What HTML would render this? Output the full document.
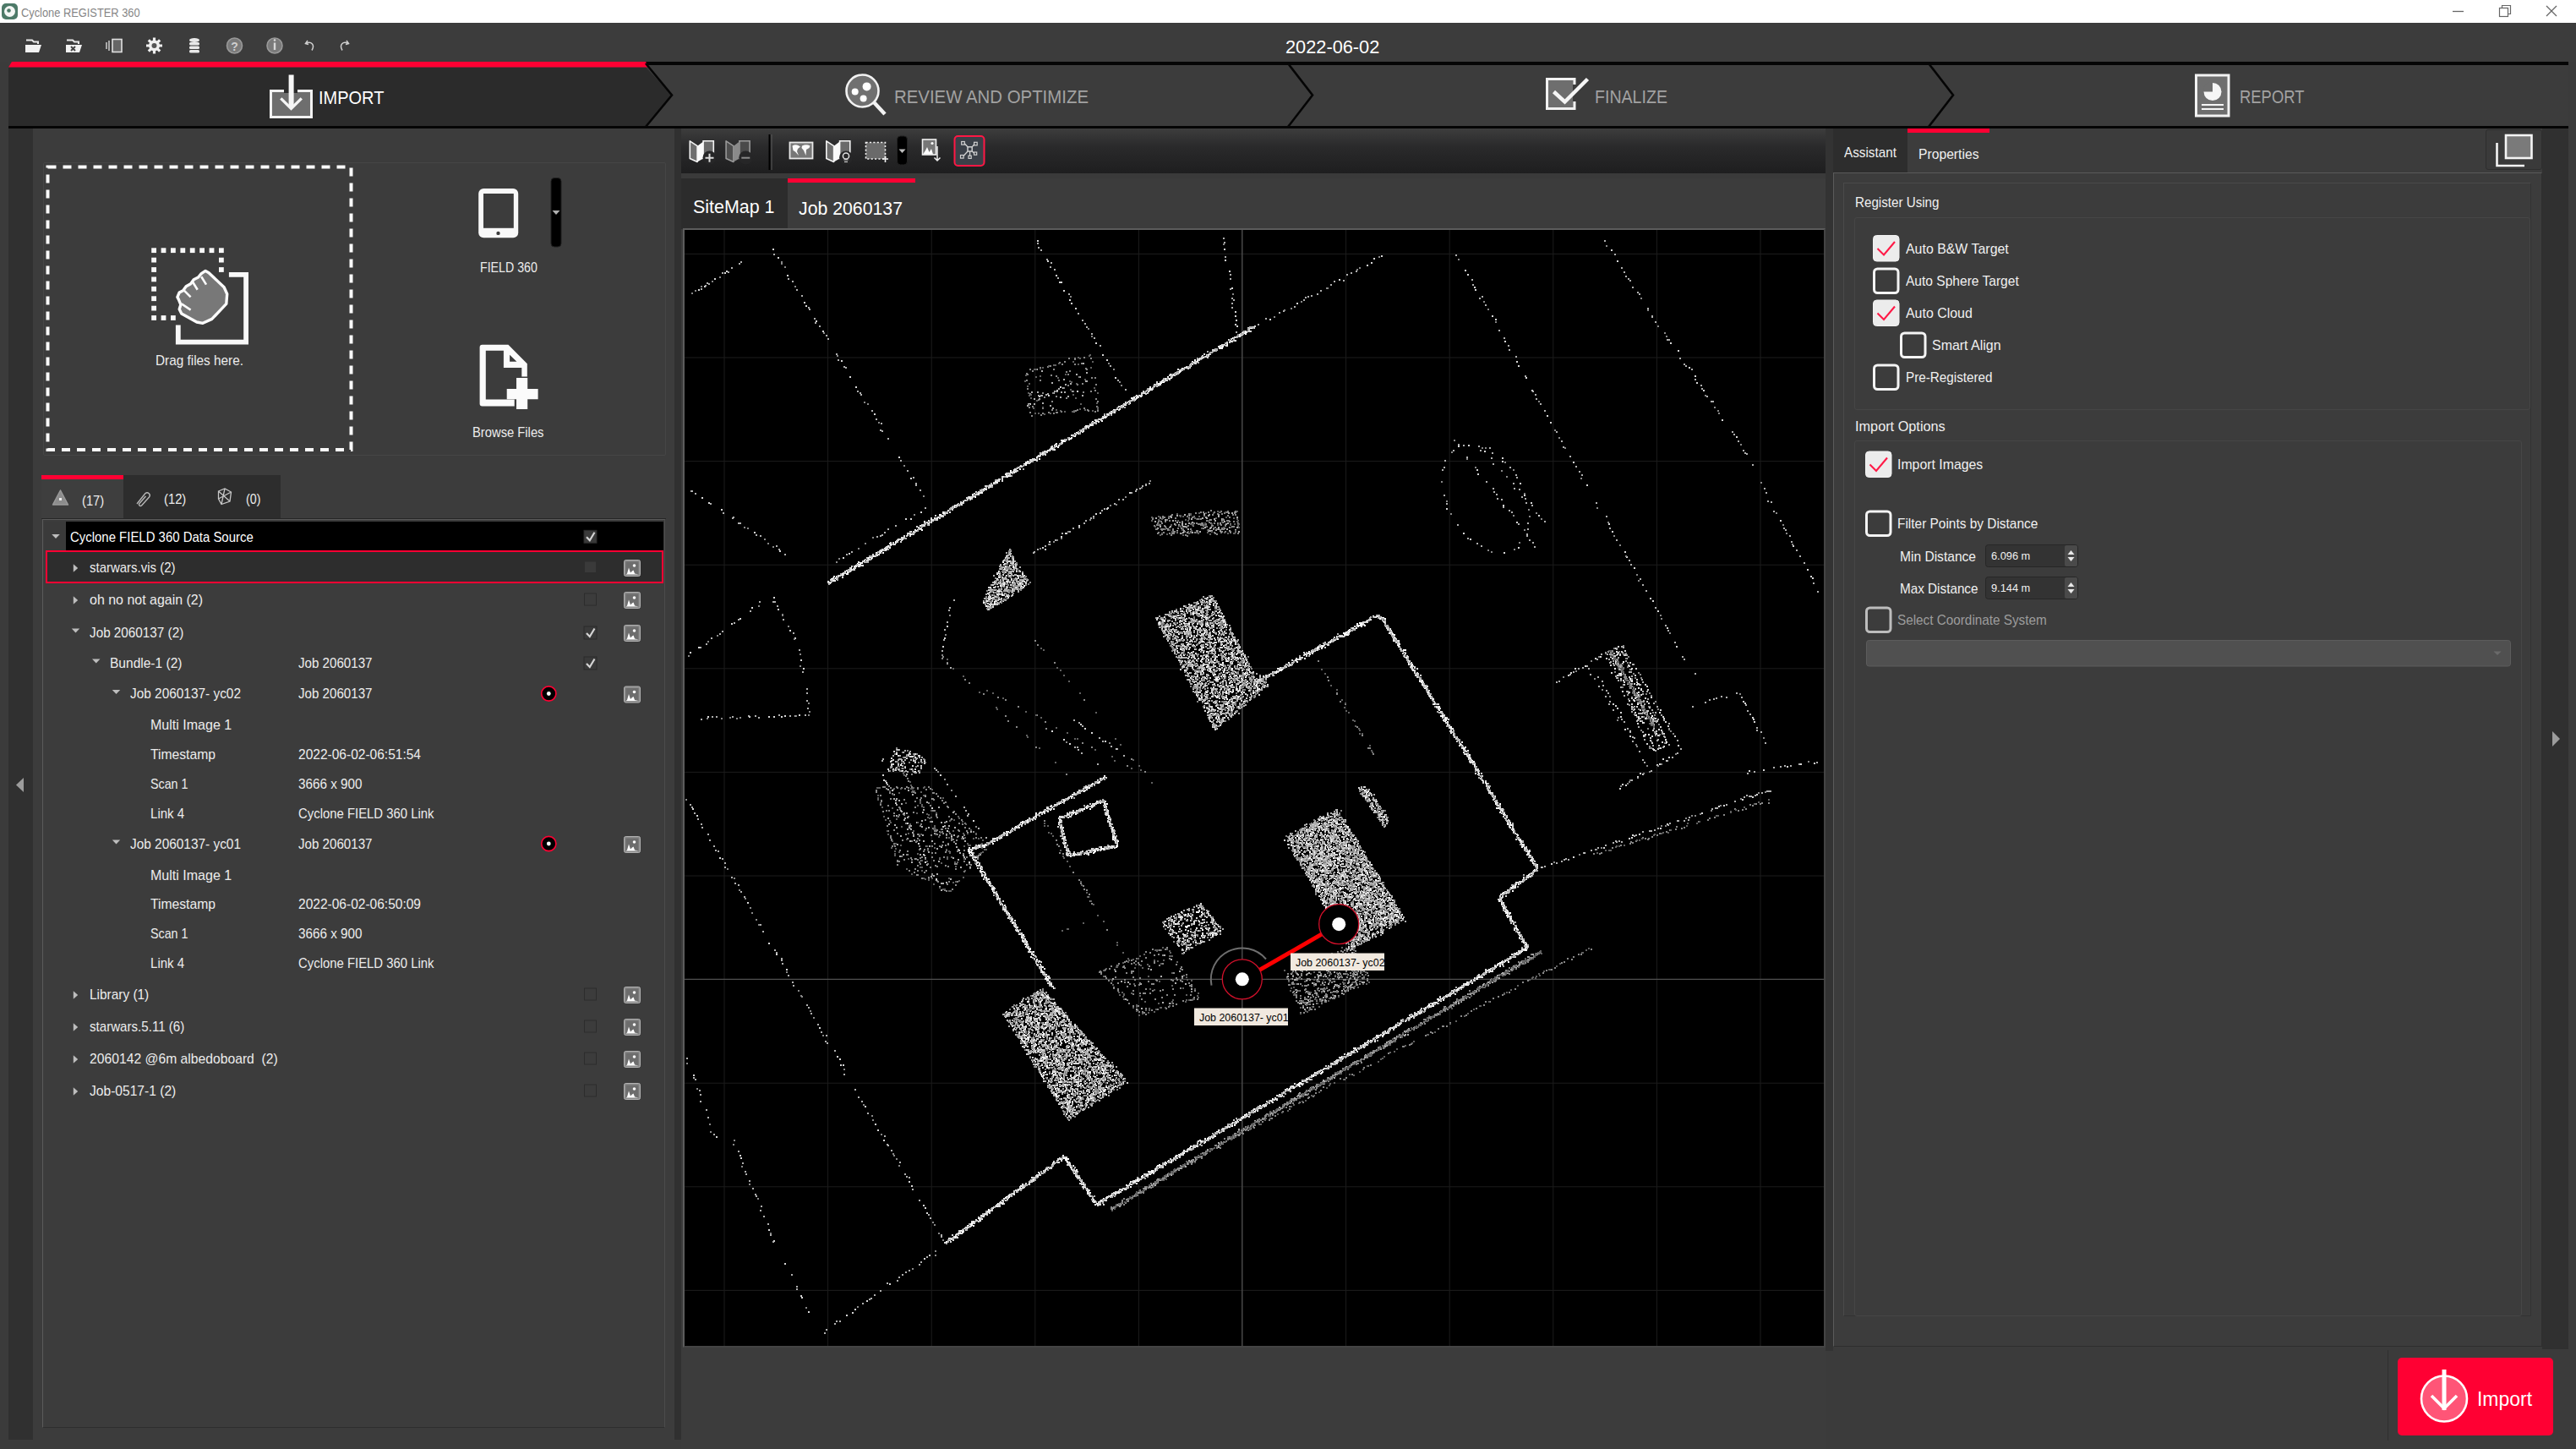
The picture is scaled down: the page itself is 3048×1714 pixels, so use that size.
<!DOCTYPE html>
<html><head><meta charset="utf-8">
<style>
*{box-sizing:border-box;margin:0;padding:0}
html,body{width:3048px;height:1714px;overflow:hidden;background:#3b3b3b;font-family:"Liberation Sans",sans-serif;color:#f0f0f0}
.a{position:absolute}
.t{position:absolute;white-space:nowrap;line-height:1;transform-origin:0 0}
svg{position:absolute;overflow:visible}
</style></head><body>
<div class="a" style="left:0px;top:0px;width:3048px;height:27px;background:#fff"></div><svg style="left:0;top:0" width="30" height="27">
<rect x="2" y="4" width="19" height="19" rx="5" fill="#4d7a68"/>
<circle cx="11.5" cy="13.5" r="6.5" fill="#f4f7f5"/>
<circle cx="10.5" cy="12.5" r="2.3" fill="#4d7a68"/>
</svg><div class="t" style="transform:scaleX(0.8561);left:25px;top:7px;font-size:15px;color:#868686;">Cyclone REGISTER 360</div><svg style="left:0;top:0" width="3048" height="27">
<path d="M2902 13.5 H2915" stroke="#666" stroke-width="1.3"/>
<rect x="2957.5" y="9.5" width="10" height="10" fill="none" stroke="#666" stroke-width="1.2"/>
<path d="M2960.5 9.5 V6.5 H2970.5 V16.5 H2967.5" fill="none" stroke="#666" stroke-width="1.2"/>
<path d="M3013 7 L3025 19 M3025 7 L3013 19" stroke="#666" stroke-width="1.3"/>
</svg><div class="a" style="left:0px;top:27px;width:3048px;height:46px;background:#3c3c3c"></div><div id="date" class="t" style="transform:scaleX(0.9889);left:1521px;top:45px;font-size:22px;color:#fff">2022-06-02</div><svg style="left:0;top:0" width="500" height="80" fill="none">
<!-- open folder -->
<path d="M31 47.5 H38 L40 49.5 H45 V52" stroke="#e8e8e8" stroke-width="2"/>
<path d="M30 53 H49 L46 62 H30 Z" fill="#f2f2f2"/>
<!-- close folder -->
<path d="M79 47.5 H86 L88 49.5 H93 V52" stroke="#e8e8e8" stroke-width="2"/>
<path d="M78 53 H97 L94 62 H78 Z" fill="#f2f2f2"/>
<path d="M84 55 L89 60 M89 55 L84 60" stroke="#444" stroke-width="2"/>
<!-- export -->
<rect x="133" y="46.5" width="11" height="15" stroke="#e0e0e0" stroke-width="1.6" fill="#666"/>
<path d="M126 50 V58 M129 48 V60" stroke="#d8d8d8" stroke-width="1.4"/>
<!-- gear -->
<g transform="translate(182.5 54)">
<circle r="6.5" fill="#f0f0f0"/>
<path d="M0 -9.5 V9.5 M-9.5 0 H9.5 M-6.7 -6.7 L6.7 6.7 M6.7 -6.7 L-6.7 6.7" stroke="#f0f0f0" stroke-width="3.2"/>
<circle r="3" fill="#555"/>
</g>
<!-- database -->
<g fill="#e8e8e8">
<ellipse cx="230" cy="47.5" rx="6" ry="2.5"/>
<rect x="224" y="50" width="12" height="3.5" rx="1.5"/>
<rect x="224" y="54.5" width="12" height="3.5" rx="1.5"/>
<rect x="224" y="59" width="12" height="3.5" rx="1.5"/>
</g>
<!-- help -->
<circle cx="277.5" cy="54" r="9" stroke="#9a9a9a" stroke-width="1.6" fill="#7a7a7a"/>
<text x="277.5" y="59.5" font-size="14" font-family="Liberation Sans" font-weight="bold" fill="#cfcfcf" text-anchor="middle">?</text>
<!-- info -->
<circle cx="325" cy="54" r="9" stroke="#9a9a9a" stroke-width="1.6" fill="#7a7a7a"/>
<path d="M325 50.5 V59" stroke="#d8d8d8" stroke-width="2.4"/>
<circle cx="325" cy="47.5" r="1.3" fill="#d8d8d8"/>
<!-- undo -->
<path d="M364 48 L361.5 51.5 L365 52.5" stroke="#d0d0d0" stroke-width="1.5"/>
<path d="M362 51.5 C368 48 373 53 369 59.5" stroke="#d0d0d0" stroke-width="1.5"/>
<!-- redo -->
<path d="M410 48 L412.5 51.5 L409 52.5" stroke="#d0d0d0" stroke-width="1.5"/>
<path d="M412 51.5 C406 48 401 53 405 59.5" stroke="#d0d0d0" stroke-width="1.5"/>
</svg><div class="a" style="left:10px;top:73px;width:3029px;height:79px;background:#3c3c3c"></div><div class="a" style="left:764px;top:73px;width:2275px;height:3.5px;background:#050505"></div><div class="a" style="left:10px;top:149px;width:3029px;height:3px;background:#050505"></div><svg style="left:0;top:0" width="3048" height="160">
 <polygon points="10,79.5 764,79.5 795,112.5 764,149 10,149" fill="#2b2b2b"/>
 <polygon points="14,73 764,73 768,79.5 10,79.5" fill="#ff0033"/>
 <polyline points="764,75 795,112.5 764,150" fill="none" stroke="#050505" stroke-width="2.6"/>
 <polyline points="1524,75 1553,112.5 1524,150" fill="none" stroke="#050505" stroke-width="2.6"/>
 <polyline points="2282,75 2311,112.5 2282,150" fill="none" stroke="#050505" stroke-width="2.6"/>
 <!-- import icon -->
 <rect x="320.5" y="107.5" width="48" height="31" fill="#6e6e6e" stroke="#f2f2f2" stroke-width="3"/>
 <rect x="336" y="104" width="16" height="6" fill="#2b2b2b"/>
 <path d="M344.6 88.5 V127" stroke="#f6f6f6" stroke-width="6"/>
 <path d="M332.3 116.3 L344.5 128.5 L356.8 116.3" stroke="#f6f6f6" stroke-width="3.3" fill="none"/>
 <!-- review icon -->
 <path d="M1034 121 L1047 135" stroke="#f2f2f2" stroke-width="4.5"/>
 <circle cx="1020.5" cy="107.5" r="19" fill="#707070" stroke="#f2f2f2" stroke-width="2.6"/>
 <circle cx="1025.6" cy="102.4" r="5" fill="#fff"/>
 <circle cx="1011.7" cy="108.6" r="4" fill="#fff"/>
 <circle cx="1021.6" cy="116.6" r="4" fill="#fff"/>
 <!-- finalize icon -->
 <rect x="1830.5" y="93.5" width="32.5" height="35" fill="#6e6e6e" stroke="#f2f2f2" stroke-width="3"/>
 <rect x="1861" y="100" width="6" height="20" fill="#3c3c3c"/>
 <path d="M1838.5 108.5 L1851.5 120.5 L1878.5 93.5" stroke="#f6f6f6" stroke-width="4.5" fill="none"/>
 <!-- report icon -->
 <rect x="2598.5" y="89" width="38.5" height="48" fill="#6e6e6e" stroke="#f2f2f2" stroke-width="3"/>
 <circle cx="2618" cy="108.5" r="10.5" fill="#f6f6f6"/>
 <path d="M2618 108.5 V97 A11.5 11.5 0 0 0 2606.5 108.5 Z" fill="#6e6e6e"/>
 <path d="M2605 124 H2631 M2605 129 H2631" stroke="#f6f6f6" stroke-width="2"/>
</svg><div id="st1" class="t" style="transform:scaleX(0.8930);left:377px;top:105px;font-size:22.4px;color:#fff">IMPORT</div><div id="st2" class="t" style="transform:scaleX(0.9107);left:1058px;top:104px;font-size:22.4px;color:#a2a2a2">REVIEW AND OPTIMIZE</div><div id="st3" class="t" style="transform:scaleX(0.8749);left:1887px;top:104px;font-size:22.4px;color:#a2a2a2">FINALIZE</div><div id="st4" class="t" style="transform:scaleX(0.8234);left:2650px;top:104px;font-size:22.4px;color:#a2a2a2">REPORT</div><div class="a" style="left:10px;top:152px;width:29px;height:1551px;background:#303030"></div><svg style="left:0;top:0" width="60" height="1714"><polygon points="19,928.5 28,920 28,937" fill="#9c9c9c"/></svg><div class="a" style="left:39px;top:152px;width:760px;height:1551px;background:#3c3c3c"></div><div class="a" style="left:798px;top:152px;width:8px;height:1551px;background:#303030"></div><div class="a" style="left:51px;top:192px;width:737px;height:347px;border:1px solid #464646;border-radius:2px"></div><svg style="left:0;top:0" width="800" height="560" fill="none">
<rect x="56.5" y="197.5" width="359" height="334.5" stroke="#fafafa" stroke-width="4" stroke-dasharray="10 8"/>
<rect x="179.2" y="293.3" width="5.8" height="5.8" fill="#f8f8f8"/><rect x="190.6" y="293.3" width="5.8" height="5.8" fill="#f8f8f8"/><rect x="202.0" y="293.3" width="5.8" height="5.8" fill="#f8f8f8"/><rect x="213.4" y="293.3" width="5.8" height="5.8" fill="#f8f8f8"/><rect x="224.8" y="293.3" width="5.8" height="5.8" fill="#f8f8f8"/><rect x="236.2" y="293.3" width="5.8" height="5.8" fill="#f8f8f8"/><rect x="247.6" y="293.3" width="5.8" height="5.8" fill="#f8f8f8"/><rect x="259.0" y="293.3" width="5.8" height="5.8" fill="#f8f8f8"/><rect x="179.2" y="304.7" width="5.8" height="5.8" fill="#f8f8f8"/><rect x="179.2" y="316.1" width="5.8" height="5.8" fill="#f8f8f8"/><rect x="179.2" y="327.5" width="5.8" height="5.8" fill="#f8f8f8"/><rect x="179.2" y="338.9" width="5.8" height="5.8" fill="#f8f8f8"/><rect x="179.2" y="350.3" width="5.8" height="5.8" fill="#f8f8f8"/><rect x="179.2" y="361.7" width="5.8" height="5.8" fill="#f8f8f8"/><rect x="179.2" y="373.1" width="5.8" height="5.8" fill="#f8f8f8"/><rect x="259.0" y="304.7" width="5.8" height="5.8" fill="#f8f8f8"/><rect x="259.0" y="316.1" width="5.8" height="5.8" fill="#f8f8f8"/><rect x="190.6" y="373.1" width="5.8" height="5.8" fill="#f8f8f8"/><rect x="202.0" y="373.1" width="5.8" height="5.8" fill="#f8f8f8"/>
<path d="M270.9 324.9 H291.1 V404.7 H210.8 V384.6" stroke="#f8f8f8" stroke-width="5.8"/>
<path d="M209.9 351.4 L212.2 346 L216.6 343.7 L220.2 338.8 L225.6 335.7 L229.2 330.7 L234.6 328 L238.2 323.6 L243.1 320.4 L247.1 322.7 L265.1 339.7 L268.7 347.8 L267.8 359.4 L250.7 377.4 L240 382.3 L232.8 381 L214.8 371.1 L212.2 365.7 L213.9 360.3 L211.3 354.1Z" fill="#787878" stroke="#fbfbfb" stroke-width="3.4" stroke-linejoin="round"/>
<path d="M216.6 342.4 L225.6 351.4 M227.4 332.5 L233.7 342.8 M238.2 327.2 L244 336.6 M214.8 359.4 L225.6 366.6" stroke="#fbfbfb" stroke-width="2.6"/>
<!-- tablet -->
<rect x="566.2" y="223" width="47" height="58.2" rx="6" fill="#f8f8f8"/>
<rect x="572" y="229" width="35.8" height="40.8" fill="#3c3c3c"/>
<circle cx="589.5" cy="275.9" r="2.2" fill="#3c3c3c"/>
<!-- dropdown -->
<rect x="652" y="210.5" width="12" height="81.5" rx="4" fill="#000" stroke="#202020" stroke-width="1"/>
<polygon points="653.5,249 662.5,249 658,254" fill="#b0b0b0"/>
<!-- browse file icon -->
<path fill-rule="evenodd" fill="#fbfbfb" d="M570.6 407.8 H601.4 L623.8 430.2 V445.4 H617.3 V435 H595.9 V414.7 H574.8 V472.6 H608.7 V480.6 H570.6 Q567.6 480.6 567.6 477.6 V410.8 Q567.6 407.8 570.6 407.8 Z M603.1 419.8 V427.8 H611.4 Z"/>
<path fill="#fbfbfb" d="M611 447.1 H624.2 V459.9 H636.6 V472.3 H624.2 V484 H611 V472.3 H599.7 V459.9 H611 Z"/>
</svg><div id="drag" class="t" style="transform:scaleX(0.9021);left:184px;top:418px;font-size:17px;color:#ececec">Drag files here.</div><div id="f360" class="t" style="transform:scaleX(0.8865);left:568px;top:309px;font-size:16px;color:#ececec">FIELD 360</div><div id="brw" class="t" style="transform:scaleX(0.8683);left:559px;top:503px;font-size:17px;color:#ececec">Browse Files</div><div class="a" style="left:49px;top:562px;width:97px;height:51px;background:#3e3e3e"></div><div class="a" style="left:49px;top:562px;width:97px;height:4.5px;background:#ff0033"></div><div class="a" style="left:146px;top:562px;width:186px;height:51px;background:#2d2d2d"></div><svg style="left:0;top:0" width="400" height="660" fill="none">
<path d="M71.5 580 L80.5 597 H62.5 Z" fill="#8c8c8c" stroke="#9a9a9a" stroke-width="1.5" stroke-linejoin="round"/>
<rect x="70" y="589" width="3" height="3" fill="#eee"/>
<path d="M162 596 L172 583.5 A3.2 3.2 0 0 1 176.5 588 L167.5 598 A1.7 1.7 0 0 1 165 595.5 L172.5 587" stroke="#b8b8b8" stroke-width="1.4"/>
<path d="M258.5 581 L266 578 L273.5 582 L272 593 L262 596.5 L258.5 590 Z M258.5 581 L272 593 M266 578 L262 596.5 M273.5 582 L258.5 590" stroke="#c8c8c8" stroke-width="1.3"/>
</svg><div class="t" style="transform:scaleX(0.8666);left:97px;top:584px;font-size:17px;color:#ececec">(17)</div><div class="t" style="transform:scaleX(0.8699);left:194px;top:582px;font-size:17px;color:#ececec">(12)</div><div class="t" style="transform:scaleX(0.8373);left:291px;top:582px;font-size:17px;color:#ececec">(0)</div><div class="a" style="left:49px;top:612.5px;width:739px;height:1px;background:#262626"></div><div class="a" style="left:50px;top:614px;width:737px;height:1075px;border:1px solid #5a5a5a;border-right-color:#4c4c4c;border-bottom-color:#2e2e2e;background:#3c3c3c"></div><div class="a" style="left:52px;top:617px;width:26px;height:34px;background:#3a3a3a"></div><div class="a" style="left:78px;top:617px;width:707px;height:34px;background:#000"></div><div class="a" style="left:54px;top:651px;width:731px;height:39px;background:#2d2d2d;border:2px solid #ff0033"></div><div class="t tr" style="transform:scaleX(0.8808);left:106px;top:662.7px;font-size:17px;color:#ececec">starwars.vis (2)</div><div class="t tr" style="transform:scaleX(0.9389);left:106px;top:700.7px;font-size:17px;color:#ececec">oh no not again (2)</div><div class="t tr" style="transform:scaleX(0.8984);left:106px;top:739.7px;font-size:17px;color:#ececec">Job 2060137 (2)</div><div class="t tr" style="transform:scaleX(0.9138);left:130px;top:775.7px;font-size:17px;color:#ececec">Bundle-1 (2)</div><div class="t tr" style="transform:scaleX(0.8899);left:352.5px;top:775.7px;font-size:17px;color:#ececec">Job 2060137</div><div class="t tr" style="transform:scaleX(0.9059);left:154px;top:812.2px;font-size:17px;color:#ececec">Job 2060137- yc02</div><div class="t tr" style="transform:scaleX(0.8899);left:352.5px;top:812.2px;font-size:17px;color:#ececec">Job 2060137</div><div class="t tr" style="transform:scaleX(0.9432);left:178px;top:848.7px;font-size:17px;color:#ececec">Multi Image 1</div><div class="t tr" style="transform:scaleX(0.9227);left:178px;top:883.7px;font-size:17px;color:#ececec">Timestamp</div><div class="t tr" style="transform:scaleX(0.9131);left:352.5px;top:883.7px;font-size:17px;color:#ececec">2022-06-02-06:51:54</div><div class="t tr" style="transform:scaleX(0.8406);left:178px;top:918.7px;font-size:17px;color:#ececec">Scan 1</div><div class="t tr" style="transform:scaleX(0.8973);left:352.5px;top:918.7px;font-size:17px;color:#ececec">3666 x 900</div><div class="t tr" style="transform:scaleX(0.8871);left:178px;top:953.7px;font-size:17px;color:#ececec">Link 4</div><div class="t tr" style="transform:scaleX(0.8755);left:352.5px;top:953.7px;font-size:17px;color:#ececec">Cyclone FIELD 360 Link</div><div class="t tr" style="transform:scaleX(0.9059);left:154px;top:989.7px;font-size:17px;color:#ececec">Job 2060137- yc01</div><div class="t tr" style="transform:scaleX(0.8899);left:352.5px;top:989.7px;font-size:17px;color:#ececec">Job 2060137</div><div class="t tr" style="transform:scaleX(0.9432);left:178px;top:1026.7px;font-size:17px;color:#ececec">Multi Image 1</div><div class="t tr" style="transform:scaleX(0.9227);left:178px;top:1060.7px;font-size:17px;color:#ececec">Timestamp</div><div class="t tr" style="transform:scaleX(0.9131);left:352.5px;top:1060.7px;font-size:17px;color:#ececec">2022-06-02-06:50:09</div><div class="t tr" style="transform:scaleX(0.8406);left:178px;top:1096.2px;font-size:17px;color:#ececec">Scan 1</div><div class="t tr" style="transform:scaleX(0.8973);left:352.5px;top:1096.2px;font-size:17px;color:#ececec">3666 x 900</div><div class="t tr" style="transform:scaleX(0.8871);left:178px;top:1131.2px;font-size:17px;color:#ececec">Link 4</div><div class="t tr" style="transform:scaleX(0.8755);left:352.5px;top:1131.2px;font-size:17px;color:#ececec">Cyclone FIELD 360 Link</div><div class="t tr" style="transform:scaleX(0.9068);left:106px;top:1167.7px;font-size:17px;color:#ececec">Library (1)</div><div class="t tr" style="transform:scaleX(0.8889);left:106px;top:1205.7px;font-size:17px;color:#ececec">starwars.5.11 (6)</div><div class="t tr" style="transform:scaleX(0.9233);left:106px;top:1243.7px;font-size:17px;color:#ececec">2060142 @6m albedoboard&nbsp; (2)</div><div class="t tr" style="transform:scaleX(0.9169);left:106px;top:1281.7px;font-size:17px;color:#ececec">Job-0517-1 (2)</div><div class="t" id="hdr" style="transform:scaleX(0.8787);left:83px;top:627px;font-size:17px;color:#fff">Cyclone FIELD 360 Data Source</div><svg style="left:0;top:0" width="800" height="1400" fill="none"><polygon points="61.25,632.0 70.75,632.0 66,637.0" fill="#bdbdbd"/><rect x="691" y="627.3" width="15" height="15" fill="#3a3a3a" stroke="#2a2a2a" stroke-width="1"/><path d="M694 635.3 L697.8 639.3 L703.5 629.8" stroke="#d4d4d4" stroke-width="2.2" fill="none"/><polygon points="86.8,667.25 92.2,672 86.8,676.75" fill="#bdbdbd"/><rect x="692" y="664.5" width="13" height="12.5" fill="#3a3a3a"/><rect x="738.5" y="662.5" width="19" height="19" rx="2" fill="#8a8a8a" stroke="#b0b0b0" stroke-width="1"/><rect x="740.5" y="664.5" width="15" height="15" fill="#6d6d6d"/><path d="M740.5 679.5 L742 678.5 L744 671.5 L746 677.5 L748 675.5 L749.5 674.5 L751 678.5 L755.5 679.5 Z" fill="#fff"/><circle cx="750.5" cy="669.0" r="1.8" fill="#fff"/><polygon points="86.8,705.25 92.2,710 86.8,714.75" fill="#bdbdbd"/><rect x="691.5" y="702.0" width="14" height="14" fill="#3c3c3c" stroke="#2c2c2c" stroke-width="1"/><rect x="738.5" y="700.5" width="19" height="19" rx="2" fill="#8a8a8a" stroke="#b0b0b0" stroke-width="1"/><rect x="740.5" y="702.5" width="15" height="15" fill="#6d6d6d"/><path d="M740.5 717.5 L742 716.5 L744 709.5 L746 715.5 L748 713.5 L749.5 712.5 L751 716.5 L755.5 717.5 Z" fill="#fff"/><circle cx="750.5" cy="707.0" r="1.8" fill="#fff"/><polygon points="84.75,743.5 94.25,743.5 89.5,748.5" fill="#bdbdbd"/><rect x="691" y="741.0" width="15" height="15" fill="#3a3a3a" stroke="#2a2a2a" stroke-width="1"/><path d="M694 749.0 L697.8 753.0 L703.5 743.5" stroke="#d4d4d4" stroke-width="2.2" fill="none"/><rect x="738.5" y="739.5" width="19" height="19" rx="2" fill="#8a8a8a" stroke="#b0b0b0" stroke-width="1"/><rect x="740.5" y="741.5" width="15" height="15" fill="#6d6d6d"/><path d="M740.5 756.5 L742 755.5 L744 748.5 L746 754.5 L748 752.5 L749.5 751.5 L751 755.5 L755.5 756.5 Z" fill="#fff"/><circle cx="750.5" cy="746.0" r="1.8" fill="#fff"/><polygon points="109.0,779.5 118.5,779.5 113.75,784.5" fill="#bdbdbd"/><rect x="691" y="777.0" width="15" height="15" fill="#3a3a3a" stroke="#2a2a2a" stroke-width="1"/><path d="M694 785.0 L697.8 789.0 L703.5 779.5" stroke="#d4d4d4" stroke-width="2.2" fill="none"/><polygon points="132.75,816.0 142.25,816.0 137.5,821.0" fill="#bdbdbd"/><rect x="738.5" y="812.0" width="19" height="19" rx="2" fill="#8a8a8a" stroke="#b0b0b0" stroke-width="1"/><rect x="740.5" y="814.0" width="15" height="15" fill="#6d6d6d"/><path d="M740.5 829.0 L742 828.0 L744 821.0 L746 827.0 L748 825.0 L749.5 824.0 L751 828.0 L755.5 829.0 Z" fill="#fff"/><circle cx="750.5" cy="818.5" r="1.8" fill="#fff"/><circle cx="649.3" cy="820.5" r="8.6" fill="#000" stroke="#ff0033" stroke-width="1.6"/><circle cx="649.3" cy="820.5" r="2.4" fill="#fff"/><polygon points="132.75,993.5 142.25,993.5 137.5,998.5" fill="#bdbdbd"/><rect x="738.5" y="989.5" width="19" height="19" rx="2" fill="#8a8a8a" stroke="#b0b0b0" stroke-width="1"/><rect x="740.5" y="991.5" width="15" height="15" fill="#6d6d6d"/><path d="M740.5 1006.5 L742 1005.5 L744 998.5 L746 1004.5 L748 1002.5 L749.5 1001.5 L751 1005.5 L755.5 1006.5 Z" fill="#fff"/><circle cx="750.5" cy="996.0" r="1.8" fill="#fff"/><circle cx="649.3" cy="998" r="8.6" fill="#000" stroke="#ff0033" stroke-width="1.6"/><circle cx="649.3" cy="998" r="2.4" fill="#fff"/><polygon points="86.8,1172.25 92.2,1177 86.8,1181.75" fill="#bdbdbd"/><rect x="691.5" y="1169.0" width="14" height="14" fill="#3c3c3c" stroke="#2c2c2c" stroke-width="1"/><rect x="738.5" y="1167.5" width="19" height="19" rx="2" fill="#8a8a8a" stroke="#b0b0b0" stroke-width="1"/><rect x="740.5" y="1169.5" width="15" height="15" fill="#6d6d6d"/><path d="M740.5 1184.5 L742 1183.5 L744 1176.5 L746 1182.5 L748 1180.5 L749.5 1179.5 L751 1183.5 L755.5 1184.5 Z" fill="#fff"/><circle cx="750.5" cy="1174.0" r="1.8" fill="#fff"/><polygon points="86.8,1210.25 92.2,1215 86.8,1219.75" fill="#bdbdbd"/><rect x="691.5" y="1207.0" width="14" height="14" fill="#3c3c3c" stroke="#2c2c2c" stroke-width="1"/><rect x="738.5" y="1205.5" width="19" height="19" rx="2" fill="#8a8a8a" stroke="#b0b0b0" stroke-width="1"/><rect x="740.5" y="1207.5" width="15" height="15" fill="#6d6d6d"/><path d="M740.5 1222.5 L742 1221.5 L744 1214.5 L746 1220.5 L748 1218.5 L749.5 1217.5 L751 1221.5 L755.5 1222.5 Z" fill="#fff"/><circle cx="750.5" cy="1212.0" r="1.8" fill="#fff"/><polygon points="86.8,1248.25 92.2,1253 86.8,1257.75" fill="#bdbdbd"/><rect x="691.5" y="1245.0" width="14" height="14" fill="#3c3c3c" stroke="#2c2c2c" stroke-width="1"/><rect x="738.5" y="1243.5" width="19" height="19" rx="2" fill="#8a8a8a" stroke="#b0b0b0" stroke-width="1"/><rect x="740.5" y="1245.5" width="15" height="15" fill="#6d6d6d"/><path d="M740.5 1260.5 L742 1259.5 L744 1252.5 L746 1258.5 L748 1256.5 L749.5 1255.5 L751 1259.5 L755.5 1260.5 Z" fill="#fff"/><circle cx="750.5" cy="1250.0" r="1.8" fill="#fff"/><polygon points="86.8,1286.25 92.2,1291 86.8,1295.75" fill="#bdbdbd"/><rect x="691.5" y="1283.0" width="14" height="14" fill="#3c3c3c" stroke="#2c2c2c" stroke-width="1"/><rect x="738.5" y="1281.5" width="19" height="19" rx="2" fill="#8a8a8a" stroke="#b0b0b0" stroke-width="1"/><rect x="740.5" y="1283.5" width="15" height="15" fill="#6d6d6d"/><path d="M740.5 1298.5 L742 1297.5 L744 1290.5 L746 1296.5 L748 1294.5 L749.5 1293.5 L751 1297.5 L755.5 1298.5 Z" fill="#fff"/><circle cx="750.5" cy="1288.0" r="1.8" fill="#fff"/></svg><div class="a" style="left:806px;top:152px;width:1354px;height:53px;background:linear-gradient(#3d3d3d 0%,#2a2a2b 40%,#1e1e1f 100%)"></div><div class="a" style="left:806px;top:205px;width:1354px;height:6px;background:#3a3a3a"></div><div class="a" style="left:806px;top:211px;width:126px;height:60px;background:#2c2c2c"></div><div class="a" style="left:932px;top:211px;width:151px;height:60px;background:#3c3c3c"></div><div class="a" style="left:932px;top:211px;width:151px;height:4.6px;background:#ff0033"></div><div class="a" style="left:1083px;top:211px;width:1077px;height:60px;background:#3c3c3c"></div><div id="tab1" class="t" style="transform:scaleX(0.9968);left:820px;top:235px;font-size:21.5px;color:#fff">SiteMap 1</div><div id="tab2" class="t" style="transform:scaleX(0.9892);left:945px;top:237px;font-size:21.5px;color:#fff">Job 2060137</div><div id="map" class="a" style="left:808px;top:270px;width:1352px;height:1324px;background:#000;border:2px solid #5c5c5c;border-right-color:#444;border-bottom-color:#444;overflow:hidden"></div><div class="a" style="left:806px;top:1594px;width:1354px;height:120px;background:#3c3c3c"></div><div class="a" style="left:2160px;top:152px;width:9px;height:1446px;background:#333"></div><div class="a" style="left:2169px;top:152px;width:839px;height:1441px;background:#3c3c3c"></div><div class="a" style="left:3008px;top:152px;width:31px;height:1444px;background:#303030"></div><svg style="left:0;top:0" width="3048" height="1714"><polygon points="3020,865 3029,874 3020,883" fill="#9c9c9c"/></svg><div class="a" style="left:2169px;top:152px;width:88px;height:53px;background:#2d2d2d"></div><div class="a" style="left:2257px;top:152px;width:97px;height:4.6px;background:#ff0033"></div><div id="asst" class="t" style="transform:scaleX(0.8988);left:2182px;top:172px;font-size:17px;color:#f0f0f0">Assistant</div><div id="prop" class="t" style="transform:scaleX(0.9228);left:2270px;top:174px;font-size:17px;color:#f0f0f0">Properties</div><div class="a" style="left:2941px;top:153px;width:67px;height:48px;background:#3a3a3a;border:1px solid #2e2e2e;border-radius:3px"></div><svg style="left:0;top:0" width="3048" height="300" fill="none">
<rect x="2965" y="160" width="30.5" height="27" fill="#7a7a7a" stroke="#f4f4f4" stroke-width="2.6"/>
<path d="M2954.5 169 V196 H2987" stroke="#f4f4f4" stroke-width="2.6"/>
</svg><div class="a" style="left:2169px;top:204px;width:839px;height:1389px;border:1px solid #5a5a5a;border-right-color:#2e2e2e;border-bottom-color:#2e2e2e"></div><div class="a" style="left:2181px;top:216px;width:814px;height:1341px;border:1px solid #4a4a4a;border-right-color:#333;border-bottom-color:#333"></div><div class="a" style="left:2194px;top:257px;width:800px;height:228px;border:1px solid #464646;border-radius:3px"></div><div class="a" style="left:2194px;top:521px;width:790px;height:1036px;border:1px solid #464646;border-radius:3px"></div><div class="t" style="transform:scaleX(0.8924);left:2195px;top:231px;font-size:17px;color:#f0f0f0;">Register Using</div><div class="t" style="transform:scaleX(0.9574);left:2195px;top:496px;font-size:17px;color:#f0f0f0;">Import Options</div><svg style="left:0;top:0" width="3048" height="900" fill="none"><rect x="2216.5" y="278.5" width="30.5" height="30.5" rx="4" fill="#ececec" stroke="#f2f2f2" stroke-width="1"/><path d="M2221.5 294.0 L2229 301.5 L2242 286.0" stroke="#ff1a47" stroke-width="2.1" fill="none"/><rect x="2217.5" y="318.0" width="28.5" height="28.5" rx="4" fill="none" stroke="#f4f4f4" stroke-width="3"/><rect x="2216.5" y="355.0" width="30.5" height="30.5" rx="4" fill="#ececec" stroke="#f2f2f2" stroke-width="1"/><path d="M2221.5 370.5 L2229 378 L2242 362.5" stroke="#ff1a47" stroke-width="2.1" fill="none"/><rect x="2249.5" y="394.0" width="28.5" height="28.5" rx="4" fill="none" stroke="#f4f4f4" stroke-width="3"/><rect x="2217.5" y="432.0" width="28.5" height="28.5" rx="4" fill="none" stroke="#f4f4f4" stroke-width="3"/><rect x="2207.5" y="534.0" width="30.5" height="30.5" rx="4" fill="#ececec" stroke="#f2f2f2" stroke-width="1"/><path d="M2212.5 549.5 L2220 557 L2233 541.5" stroke="#ff1a47" stroke-width="2.1" fill="none"/><rect x="2208.5" y="605.0" width="28.5" height="28.5" rx="4" fill="none" stroke="#f4f4f4" stroke-width="3"/><rect x="2208.5" y="719.0" width="28.5" height="28.5" rx="4" fill="none" stroke="#bdbdbd" stroke-width="3"/>
<rect x="2349.5" y="644.5" width="109" height="26" rx="3" fill="#333" stroke="#262626"/>
<rect x="2443" y="645" width="15" height="25" rx="2" fill="#4a4a4a"/>
<polygon points="2446.5,656 2454.5,656 2450.5,651" fill="#e8e8e8"/>
<polygon points="2446.5,659 2454.5,659 2450.5,664" fill="#e8e8e8"/>
<rect x="2349.5" y="682.5" width="109" height="26" rx="3" fill="#333" stroke="#262626"/>
<rect x="2443" y="683" width="15" height="25" rx="2" fill="#4a4a4a"/>
<polygon points="2446.5,694 2454.5,694 2450.5,689" fill="#e8e8e8"/>
<polygon points="2446.5,697 2454.5,697 2450.5,702" fill="#e8e8e8"/>
<rect x="2208.5" y="757.5" width="762" height="30.5" rx="3" fill="#505050" stroke="#5c5c5c"/>
<polygon points="2950.5,770.5 2959.5,770.5 2955,775" fill="#6a6a6a"/>
</svg><div class="t rp" style="transform:scaleX(0.9359);left:2254.5px;top:285.7px;font-size:17px;color:#f0f0f0">Auto B&amp;W Target</div><div class="t rp" style="transform:scaleX(0.9149);left:2254.5px;top:324.2px;font-size:17px;color:#f0f0f0">Auto Sphere Target</div><div class="t rp" style="transform:scaleX(0.9361);left:2254.5px;top:362.2px;font-size:17px;color:#f0f0f0">Auto Cloud</div><div class="t rp" style="transform:scaleX(0.9375);left:2286px;top:400.2px;font-size:17px;color:#f0f0f0">Smart Align</div><div class="t rp" style="transform:scaleX(0.8965);left:2254.5px;top:438.2px;font-size:17px;color:#f0f0f0">Pre-Registered</div><div class="t rp" style="transform:scaleX(0.9318);left:2245px;top:541.2px;font-size:17px;color:#f0f0f0">Import Images</div><div class="t rp" style="transform:scaleX(0.9070);left:2245px;top:611.2px;font-size:17px;color:#f0f0f0">Filter Points by Distance</div><div class="t rp" style="transform:scaleX(0.9159);left:2247.5px;top:649.7px;font-size:17px;color:#f0f0f0">Min Distance</div><div class="t rp" style="transform:scaleX(0.8982);left:2247.5px;top:688.2px;font-size:17px;color:#f0f0f0">Max Distance</div><div class="t rp" style="transform:scaleX(0.8993);left:2245px;top:725.2px;font-size:17px;color:#9c9c9c">Select Coordinate System</div><div class="t" style="transform:scaleX(0.9481);left:2356px;top:651px;font-size:13.5px;color:#f0f0f0;">6.096 m</div><div class="t" style="transform:scaleX(0.9481);left:2356px;top:689px;font-size:13.5px;color:#f0f0f0;">9.144 m</div><div class="a" style="left:2825px;top:1597px;width:1px;height:107px;background:#303030"></div><div class="a" style="left:2837px;top:1606px;width:184px;height:92px;background:#ff0033;border-radius:5px"></div><svg style="left:0;top:0" width="3048" height="1714" fill="none">
<circle cx="2892" cy="1654.5" r="27" fill="#ff5577" stroke="#fff" stroke-width="2.6"/>
<path d="M2892 1620 V1668" stroke="#fff" stroke-width="5"/>
<path d="M2877 1651 L2892 1666 L2907 1651" stroke="#fff" stroke-width="3.6"/>
</svg><div id="impb" class="t" style="transform:scaleX(0.9557);left:2931px;top:1643px;font-size:24px;color:#fff">Import</div><svg style="left:0;top:0" width="1200" height="220" fill="none">
<g transform="translate(0 0)">
<path d="M832.1 166.8 H844.3 V187.4 H832.1 Z" fill="#6a6a6a" stroke="#f4f4f4" stroke-width="1.6"/>
<path d="M816.3 166.8 L825.1 172.7 V191.5 L816.3 187.4 Z" fill="#6e6e6e" stroke="#f4f4f4" stroke-width="1.6" stroke-linejoin="round"/>
<path d="M825.1 172.7 L832.1 167.5 V187.4 L825.1 191.5 Z" fill="#fafafa"/>
<circle cx="839.5" cy="186.5" r="8" fill="#262627"/>
</g>
<path d="M834.5 186.7 H844.5 M839.5 181.7 V191.7" stroke="#dcdcdc" stroke-width="2"/>
<g transform="translate(42.8 0)">
<path d="M832.1 166.8 H844.3 V187.4 H832.1 Z" fill="#4a4a4a" stroke="#9a9a9a" stroke-width="1.6"/>
<path d="M816.3 166.8 L825.1 172.7 V191.5 L816.3 187.4 Z" fill="#4e4e4e" stroke="#9a9a9a" stroke-width="1.6" stroke-linejoin="round"/>
<path d="M825.1 172.7 L832.1 167.5 V187.4 L825.1 191.5 Z" fill="#8a8a8a"/>
<circle cx="839.5" cy="186.5" r="8" fill="#262627"/>
</g>
<path d="M877.3 186.7 H887.3" stroke="#8a8a8a" stroke-width="2"/>
<!-- separator -->
<path d="M910.5 159 V201" stroke="#000" stroke-width="2"/>
<path d="M913 159 V201" stroke="#5a5a5a" stroke-width="1"/>
<!-- world -->
<rect x="934.5" y="168.5" width="27" height="19" fill="#777" stroke="#e8e8e8" stroke-width="1.8"/>
<path d="M937.5 172.5 Q941 170.5 944.5 172 L947 173.5 L944 176 L943 179 L945 184 L941 179.5 L938.5 178 Z" fill="#fafafa"/>
<path d="M949 172.5 Q954 170 958.5 172.5 L957.5 175 L954 177 L953.5 184 L951 178 L948.5 175 Z" fill="#fafafa"/>
<!-- map pin -->
<g transform="translate(161.5 0)">
<path d="M832.1 166.8 H844.3 V187.4 H832.1 Z" fill="#6a6a6a" stroke="#f4f4f4" stroke-width="1.6"/>
<path d="M816.3 166.8 L825.1 172.7 V191.5 L816.3 187.4 Z" fill="#6e6e6e" stroke="#f4f4f4" stroke-width="1.6" stroke-linejoin="round"/>
<path d="M825.1 172.7 L832.1 167.5 V187.4 L825.1 191.5 Z" fill="#fafafa"/>
<circle cx="839.5" cy="186.5" r="8" fill="#262627"/>
</g>
<circle cx="1001" cy="184.5" r="3.6" fill="none" stroke="#e0e0e0" stroke-width="1.5"/>
<path d="M998.5 189 H1003.5 M999 191.5 H1003" stroke="#e0e0e0" stroke-width="1.2"/>
<!-- select rect -->
<rect x="1024.5" y="168.5" width="23" height="19.5" fill="#6a6a6a" stroke="#f0f0f0" stroke-width="1.6" stroke-dasharray="2.2 2.2"/>
<path d="M1044 188 H1051 M1047.5 184.5 V192" stroke="#f0f0f0" stroke-width="1.6"/>
<!-- dropdown -->
<rect x="1061.5" y="161" width="12" height="34" rx="4" fill="#000" stroke="#222"/>
<polygon points="1063.5,176.5 1071.5,176.5 1067.5,181" fill="#c0c0c0"/>
<!-- image down -->
<rect x="1091.5" y="165" width="16" height="18" fill="#777" stroke="#f0f0f0" stroke-width="1.6"/>
<path d="M1092 182.5 L1095 178 L1097 174 L1099.5 180 L1102 176 L1104 182.5 Z" fill="#fff"/>
<circle cx="1103" cy="169.5" r="1.6" fill="#fff"/>
<path d="M1109 173 V190 M1105.5 186.5 L1109 190 L1112.5 186.5" stroke="#f0f0f0" stroke-width="1.5"/>
<!-- highlighted network button -->
<rect x="1129.5" y="161" width="35" height="35" rx="4" fill="#3a4048" stroke="#ff1744" stroke-width="2"/>
<rect x="1145" y="173.8" width="5.2" height="5.2" stroke="#d8d8d8" stroke-width="1.4"/>
<path d="M1145 173.8 L1141 169.5 M1150.2 173.8 L1153 170.5 M1145 179 L1140 184.5 M1150.2 179 L1153 181.5 M1147.6 179 V184" stroke="#d0d0d0" stroke-width="1.3"/>
<rect x="1137.7" y="167.5" width="3.6" height="3.6" stroke="#d0d0d0" stroke-width="1.2"/>
<rect x="1152.6" y="168.3" width="3.6" height="3.6" stroke="#d0d0d0" stroke-width="1.2"/>
<rect x="1136.5" y="183.5" width="3.6" height="3.6" stroke="#d0d0d0" stroke-width="1.2"/>
<rect x="1152.5" y="180" width="3.2" height="3.2" stroke="#d0d0d0" stroke-width="1.2"/>
<rect x="1146" y="184.2" width="3.2" height="3.2" stroke="#d0d0d0" stroke-width="1.2"/>
</svg><svg style="left:0;top:0" width="3048" height="1714"><defs><clipPath id="mc"><rect x="810" y="272" width="1348" height="1320"/></clipPath></defs><g clip-path="url(#mc)"><path d="M857.0 272V1592M979.6 272V1592M1102.2 272V1592M1224.8 272V1592M1347.4 272V1592M1470.0 272V1592M1592.6 272V1592M1715.2 272V1592M1837.8 272V1592M1960.4 272V1592M2083.0 272V1592M810 300.4H2158M810 423.0H2158M810 545.6H2158M810 668.2H2158M810 790.8H2158M810 913.4H2158M810 1036.0H2158M810 1158.6H2158M810 1281.2H2158M810 1403.8H2158M810 1526.4H2158" stroke="#1c1c1c" stroke-width="1"/><path d="M1469.8 272V1592M810 1158.3H2158" stroke="#5e5e5e" stroke-width="1"/><path stroke="#ffffff" stroke-width="2" stroke-linecap="square" d="M1479 388h0m2-1h0m0 1h0m-4 4h0m-2 1h0m-1-1h0m0 3h0m0-1h0m-1 0h0m-3 0h0m-11 6h0m3-1h0m4-2h0m0-1h0m1 1h0m0 1h0m2-2h0m1 0h0m-8 7h0m-2 0h0m-2 1h0m-1 0h0m-1-1h0m-1 1h0m0 1h0m-3 1h0m-10 4h0m1 2h0m1 0h0m0-1h0m2-1h0m0 2h0m1-2h0m1-2h0m1 0h0m3 1h0m0-1h0m-12 6h0m-3 1h0m-4 2h0m-2 2h0m-12 6h0m1-1h0m2-1h0m0 1h0m2-1h0m6-2h0m0-1h0m-13 7h0m-1 1h0m-2-2h0m-2 3h0m-1-1h0m0 3h0m-2 0h0m-15 6h0m5-1h0m2 0h0m0 1h0m2-2h0m2 0h0m1 1h0m1-1h0m2-2h0m0-1h0m-11 6h0m-1 1h0m-1 1h0m-1 1h0m-3 2h0m0-1h0m-4 1h0m-3 0h0m-6 5h0m3-2h0m2 2h0m2-1h0m2-3h0m2 0h0m-9 6h0m-1 0h0m-3 2h0m0-1h0m-1-1h0m-1 2h0m0-1h0m-1 2h0m0-1h0m-1 3h0m0-1h0m-1 1h0m-1-1h0m-11 6h0m1 1h0m0-3h0m1 2h0m1 1h0m1-2h0m2-2h0m-7 6h0m-2-1h0m-3 3h0m-15 6h0m1 0h0m2-1h0m1 3h0m2-2h0m0-3h0m0 2h0m1 0h0m1-1h0m1-1h0m2 1h0m1-1h0m-12 6h0m-2 3h0m-1-2h0m-2 1h0m-2 0h0m0 3h0m-1 0h0m-1-1h0m-12 7h0m2 0h0m2-2h0m0 1h0m1-2h0m1-1h0m1 3h0m2-4h0m2 0h0m0 1h0m-10 6h0m0 1h0m-4-1h0m0 2h0m-3 1h0m-2 0h0m-14 7h0m2 0h0m4-1h0m3-1h0m1-1h0m2 0h0m1-1h0m-5 5h0m-4 1h0m-1-1h0m-2 1h0m-1 1h0m-3 2h0m0-3h0m0 4h0m-1 0h0m-2-1h0m0 1h0m-8 5h0m0-1h0m1 0h0m2-3h0m1 1h0m0-1h0m-4 6h0m-6 3h0m-1-1h0m-1 0h0m-1 2h0m-1-1h0m-2 2h0m-2 0h0m-12 6h0m2 0h0m2 0h0m1-1h0m1 0h0m3 0h0m0-1h0m2 0h0m1-1h0m2-2h0m2 0h0m-12 6h0m-2 0h0m-1 0h0m-1 2h0m0 1h0m-3 2h0m-3-2h0m-1 1h0m-1 1h0m-8 6h0m1 0h0m2-2h0m1-2h0m1 2h0m3-3h0m0 4h0m2-4h0m2 1h0m-18 8h0m-2 0h0m-1-1h0m0 3h0m-12 6h0m3-1h0m2 0h0m2 0h0m1-3h0m0 1h0m0 2h0m3-1h0m-13 3h0m-1 0h0m-1 1h0m-1 3h0m0-3h0m0 2h0m-2 0h0m0 1h0m-16 7h0m4-1h0m2 0h0m1-2h0m1 3h0m1-4h0m2-1h0m0 3h0m-5 3h0m-2 1h0m-2 0h0m-1 0h0m-1 0h0m0 4h0m-2 0h0m-1-2h0m0-1h0m-2 3h0m-1-2h0m-9 7h0m1 0h0m0 1h0m1-2h0m3-1h0m2-2h0m4 0h0m-12 7h0m-2-1h0m-1 1h0m-1 1h0m-6 3h0m-8 4h0m1 0h0m1 1h0m1-2h0m2 1h0m-5 4h0m-2 0h0m-2 0h0m0 2h0m-1 0h0m-3 0h0m-2 2h0m-1-2h0m-11 8h0m2-1h0m1 0h0m2-3h0m1 0h0m2-1h0m0 2h0m1-2h0m5 0h0m-16 7h0m0 2h0m-1-1h0m-3 1h0m0 1h0m-1-1h0m-1 2h0m-1-1h0m-1 0h0m-8 6h0m4-3h0m1-1h0m1 1h0m1-1h0m-5 6h0m-3 0h0m-3 2h0m-2-2h0m0 1h0m-3 2h0m-1 0h0m-18 8h0m5-1h0m3-1h0m0 2h0m1-1h0m1-1h0m1 0h0m1-2h0m3 1h0m1-2h0m2 1h0m-10 5h0m-3 1h0m0 2h0m-4-2h0m-2 3h0m-2 1h0m0-1h0m-2 0h0m-11 7h0m5-2h0m0 2h0m2-1h0m1-1h0m1-1h0m1-1h0m3 2h0m-10 3h0m-3 2h0m-1 1h0m-1-2h0m-6 4h0m-10 6h0m2-1h0m5-1h0m1-1h0m1-1h0m-9 5h0m-2 2h0m-3 0h0m-1 1h0m-1 1h0m0-3h0m-2 3h0m-8 6h0m1-1h0m1 0h0m2-2h0m1 2h0m1-1h0m4-2h0m141 4h0m-149 2h0m-3 0h0m-2 2h0m-2-2h0m0 3h0m-1-3h0m0 2h0m-1 1h0m-1 1h0m-1 0h0m-1-2h0m-1 2h0m-2 1h0m-14 6h0m7-2h0m3 0h0m2-3h0m1 2h0m2-1h0m156 4h0m7-5h0m1 4h0m2 0h0m2-2h0m0 9h0m-3-2h0m-1 0h0m-174 0h0m-1-3h0m-2 0h0m0 2h0m-2 2h0m0-2h0m-1-1h0m-2 3h0m0-1h0m-2 1h0m-8 7h0m4-5h0m0 2h0m4-2h0m171 4h0m2-3h0m5 0h0m7 4h0m3-1h0m4-3h0m4 3h0m3 3h0m-6 2h0m-9 0h0m-4 0h0m-5 2h0m-3 0h0m-3-4h0m-177 0h0m-1 0h0m-4-1h0m-1 3h0m0 2h0m-1-3h0m0-1h0m-2 2h0m-2 1h0m-2 0h0m-3 0h0m-7 6h0m2 1h0m1 0h0m1-4h0m2-1h0m0 2h0m0 1h0m1-2h0m1 2h0m1-3h0m1 1h0m188 3h0m2-3h0m10-1h0m3 4h0m4-2h0m1 3h0m11-1h0m2-1h0m1-2h0m0 3h0m0 5h0m-2-2h0m-1 3h0m-1 1h0m-1-5h0m-5 5h0m-4-5h0m-3 5h0m-6-5h0m-1 2h0m-2 0h0m0 1h0m-2 0h0m-12 2h0m-190-5h0m199 9h0m2 0h0m8 0h0m1-1h0m0 1h0m10-3h0m3 0h0m227 10h0m-239 1h0m-1-2h0m-6-1h0m-4-2h0m-2 1h0m0 4h0m-1-1h0m-10-4h0m-5 11h0m2-5h0m2 3h0m2-1h0m1-1h0m6 4h0m0-1h0m7 0h0m1-1h0m2 0h0m230 2h0m8-2h0m2-3h0m1 4h0m5 0h0m-2 2h0m-2 4h0m-1 0h0m-2 0h0m-4-3h0m-4 4h0m-8-3h0m-233-2h0m-1 1h0m-3 0h0m-6 2h0m227 8h0m3-5h0m2 3h0m6-3h0m8 5h0m2-4h0m1 0h0m7-1h0m12 4h0m4-1h0m4 1h0m194 7h0m-1 0h0m-2-1h0m-1 0h0m-3-1h0m0-1h0m-2 2h0m-1 0h0m-2-1h0m-180 0h0m-17 2h0m-1-2h0m-2 1h0m-2-3h0m0 2h0m-2-1h0m-3-2h0m-6 0h0m-10 1h0m-6 4h0m-1 0h0m-10-2h0m-13 7h0m1 1h0m5-3h0m4 1h0m14 1h0m0-1h0m5 2h0m1-4h0m8-1h0m2 5h0m7-2h0m3-1h0m6-2h0m0 1h0m4 4h0m2 0h0m2-2h0m5-2h0m1 0h0m6 2h0m1-1h0m160 3h0m2 0h0m1 0h0m5-2h0m0 1h0m2-2h0m2-2h0m0 1h0m1 0h0m11-1h0m5 3h0m0 1h0m1-4h0m-24 8h0m-4-1h0m0 2h0m-1-2h0m-1 1h0m-2 1h0m0-1h0m-1-2h0m0 2h0m-1 3h0m-1-2h0m-3 2h0m-150-1h0m-1-2h0m0-1h0m-1 3h0m-2 1h0m-4-4h0m-7 1h0m-2 0h0m-5-2h0m0 2h0m-6-1h0m-1 2h0m-2 2h0m-3-5h0m-1 3h0m-7 1h0m-2-4h0m-5 0h0m-17 2h0m-4 1h0m-2 1h0m-4-2h0m-3-1h0m7 10h0m5-3h0m6 1h0m7 2h0m6-5h0m2 2h0m3-1h0m10 0h0m7 4h0m2-4h0m9 0h0m3 4h0m4 0h0m7 0h0m140 0h0m2 0h0m1-1h0m1 0h0m2 1h0m0-3h0m1 1h0m0-2h0m47 4h0m0-5h0m1 5h0m0-5h0m1 4h0m4 6h0m0-3h0m-2-1h0m-1 1h0m-52 0h0m-2 0h0m-2 1h0m0-1h0m-3 1h0m-2 1h0m-4 0h0m-122 1h0m-1 0h0m-4-4h0m-34 2h0m-5 0h0m-3 2h0m-3-2h0m-2 2h0m-3-2h0m-6 3h0m-4-5h0m-11 5h0m-2-2h0m-1-2h0m11 6h0m3 0h0m3-1h0m7 4h0m5-2h0m9 2h0m2-3h0m1 0h0m0 2h0m2 0h0m15 1h0m3-4h0m5 3h0m2-1h0m2 0h0m5 3h0m1-1h0m3-3h0m1-1h0m1 2h0m110 2h0m1 0h0m1 0h0m0-1h0m1 0h0m1-2h0m0 2h0m1-1h0m1 0h0m0-2h0m1 1h0m4-1h0m66 2h0m1-2h0m1 2h0m4 0h0m0 2h0m1 2h0m0 3h0m-1-2h0m-1 0h0m-88 1h0m-1 1h0m-1-1h0m0 3h0m-2-2h0m-1 0h0m-1 1h0m0-1h0m0 2h0m-1-1h0m-92 0h0m-5-4h0m-5 5h0m0-4h0m-7 3h0m-2-2h0m-4 2h0m-12-1h0m-5-3h0m-5 3h0m-9-1h0m-8-1h0m-1 4h0m-17-1h0m0-4h0m1 6h0m2 2h0m4 2h0m1 0h0m2-4h0m1 0h0m17 5h0m13-2h0m6-2h0m9-1h0m4 3h0m10 1h0m91 1h0m1-2h0m5 0h0m0-1h0m2 0h0m3-2h0m98 0h0m3 2h0m1-1h0m2 4h0m0-4h0m250 2h0m2 1h0m-1 2h0m-6 5h0m-2-2h0m-242 1h0m-114-4h0m-6 0h0m0 5h0m-71-2h0m-5 2h0m-3 0h0m-1-1h0m-6-2h0m-4 2h0m0 1h0m-7-3h0m-5-1h0m-4 4h0m-9-3h0m-2 1h0m-2-2h0m-7 4h0m-17-4h0m-5 7h0m10 1h0m10-2h0m5 1h0m6 0h0m3-1h0m1 3h0m4-1h0m2-2h0m0 3h0m3-1h0m7 1h0m4-2h0m2 0h0m4-2h0m0 5h0m1-2h0m7 0h0m9 2h0m51-1h0m4 0h0m4-3h0m1-1h0m1 3h0m2-3h0m130 3h0m0 2h0m0-3h0m245 2h0m2-4h0m7 3h0m-10 8h0m-234 0h0m-3-1h0m-2-2h0m-1 1h0m0-3h0m-1 1h0m-1-1h0m-2 0h0m-140 0h0m-1 1h0m-6 2h0m-1 1h0m-5 1h0m-2 0h0m-38-5h0m-16 5h0m-1 0h0m-4-4h0m-9-1h0m-1 5h0m-11-1h0m-4-1h0m-4-2h0m0 3h0m-3-3h0m-3 2h0m-12-1h0m-1 1h0m-1 1h0m-4-3h0m2 6h0m21 1h0m9-2h0m4 5h0m0-5h0m8 0h0m4 3h0m1-2h0m3 3h0m21 1h0m1-1h0m1-3h0m0 3h0m1-4h0m1 0h0m2 3h0m25 2h0m5-2h0m1 1h0m1-2h0m3-1h0m2 0h0m1-1h0m155 1h0m1 0h0m245 4h0m11 6h0m-15-4h0m-233 0h0m-3 2h0m-2-3h0m-174 1h0m0-1h0m-1 2h0m0-1h0m-3 1h0m-3 0h0m-1 3h0m-10-2h0m-10 0h0m-1-3h0m-2 1h0m-2 3h0m-2-2h0m-1 2h0m-3-3h0m0 4h0m-7-3h0m-7 0h0m0 2h0m-1-2h0m-1-2h0m-1 4h0m-6 0h0m-1 1h0m-13-1h0m-9-2h0m-8 2h0m6 4h0m24-1h0m1 0h0m1-1h0m5 3h0m9 1h0m10 1h0m5-5h0m9 0h0m2 1h0m3 4h0m1-1h0m2-1h0m0 2h0m2-5h0m1 2h0m1-2h0m0 3h0m1-2h0m1-1h0m187 2h0m2 1h0m1-2h0m248 1h0m0-1h0m7 4h0m1 5h0m-4 1h0m-6-5h0m-240 2h0m-3 2h0m-1-2h0m-1-1h0m-1-1h0m-193 5h0m-2-2h0m-1-2h0m-2 0h0m-5 4h0m-5-4h0m-2-1h0m-5 1h0m0 3h0m-5 1h0m0-5h0m0 2h0m-5-2h0m-4 5h0m-3-4h0m-3 1h0m-22-2h0m-2 3h0m-7-1h0m-3-2h0m2 8h0m2 1h0m10 0h0m0-1h0m10 2h0m13-2h0m0 2h0m5-2h0m3 0h0m4-2h0m2 2h0m4 1h0m3 0h0m11 1h0m5-3h0m200-1h0m1 3h0m0-1h0m1 3h0m0-2h0m1 1h0m248-1h0m3-3h0m-5 6h0m-1 3h0m-1 1h0m-239 1h0m-1-1h0m-2 0h0m-1-3h0m0 1h0m-211 0h0m-13 2h0m-2-2h0m-1 0h0m-7 3h0m-6 0h0m-1-2h0m-4-1h0m-7 1h0m-11-3h0m-7 3h0m-2 2h0m-1-1h0m-3-4h0m11 10h0m1 0h0m11-2h0m13 3h0m5-3h0m7-1h0m8 1h0m224 3h0m1-3h0m0 3h0m1-1h0m1 1h0m1 0h0m234-4h0m4 2h0m0 2h0m0-1h0m3-3h0m11 8h0m-8 1h0m-1-2h0m-240 0h0m-1 2h0m0-1h0m-3-1h0m-233 0h0m-7-1h0m-4 0h0m-2 3h0m-11 0h0m-1-1h0m-7 2h0m-3 0h0m-2-1h0m-4-1h0m-1-1h0m12 5h0m1-1h0m4 5h0m12-2h0m4-3h0m1 5h0m3-1h0m242-4h0m2 2h0m0 1h0m2 1h0m248 3h0m-1 2h0m-5-3h0m-2 4h0m-8-1h0m-3-3h0m-224 4h0m-1-1h0m-1 1h0m-3-3h0m-2 0h0m-256 2h0m-6 1h0m-1-2h0m-2-2h0m-1 3h0m-7-2h0m0 2h0m2 5h0m9 0h0m2 0h0m263-2h0m2 0h0m0 1h0m1-1h0m2 2h0m0 3h0m231-2h0m14-2h0m5 10h0m-244-1h0m-2-2h0m0 2h0m-1-2h0m-1-1h0m0-1h0m1 7h0m1 2h0m0-3h0m3 3h0m0 1h0m227 1h0m4 0h0m9-1h0m11 7h0m-8-5h0m-1 0h0m-236 5h0m-1-1h0m-4-2h0m6 7h0m0-1h0m1 2h0m2-2h0m241 1h0m1-1h0m-15 9h0m-223-3h0m-1 2h0m-1-1h0m-2-3h0m0 2h0m-3-2h0m-666 10h0m671-2h0m2 2h0m2 0h0m1-4h0m2 5h0m1 4h0m-2-2h0m0 2h0m-1-3h0m-647 5h0m-17-5h0m-7 11h0m674-3h0m2-2h0m1 3h0m1-2h0m1 4h0m0-2h0m3 8h0m-1-1h0m-1-3h0m-1 0h0m-674 1h0m-3 1h0m-11 1h0m-2-3h0m13 5h0m15 1h0m663 2h0m3 1h0m0-3h0m1 2h0m4 8h0m-447-1h0m0-4h0m-1 2h0m-1 1h0m-3 0h0m-3 2h0m-7 5h0m1-1h0m3-1h0m3 0h0m1 0h0m1-1h0m454 1h0m3-2h0m0 2h0m2 1h0m2 5h0m0 3h0m-3-5h0m-143 5h0m-1 0h0m-3-1h0m-323-2h0m-1 0h0m-2 0h0m0-1h0m0 3h0m-2-2h0m-1 0h0m-3 3h0m-1 0h0m-1 0h0m-1 0h0m-8 5h0m3 0h0m1 0h0m2-1h0m1-1h0m3-2h0m4 0h0m335 1h0m1-1h0m3 3h0m141-3h0m0 2h0m1 0h0m2 2h0m3 2h0m-1 2h0m0 1h0m-1-2h0m-1-1h0m-140 5h0m-1-2h0m-4 2h0m-1-1h0m-3-3h0m-1 1h0m-314 3h0m-33-5h0m-1 2h0m-1-2h0m-2 1h0m-1 1h0m-1 1h0m-3 2h0m-2-1h0m-8 6h0m1-2h0m2 1h0m0-2h0m2 1h0m4-2h0m33 5h0m2 0h0m1-2h0m1 0h0m1-1h0m1-2h0m1 2h0m3 0h0m3-2h0m1 1h0m1 2h0m0-1h0m3 1h0m319 2h0m1-1h0m0-1h0m1 2h0m139-2h0m0-1h0m2 0h0m1 3h0m2-2h0m3 6h0m0 2h0m-3-4h0m-2 1h0m-2 0h0m-144 3h0m-2-5h0m-2 2h0m-312 3h0m-2-5h0m-2 0h0m0 4h0m-14-4h0m-3 3h0m-1-3h0m-3 0h0m0 2h0m-3 1h0m-1 0h0m-1 1h0m-2 0h0m-3 1h0m-29-2h0m-3-3h0m-1 4h0m-1-1h0m-1 0h0m-2-1h0m-2 2h0m-11 5h0m0-1h0m0 3h0m2-1h0m2-2h0m1-1h0m4-1h0m0 1h0m1-1h0m4 0h0m23 4h0m3-3h0m2 0h0m2 0h0m0 1h0m3 1h0m36 1h0m1-2h0m2 3h0m267-1h0m1-2h0m0 3h0m46-4h0m6-1h0m143 1h0m4 2h0m1-1h0m0 2h0m2 1h0m1 2h0m-2 1h0m-139 3h0m-4-5h0m-53 4h0m-7 0h0m0 1h0m-6 0h0m-3-2h0m-3-1h0m-5 2h0m-247-1h0m-1-2h0m-1-1h0m0 2h0m-1 0h0m-52-2h0m-4 4h0m-1 0h0m0-4h0m0 2h0m-1 0h0m-28-2h0m-1 2h0m-1 0h0m0-1h0m-2 2h0m-1 0h0m-2 2h0m0-3h0m-2 2h0m0 1h0m-1 0h0m-10 6h0m1-1h0m1-1h0m2 1h0m1-4h0m0 2h0m3-2h0m3 1h0m37 2h0m1-2h0m57-1h0m2 2h0m1 3h0m237-1h0m1-1h0m0 2h0m0-1h0m1 1h0m4-1h0m2-1h0m10 0h0m7 0h0m5-1h0m1-1h0m0 2h0m5 0h0m1-2h0m2 2h0m46-1h0m1-1h0m4 1h0m143 1h0m2 0h0m1-2h0m0 1h0m1 2h0m2 0h0m2 7h0m-1-2h0m-1-3h0m0 1h0m0 3h0m0-1h0m-3-2h0m-192 0h0m0-1h0m-8 0h0m-1 0h0m-1 5h0m-4-4h0m-1-1h0m0 4h0m-2-4h0m-2 0h0m-6 1h0m0-1h0m-1 3h0m-6-2h0m-2-1h0m-5 4h0m-3-1h0m-3-2h0m-232 3h0m-1-3h0m-1 3h0m0-1h0m-58 2h0m0-4h0m-1 3h0m-1 1h0m0-5h0m-1 1h0m-49 0h0m-4 0h0m0-1h0m-1 4h0m-1-1h0m-2-1h0m-15 9h0m8-1h0m0-4h0m2 0h0m2 1h0m1-1h0m63 3h0m57-3h0m2 1h0m0 3h0m1-2h0m209 2h0m7 1h0m1 0h0m3 0h0m0-4h0m9 3h0m3-2h0m0 1h0m3-2h0m1 1h0m3 1h0m6 0h0m2 2h0m1 0h0m3 0h0m7 0h0m1-3h0m2 2h0m1-1h0m8-1h0m1 1h0m4-1h0m2 2h0m3 0h0m1 0h0m1 1h0m190-5h0m0 1h0m4 2h0m1 1h0m5 7h0m-2-2h0m0 2h0m-1-1h0m0-1h0m-195 0h0m-9-1h0m-8 3h0m-3-5h0m-2 1h0m0 4h0m-4-5h0m0 5h0m-2-2h0m0 2h0m-3-2h0m-3 0h0m-4 0h0m-1-3h0m-5 4h0m-6-1h0m-7 2h0m-3-2h0m-5-1h0m-1-1h0m-3 4h0m-10-5h0m-201 5h0m-3-4h0m0 2h0m-2 0h0m0-3h0m-1 3h0m0-3h0m0 1h0m-56 3h0m-1-4h0m0 2h0m-1-1h0m0 1h0m-74-1h0m-3-1h0m-1 1h0m-1 1h0m0 2h0m-2-2h0m-1 0h0m0 3h0m-2-2h0m-17 7h0m2 0h0m3 1h0m0-1h0m2 0h0m1-1h0m3-1h0m6 0h0m84-2h0m0 2h0m1 2h0m0-2h0m1-1h0m51 4h0m5 0h0m3-5h0m1 5h0m1-3h0m0 3h0m206-1h0m0-4h0m2 1h0m5-1h0m1 4h0m0 1h0m4-3h0m0-1h0m1 2h0m5-2h0m2 1h0m2 3h0m1-3h0m1 1h0m6 2h0m7-3h0m4 2h0m3-2h0m10 3h0m7-4h0m3 1h0m1 2h0m3 1h0m2 0h0m4-4h0m1 1h0m198 1h0m2 0h0m7 8h0m-2 0h0m-2-1h0m0-3h0m0 4h0m-1-4h0m-4-1h0m-192 4h0m-1-4h0m-2 3h0m-4 2h0m-1-1h0m0-1h0m-2-3h0m-3 1h0m-2 0h0m-4 4h0m-2-1h0m-2 1h0m-2-5h0m-5 1h0m-1 2h0m-2-1h0m-4 1h0m-4-1h0m-4 2h0m-10 0h0m-3-2h0m-4-2h0m-3 5h0m-1-4h0m0-1h0m-7 4h0m-1-3h0m-3 2h0m-1 2h0m-210-5h0m-2 1h0m-2-1h0m-3 1h0m0-1h0m-1 0h0m-3 0h0m-2 0h0m-1 3h0m0-1h0m-1 1h0m-1-1h0m-2 0h0m0-2h0m0 3h0m-1 0h0m-3-1h0m0 2h0m-2-2h0m-1 3h0m-1-1h0m-9 1h0m-22-1h0m0 1h0m-1-3h0m0 2h0m-3-4h0m-95 0h0m-4 0h0m-2 0h0m-6 1h0m-1 0h0m-1 1h0m0-1h0m-1 3h0m-3-3h0m0 3h0m0 1h0m-1-2h0m0 2h0m1 2h0m2-1h0m0 4h0m1-3h0m1 2h0m112 1h0m3-3h0m1 4h0m3-3h0m0 1h0m1 1h0m1-1h0m2 0h0m2 0h0m1-1h0m1 0h0m0 1h0m2-2h0m3 1h0m1-1h0m1-1h0m3 3h0m6-2h0m1-1h0m237 1h0m5 0h0m13 0h0m1 1h0m5-2h0m2 5h0m4-5h0m2 3h0m0-1h0m0-1h0m1 3h0m0-1h0m1-2h0m1 1h0m2 2h0m3-1h0m3 1h0m4-3h0m6-1h0m1 5h0m5-5h0m1 0h0m2 1h0m13 0h0m4 1h0m1 2h0m1 0h0m194-1h0m1-1h0m1 1h0m0-3h0m0 1h0m1 4h0m3 2h0m-1 2h0m0 1h0m-202-1h0m-6 2h0m-1-5h0m0 3h0m-2-1h0m-1 1h0m-1 1h0m-1-1h0m-3 0h0m-1-3h0m-2 1h0m-3 0h0m0 3h0m-3-4h0m-3 1h0m0 2h0m0-1h0m-3 2h0m-1-3h0m-1 0h0m-5 0h0m-1-1h0m-4 5h0m-1-2h0m-3-3h0m-1 2h0m-11 1h0m-2-3h0m-1 1h0m-8 1h0m-6 0h0m-380 3h0m0-5h0m0 4h0m-1 0h0m0-3h0m-2 2h0m5 3h0m1 4h0m386-1h0m3-2h0m8 2h0m2-2h0m1 0h0m3 1h0m1 0h0m0-1h0m4 0h0m5 3h0m2-2h0m1 1h0m1 1h0m0-1h0m7 1h0m1 0h0m4 1h0m2-3h0m0 3h0m4-2h0m5-1h0m9-1h0m4-1h0m6 2h0m1 2h0m2 0h0m3-1h0m191-2h0m2 1h0m2 2h0m1-1h0m0 4h0m-1 0h0m0 1h0m-1 2h0m-1-1h0m-1 1h0m-1 1h0m-197 0h0m-2-4h0m0 3h0m-4 1h0m-2 0h0m-6-5h0m-5 1h0m-4 4h0m-12-5h0m-10 1h0m-2 2h0m-1 1h0m-1-3h0m0 1h0m0 2h0m-2-1h0m-1 0h0m0 2h0m0-1h0m-1 0h0m-5 0h0m-7 0h0m-4-2h0m-4 1h0m-381 2h0m-1-3h0m-1 3h0m0-3h0m-1-1h0m0 3h0m0 1h0m2 5h0m3 1h0m0-5h0m1 3h0m381 0h0m1 0h0m3 1h0m7-4h0m6 0h0m2 3h0m5-3h0m3 4h0m4 0h0m1-4h0m4 0h0m2 1h0m2 3h0m0 1h0m2-1h0m3-2h0m2 2h0m5-3h0m2 2h0m1-2h0m4-1h0m4 3h0m1 0h0m1-2h0m0 2h0m6-3h0m0 2h0m3-2h0m1 5h0m4-2h0m1-1h0m182 1h0m0 2h0m2 0h0m1-4h0m0 3h0m-4 2h0m-2 2h0m-3-2h0m-1 5h0m-170-1h0m-4-1h0m-5-1h0m-6-1h0m-4 4h0m-9-3h0m0-1h0m-2 1h0m-3 3h0m-5-1h0m-3 1h0m-8-2h0m-1 1h0m-1-2h0m-10 2h0m0 1h0m-1 0h0m-7-1h0m-2-3h0m0 1h0m-1-1h0m-1 2h0m-3 1h0m-2-3h0m-1 3h0m-2-2h0m-380 3h0m-1-3h0m-2 3h0m-1-5h0m0 2h0m4 7h0m1-2h0m383-1h0m3 4h0m0 1h0m0-5h0m2 1h0m0 3h0m1-1h0m2-1h0m2-1h0m1 2h0m1-1h0m2 3h0m1-4h0m2 1h0m3 3h0m2-5h0m5 0h0m6 1h0m2 0h0m0 2h0m8-3h0m1 3h0m6 2h0m2-2h0m7 2h0m8-5h0m4 0h0m3 2h0m2 3h0m1 0h0m158 0h0m3-3h0m0 2h0m1-4h0m0 2h0m3 0h0m2-1h0m-6 5h0m-2 0h0m-1 4h0m-1-3h0m-1-1h0m0 1h0m-1 1h0m-148-1h0m-4 1h0m-9 2h0m-4-1h0m-1-2h0m0 2h0m-3-3h0m-1 1h0m-3 3h0m-1 1h0m-1-5h0m-2 5h0m-5 0h0m-1-4h0m-15-1h0m-1 1h0m-2 1h0m0-2h0m-1 1h0m-4 3h0m0-1h0m-1-3h0m-1 3h0m-4-1h0m-2 2h0m-1-3h0m-3 2h0m-1-1h0m-1-1h0m-1 2h0m-390-2h0m0-1h0m0 5h0m-1-3h0m0 2h0m-1-3h0m0 1h0m2 4h0m2 0h0m1 1h0m1 1h0m1 3h0m388-3h0m0-1h0m3 0h0m8 0h0m1 0h0m3 1h0m3 2h0m4-4h0m1 1h0m2 1h0m4 3h0m2 0h0m3-5h0m1 1h0m6 3h0m5-4h0m0 3h0m4-3h0m2 5h0m2-1h0m1-2h0m0 3h0m5 0h0m5-1h0m2-3h0m1-1h0m1 1h0m6 2h0m134 2h0m0-4h0m1-1h0m0 2h0m4-2h0m-6 10h0m-1-4h0m0 1h0m-2 3h0m0-2h0m-126 1h0m-4-3h0m0 1h0m-2-1h0m-2 2h0m-3-2h0m0 3h0m-2-1h0m-1 1h0m-4 2h0m-6-3h0m-3 3h0m-6-2h0m-2-3h0m-1 1h0m0 2h0m-1-3h0m-3 3h0m-16 2h0m-2-5h0m-2 0h0m-14 3h0m-6 2h0m-3-2h0m-383-2h0m-2-1h0m4 8h0m2 0h0m3 1h0m233 2h0m144-5h0m6 4h0m3-3h0m0 3h0m1-3h0m0 4h0m2-4h0m2 1h0m8 1h0m3-2h0m1-1h0m1 3h0m0 1h0m4 1h0m2-3h0m6-1h0m1 3h0m2-2h0m1-1h0m5-1h0m5 2h0m2 3h0m4-1h0m2-2h0m7 0h0m1-2h0m13 3h0m2-1h0m127-2h0m0 2h0m1 2h0m1-4h0m5 10h0m-1-1h0m0 2h0m-2-1h0m-2-4h0m-124 5h0m-1-2h0m-1 2h0m-8-2h0m-2-2h0m-2 4h0m-3 0h0m-7-1h0m-4 1h0m-2-5h0m-3 2h0m-4-1h0m-1 4h0m-7-5h0m0 4h0m-2-1h0m-4-3h0m-1 4h0m-11-3h0m-2 1h0m-1 2h0m-5 1h0m-13-2h0m-1-3h0m-1 0h0m-140 5h0m-6-3h0m-1 3h0m-4 0h0m-2 0h0m-4-1h0m-14 1h0m-207-1h0m-1-1h0m0 1h0m-1-4h0m-1 2h0m-1-2h0m6 6h0m1 1h0m0 4h0m202 0h0m6-2h0m1-1h0m2 2h0m1-1h0m3 1h0m13-2h0m6-2h0m148 2h0m2 0h0m2 0h0m0 2h0m5-1h0m0 1h0m3-2h0m4-2h0m2 0h0m2 0h0m10 0h0m0 3h0m1 1h0m1-1h0m7-1h0m0 2h0m11 0h0m5-3h0m3-1h0m0 1h0m1-1h0m2 0h0m3 5h0m5-1h0m1-3h0m4 3h0m1-2h0m2 2h0m2 1h0m4-3h0m123-2h0m1 3h0m0-3h0m1 3h0m0-2h0m2 0h0m1-1h0m5 11h0m-2-1h0m-1-1h0m-1-3h0m0 4h0m-1-4h0m0 2h0m-127-1h0m-2 2h0m-5 1h0m-1 1h0m0-2h0m0-1h0m-1 3h0m-1-3h0m-1 1h0m-1-2h0m-1-1h0m-1 1h0m-2 3h0m-3-3h0m-1 4h0m-2-5h0m-1 2h0m-1-1h0m-7 3h0m-1-4h0m-3 2h0m0-2h0m-4 4h0m0 1h0m-2-2h0m-2-3h0m-3 5h0m-2-2h0m-4 1h0m-1 0h0m-2-4h0m-2 2h0m0 3h0m-1-2h0m-3-1h0m-1 3h0m-4 0h0m-3 0h0m-3-4h0m-1-1h0m-4 3h0m-3-2h0m-145 0h0m-16 3h0m-4-1h0m-2 1h0m-15-4h0m-1 2h0m-8 3h0m-3-3h0m-7 2h0m-178-1h0m-2 2h0m-1-3h0m0 3h0m-1-2h0m-2-3h0m-2 0h0m5 6h0m2 2h0m1-1h0m0-1h0m0 4h0m3 1h0m181-2h0m6-2h0m12 3h0m1 1h0m1-1h0m1-1h0m1 0h0m174-3h0m2 4h0m4 0h0m4 1h0m1-1h0m1-3h0m0 3h0m2-2h0m1 1h0m1 2h0m2-5h0m9 1h0m1-1h0m1 2h0m3-1h0m3 2h0m4-3h0m2 0h0m1 2h0m1-1h0m9 0h0m1 2h0m0-3h0m2 2h0m1 0h0m14-1h0m142 2h0m1 2h0m4 6h0m-2-3h0m-1-1h0m-3 1h0m-168-1h0m-8 2h0m0 1h0m-5-1h0m-2-1h0m-2-2h0m-9 5h0m-1-4h0m-1 4h0m-2-5h0m-150 3h0m-7 0h0m-10-3h0m-4 2h0m-5 1h0m-2-3h0m-10 3h0m-201 0h0m0 1h0m-1-2h0m-1 1h0m3 4h0m2 0h0m0-1h0m1 4h0m0 1h0m2 0h0m0-3h0m174-1h0m7-1h0m2 4h0m8-2h0m12 1h0m8 0h0m1-3h0m7 2h0m4-2h0m1 2h0m4-2h0m153 2h0m4-2h0m2 2h0m1-1h0m1 3h0m1-2h0m10 2h0m14-3h0m173 0h0m0 1h0m0 3h0m1-2h0m2 1h0m2 5h0m0 2h0m-1-1h0m-186-4h0m-1 0h0m-1 0h0m-7 0h0m0 2h0m-2 2h0m-4 1h0m-4-3h0m0-1h0m-1 1h0m-2-2h0m-172 3h0m-1 0h0m-6 0h0m0 2h0m-6-5h0m-3 4h0m-3 1h0m-1-3h0m-2-2h0m-1 4h0m-184 0h0m-2-3h0m-2 3h0m-1-4h0m0 3h0m3 4h0m1 3h0m1-3h0m0 1h0m1 1h0m0 2h0m1-1h0m184-3h0m198 2h0m0-1h0m4 1h0m5-3h0m196 3h0m1 2h0m0-4h0m1 0h0m1 4h0m-1 3h0m-1 0h0m0-1h0m-1 0h0m-1 0h0m-2 2h0m0-2h0m0 1h0m-1 2h0m-2-1h0m-1 1h0m-2 1h0m-391-4h0m-181 3h0m-2 1h0m-2-1h0m0-4h0m0 1h0m-1-1h0m0 2h0m-1-2h0m3 10h0m1-3h0m2 0h0m0 1h0m564 2h0m2-3h0m5-1h0m2 1h0m-11 5h0m0 4h0m-4-1h0m0-1h0m-4 2h0m0 1h0m-2 0h0m-545-2h0m-1 1h0m-2-3h0m-1 3h0m-2-3h0m4 6h0m2 3h0m1 1h0m3-1h0m534 1h0m1-1h0m1-1h0m0 1h0m2-3h0m1-1h0m2 3h0m3-2h0m0-1h0m-10 6h0m-2 0h0m0 3h0m-2 0h0m-1-1h0m-1-1h0m-1 1h0m-2 2h0m-523-4h0m-1 4h0m-2 0h0m0-1h0m-1-2h0m2 5h0m4 1h0m0 3h0m3-1h0m1 2h0m503 0h0m3-1h0m2 0h0m3-2h0m1 2h0m1-4h0m1 1h0m-8 5h0m-1 0h0m-5 4h0m0 1h0m-1-3h0m-1 1h0m-2 2h0m-2-1h0m-495 1h0m-1-3h0m0-1h0m-1-1h0m-2 0h0m7 8h0m0-1h0m3 4h0m479 0h0m1 0h0m1-1h0m1 0h0m2-2h0m2-1h0m1-1h0m0 1h0m1 0h0m1-1h0m1 1h0m0-1h0m-12 6h0m-1 1h0m-1 1h0m-2-1h0m-1 2h0m-4 2h0m-483 0h0m-9 5h0m1 0h0m7-4h0m2 1h0m5 2h0m0 1h0m1-1h0m1 1h0m467 0h0m0 1h0m3-3h0m1 1h0m2-2h0m0 1h0m1-1h0m2-1h0m-9 7h0m-3 0h0m0-1h0m0 2h0m-1-1h0m-2-1h0m-1 0h0m-1 4h0m-2 0h0m-3 1h0m-464-2h0m-7-2h0m-1 2h0m-6 0h0m-1 0h0m-3 8h0m2-3h0m4 2h0m1-1h0m4-1h0m14 2h0m7 0h0m6-1h0m1 0h0m1 2h0m429 0h0m5-1h0m3-2h0m0 2h0m1-4h0m0 3h0m0-1h0m3 0h0m1-2h0m1 2h0m0-2h0m2 0h0m-12 6h0m-3 2h0m-2 0h0m-1 3h0m-2-2h0m-1 2h0m-3-1h0m-420-1h0m-3-1h0m-2-2h0m-2 1h0m-1 2h0m-1 2h0m-3-5h0m-4 5h0m-1-5h0m0 1h0m-3 4h0m-3-4h0m-1-1h0m-16 4h0m-1-4h0m-3 3h0m-3 1h0m-4-2h0m0 2h0m0 1h0m-9-1h0m-1 1h0m-1 2h0m9 0h0m5-1h0m3 5h0m9-1h0m2 1h0m4 0h0m5-5h0m3 0h0m1 0h0m4 2h0m5 0h0m3 1h0m3-2h0m0 4h0m3-2h0m8-2h0m407 4h0m2 0h0m0-4h0m1 2h0m1 0h0m2-1h0m2-1h0m-11 7h0m-5 2h0m0-2h0m0-1h0m-1 4h0m-1 0h0m-389-2h0m-1 2h0m-17-5h0m-7 5h0m-1-5h0m-3 0h0m-1 4h0m-8 0h0m-1 0h0m0 1h0m-1-3h0m-6 2h0m-1 0h0m0 1h0m-1-5h0m-1 2h0m-4 1h0m-3-1h0m-8-1h0m0-1h0m-5 4h0m11 2h0m1 1h0m2 2h0m1 2h0m1-3h0m5 3h0m11-1h0m2-1h0m3 1h0m2 0h0m1-1h0m7-3h0m5 5h0m1-5h0m10 1h0m2 0h0m4-1h0m0 5h0m5-1h0m0-2h0m2 0h0m370 3h0m1-1h0m2 0h0m4-2h0m1-1h0m0 2h0m0-3h0m2 1h0m1 0h0m-13 7h0m-2 2h0m-1-2h0m-2 1h0m-361 0h0m0-3h0m-2 1h0m-8 2h0m0 2h0m-2-5h0m-4 2h0m-3 2h0m-1 0h0m-1-2h0m-3 3h0m-17 0h0m-6-2h0m-3-3h0m-13 3h0m-4 0h0m0 8h0m3-5h0m2 1h0m0 4h0m2-5h0m0 3h0m0 2h0m1-1h0m7-4h0m5 2h0m2 1h0m4-3h0m6 0h0m1 5h0m8-3h0m4 1h0m2-3h0m2 1h0m3 3h0m4-1h0m13-3h0m1 5h0m3-4h0m2 4h0m341 0h0m4-4h0m1 2h0m1 0h0m1-2h0m4 0h0m0 1h0m1-2h0m-10 8h0m-5-1h0m0 2h0m-3-1h0m0-1h0m-1 2h0m-3 1h0m-328-2h0m0-1h0m-2 4h0m-2-4h0m-1 3h0m-1 0h0m-1-3h0m0 2h0m-3-2h0m0-1h0m-2 0h0m-5 5h0m-5-4h0m-4 2h0m-1-2h0m-4 3h0m-11-1h0m-7-1h0m-1 2h0m-7-2h0m-5 3h0m-3-3h0m-1 2h0m-1-3h0m-3-1h0m-4 4h0m-1-2h0m-2-1h0m-1 1h0m-1 2h0m8 4h0m6 2h0m2-2h0m1-1h0m1-1h0m2 4h0m10 0h0m2-2h0m4 1h0m1 2h0m3-1h0m16-1h0m4 0h0m2-2h0m6 4h0m0-5h0m1 5h0m1 0h0m6 0h0m6-1h0m2-3h0m310 3h0m2 0h0m3 0h0m4-1h0m1-2h0m1 1h0m1-2h0m0 1h0m0 2h0m3-3h0m-12 6h0m-3 3h0m-1-1h0m-2 2h0m-1 1h0m-2-1h0m-1 0h0m-296 0h0m0-1h0m-3 0h0m-5 0h0m-4-2h0m-2 4h0m-5-3h0m-7 0h0m-2-2h0m-12 0h0m-25 5h0m-1-4h0m-1-1h0m-4 1h0m-1 2h0m-1 0h0m-6 0h0m-2-1h0m14 7h0m2 0h0m1-1h0m0 1h0m2-2h0m0 3h0m2-2h0m9 1h0m2 1h0m0 1h0m3-4h0m3 4h0m5-1h0m2-4h0m10 0h0m7 0h0m2 5h0m2-2h0m15-3h0m286 3h0m2 0h0m1-1h0m1 0h0m5-1h0m0-1h0m2 0h0m2 0h0m-14 6h0m-1 0h0m-1 1h0m-1 0h0m0 2h0m-3 1h0m-1 0h0m-277-4h0m-6 4h0m-5 1h0m-3-2h0m-3 2h0m-3-1h0m-15-4h0m-6 4h0m-1-1h0m-5 1h0m0-3h0m-2 1h0m-1-1h0m-5 0h0m-6 2h0m-2 0h0m-5-2h0m-1-1h0m-2 11h0m4-5h0m6 1h0m0 2h0m9 2h0m10-3h0m4 2h0m8-1h0m6 1h0m0-1h0m17 0h0m7 0h0m0 2h0m4-1h0m4-3h0m0 2h0m3-3h0m255 5h0m1-1h0m1 0h0m4-2h0m-7 6h0m-1-2h0m0 3h0m-1 1h0m-3-2h0m-1 1h0m-1 0h0m-2 0h0m-1 2h0m-238-4h0m-9 2h0m-1-2h0m-1 2h0m0-1h0m-1-2h0m0 4h0m-4-1h0m-3 0h0m-5-3h0m-3 2h0m-10-2h0m-2 1h0m-1 3h0m-20-4h0m-8 4h0m-1-2h0m-1 3h0m-1-3h0m-1 2h0m-8-2h0m-2 1h0m-3 2h0m-2-3h0m3 5h0m2-1h0m11 1h0m9 3h0m1-1h0m3 2h0m8-4h0m0-1h0m4 3h0m1 2h0m2-5h0m1 5h0m0-5h0m1 5h0m11-4h0m3 1h0m6 0h0m3 2h0m1 0h0m6-2h0m2 2h0m2-3h0m7 4h0m2-5h0m2 3h0m9 1h0m217 1h0m1-1h0m3-2h0m3-1h0m-9 5h0m-1 0h0m-3 1h0m0 4h0m-1-1h0m-1-1h0m-1 1h0m0-1h0m-1 1h0m-2 1h0m-211-2h0m-8-3h0m-6 3h0m-9-1h0m-11 1h0m-11 1h0m-3-3h0m-2 1h0m-11 0h0m-3 0h0m0 3h0m-2 0h0m-3-3h0m-2 0h0m-9-1h0m-3-1h0m-1 3h0m3 4h0m2 4h0m3-4h0m1 3h0m3 1h0m2-4h0m7-1h0m14 5h0m3-5h0m3 0h0m16 0h0m11 5h0m1-3h0m0-2h0m2 3h0m2-2h0m7 0h0m206 4h0m0-1h0m4-3h0m0 2h0m1-1h0m0 1h0m6-3h0m1 1h0m-11 6h0m-7 2h0m-4 2h0m-2 0h0m-201-4h0m-4 4h0m-1-1h0m-1-4h0m-1 0h0m-3 1h0m-4 2h0m-21 1h0m-3 0h0m-1-1h0m-2-2h0m-4 3h0m-2-3h0m-5-1h0m-4 3h0m-7-3h0m0 5h0m-1-1h0m-2 1h0m3 2h0m1 0h0m12-1h0m13 1h0m3 2h0m7 1h0m2 0h0m3-1h0m3-1h0m1 0h0m211 2h0m1 1h0m2-2h0m0 1h0m2 1h0m1-5h0m1 1h0m0-1h0m4 0h0m-11 8h0m-1-1h0m-1-1h0m-1 0h0m-1 1h0m-1 1h0m-3 2h0m-2 1h0m-202-5h0m-7 2h0m-8 3h0m-13-3h0m-3 3h0m-9-1h0m-1 0h0m3 4h0m7-2h0m2 0h0m3 0h0m6 1h0m8 3h0m1 0h0m2-3h0m198 4h0m1-1h0m2 1h0m3-3h0m2-2h0m1 3h0m6-3h0m-10 6h0m-3 1h0m-2-1h0m-1 2h0m-2 0h0m-2 0h0m0 1h0m-3 1h0m-2 1h0m-198-2h0m-2 0h0m-5-2h0m-2 0h0m-3-1h0m0 2h0m-1 2h0m206 7h0m1-2h0m1-1h0m1-1h0m0 1h0m2-2h0m1 1h0m1-1h0m1 0h0m-13 8h0m-1 1h0m-1 2h0m-2-3h0m-1 1h0m-16 8h0m4-1h0m2 1h0m3-4h0m4 0h0m3-1h0m-15 8h0m-2-1h0m-1 0h0m-2 2h0m-18 8h0m6-2h0m2 2h0m1-2h0m0 1h0m1-2h0m2 1h0m0-2h0m6-1h0m-12 7h0m-4-1h0m0 1h0m-1 0h0m-3-1h0m-1 2h0m0 2h0m-4 1h0m-12 6h0m4-1h0m3-1h0m0-1h0m1-2h0m1 0h0m1 0h0m6 0h0m-12 6h0m-2 0h0m-1 0h0m-1 2h0m-2 0h0m-4 2h0m-1 1h0m-2 0h0m-134 0h0m-6 5h0m1-1h0m2 0h0m1 2h0m1-3h0m1-2h0m1 2h0m2 2h0m0-1h0m1 1h0m0 1h0m1-2h0m1 0h0m119 2h0m3 0h0m1 0h0m1 0h0m1-2h0m1-1h0m1-2h0m5 0h0m-10 6h0m0 1h0m-6 1h0m-1-1h0m-1 2h0m-6 1h0m-2 1h0m-100 0h0m-4-1h0m-1-3h0m-1 2h0m-1-2h0m0-1h0m-10 1h0m-2 0h0m-1 0h0m-2 1h0m-2 0h0m-1 3h0m-9 6h0m1-1h0m0 1h0m1-3h0m1-1h0m0 2h0m1-2h0m2 1h0m1-1h0m24 0h0m4 3h0m3 0h0m89 1h0m1 0h0m3-2h0m0 2h0m6-4h0m1-1h0m1 0h0m-11 7h0m-1-1h0m-2 3h0m-2-3h0m0 3h0m-1 1h0m-1-1h0m-1 2h0m-1 0h0m-1-2h0m-2 2h0m-79-5h0m-38 0h0m-2 2h0m-3 1h0m0-1h0m-9 5h0m2 0h0m0 2h0m1-2h0m4-1h0m46 0h0m2 1h0m1 0h0m0 1h0m1 2h0m64 1h0m1 0h0m2 0h0m0-1h0m1-1h0m1 2h0m2-2h0m1 0h0m1-3h0m1 0h0m-7 8h0m-4-2h0m-2 3h0m-1-3h0m-1 3h0m-1 1h0m-1 1h0m-2-1h0m-50 1h0m0-1h0m-1-2h0m-2-2h0m-60 0h0m-2 3h0m-4-1h0m0 2h0m-4-1h0m-2 2h0m-4 6h0m1-2h0m2-1h0m1 0h0m3-1h0m1-1h0m70 1h0m2-1h0m2 2h0m2 3h0m40-1h0m3-1h0m1 0h0m2-3h0m4 0h0m-12 6h0m-2 0h0m0 1h0m-2 0h0m-1-1h0m-1 1h0m-1 1h0m-4 2h0m-1 1h0m-2 0h0m-22-4h0m0 4h0m-1-1h0m-2-2h0m0-1h0m0-1h0m-87 3h0m-1-1h0m-1 0h0m-2 1h0m-2 1h0m-1 1h0m-7 5h0m2-2h0m2-1h0m0 3h0m1-4h0m1 0h0m1 1h0m1-1h0m99 0h0m1 3h0m0 1h0m1 1h0m1 0h0m6 0h0m1-1h0m3-2h0m2 2h0m1 0h0m0-3h0m1-1h0m0 1h0m1-1h0m-6 6h0m-5 3h0m-1 0h0m-1-1h0m-1-2h0m-1 3h0m-1-3h0m-109 2h0m-1-1h0m-1 0h0m0-1h0m-3 2h0m0 2h0m-1-1h0m0 2h0m-2 0h0m-9 6h0m1-2h0m1 2h0m1-1h0m2-2h0m1-1h0m-9 7h0m-2 3h0m-1-1h0m-1 1h0m-1-1h0m-9 7h0m4-1h0m2-3h0m2 0h0m0 3h0m2-2h0m-9 4h0m-1 0h0m0 4h0m-2-3h0m0 2h0m0-1h0m-1 0h0m0 2h0m-3 0h0m-1 0h0m-8 6h0m2 0h0m1 1h0m2-4h0m1-1h0m1 2h0m0-1h0m-5 5h0m-1 1h0m-2 0h0m-2 0h0m-2 1h0m-1 2h0m0-1h0m-11 8h0m3-4h0m0 2h0m2-2h0m5-1h0m3 0h0"/><path stroke="#d8d8d8" stroke-width="2" stroke-linecap="square" d="M1228 285h0m679 11h0m-458-1h0m-534 0h0m6 10h0m714-2h0m279 6h0m-288-3h0m-3 5h0m-173-3h0m-210 1h0m378 5h0m116 6h0m-279 1h0m-595 0h0m-2 2h0m74 3h0m318 0h0m487-1h0m-152 6h0m-329 3h0m-2 0h0m-408-4h0m-12 9h0m624 2h0m287-1h0m1 3h0m-487 1h0m-432-1h0m708 16h0m-267 0h0m-2-4h0m-314 3h0m2 4h0m319 3h0m189 4h0m0 5h0m304 0h0m4 4h0m-267 0h0m-40 1h0m-497 1h0m496 4h0m2 2h0m13 2h0m1 1h0m2-2h0m3 0h0m1 1h0m1-2h0m-5 6h0m-2-2h0m0 2h0m-1 0h0m-5 1h0m-1 0h0m-3 2h0m-494-3h0m483 9h0m3-1h0m1-1h0m2 0h0m1-1h0m4-1h0m2-1h0m507 10h0m-196-2h0m-321-1h0m-5 2h0m-1-3h0m-2 3h0m-1 1h0m-154 0h0m141 7h0m6-4h0m1 1h0m1-2h0m1 0h0m2 0h0m2 1h0m535 6h0m-546-1h0m-2 1h0m-2 0h0m0-1h0m-1 1h0m0-1h0m-1 3h0m-2 2h0m-7 0h0m-120 1h0m112 5h0m4 0h0m2-4h0m3 1h0m1 0h0m1-2h0m1 3h0m366 5h0m-376-2h0m-4 4h0m0-2h0m-1 0h0m0 2h0m-4 0h0m-100-4h0m-314 1h0m402 10h0m3-1h0m1-1h0m2-1h0m2 0h0m0 2h0m2-4h0m0 3h0m389-2h0m202 2h0m-600 3h0m-3 0h0m-2 2h0m0 2h0m-2 0h0m0 1h0m-386 3h0m314 1h0m58 1h0m4 0h0m0-1h0m2 2h0m0-5h0m2 0h0m0 1h0m1 1h0m2-2h0m417 3h0m200-2h0m2 8h0m-630-2h0m-2 0h0m-3 1h0m-4 0h0m0 2h0m-1 1h0m-2 0h0m-353 3h0m242 0h0m3 1h0m101 1h0m4 0h0m1 0h0m0-1h0m5-2h0m2-1h0m645 6h0m-203 0h0m-453 0h0m-2 3h0m-2 1h0m-2-2h0m-1-1h0m0 2h0m-1 0h0m-1 0h0m0 2h0m-76-4h0m-24-1h0m-21 7h0m11-1h0m99 5h0m2-1h0m2 0h0m3-2h0m0-1h0m3-1h0m-13 8h0m-4 1h0m-1 1h0m0-1h0m-1 1h0m-112 0h0m101 7h0m3-3h0m1 3h0m1-4h0m2-1h0m1 1h0m-10 5h0m-3 2h0m-2 1h0m0-1h0m-1 3h0m-5 0h0m-272-1h0m262 7h0m3-1h0m3 1h0m0-1h0m1-1h0m1-2h0m1 0h0m1 0h0m524-1h0m207 5h0m-203 3h0m-538 1h0m-3-1h0m-1 3h0m-2-1h0m-11 7h0m1-1h0m1-1h0m2-2h0m1 2h0m2-2h0m1-1h0m0 2h0m1-2h0m-8 7h0m-2-1h0m-1 2h0m-17 9h0m4-3h0m790-1h0m-317 10h0m-481-3h0m-7 2h0m-8 7h0m0-1h0m1-1h0m0 1h0m2-3h0m0-1h0m1 4h0m480-4h0m31 6h0m-518 1h0m-1 0h0m0-1h0m-1 4h0m-1-4h0m0 2h0m-1-1h0m0 2h0m-1-2h0m0 3h0m-3 0h0m0-1h0m0 2h0m-2 0h0m-165 2h0m155 3h0m1 0h0m1 0h0m1-1h0m0 1h0m2-1h0m3 2h0m1-5h0m2 0h0m548 2h0m84 5h0m-84-1h0m-558 0h0m-1 1h0m-1 1h0m-2 0h0m-5 3h0m-3 0h0m-7 4h0m0 2h0m2 0h0m1 0h0m0-3h0m3-2h0m1 0h0m1 0h0m539 4h0m1 5h0m-549-3h0m-1 1h0m0-1h0m-4 2h0m0 2h0m-3 0h0m0-1h0m-1-1h0m-113 6h0m102 3h0m0-1h0m1 1h0m1-2h0m4 0h0m0 2h0m0-5h0m0 2h0m0 2h0m2-4h0m1 0h0m1 0h0m688 10h0m-79-2h0m-621 0h0m-2-1h0m-2 3h0m-1-1h0m-1 1h0m0 1h0m-1-1h0m-4 1h0m-1 0h0m-6 5h0m2 1h0m3-2h0m5-3h0m0 1h0m1-1h0m1 0h0m632 10h0m-467-3h0m-178-1h0m-1 0h0m-1 3h0m-2 0h0m0-3h0m-1 4h0m-1-2h0m-1 3h0m-1 0h0m-320 2h0m309 4h0m2-1h0m2 0h0m0-3h0m1 2h0m0-1h0m1-2h0m2 3h0m1-3h0m1 2h0m1-2h0m661 7h0m-33 3h0m-639-3h0m0-1h0m-2 2h0m-1-2h0m-2 4h0m-1 0h0m-2 1h0m-293-4h0m15 8h0m272-1h0m0-1h0m1 2h0m183-1h0m1-1h0m401 1h0m109 8h0m-519-3h0m-5 1h0m-176-1h0m0-1h0m-2 1h0m-1 2h0m0-3h0m-2 5h0m-1-1h0m-1 1h0m-7-1h0m-17-4h0m-18 8h0m6 0h0m24 2h0m0-3h0m2 3h0m0-1h0m3-2h0m1 2h0m0-2h0m1 2h0m3-2h0m995 3h0m-203 4h0m-109-2h0m-518 4h0m-177-4h0m-2 2h0m0 1h0m-1-3h0m-3 2h0m0 2h0m-2-1h0m-1 0h0m-6 2h0m-8 6h0m4 0h0m6-5h0m2 2h0m1-1h0m818 4h0m-176 2h0m-470 0h0m-1 0h0m-5 4h0m-174-5h0m-1 0h0m0 2h0m-1 0h0m-3 2h0m-3-2h0m0-1h0m0 2h0m-1 1h0m-3 0h0m0 1h0m-177-5h0m168 10h0m0 1h0m1-2h0m0 2h0m1-2h0m0-1h0m2 0h0m1 3h0m1-5h0m0 2h0m0 1h0m1-3h0m3 1h0m171 4h0m498-3h0m382 8h0m-880-2h0m-183 0h0m-2-2h0m-3 0h0m-1 4h0m-1 1h0m-3 0h0m-126 5h0m118 0h0m1-1h0m2-1h0m1 1h0m2 0h0m1-3h0m1 0h0m1 1h0m0-1h0m184 0h0m3 2h0m560-2h0m126 5h0m2 6h0m-145-5h0m-584 4h0m0-3h0m-1 1h0m-3 1h0m-1 1h0m-150-4h0m-2 2h0m-3 2h0m0-1h0m-3-1h0m-1 2h0m-27-3h0m-7 5h0m23 4h0m2 1h0m3-5h0m1 3h0m0-1h0m5-2h0m155 4h0m1-1h0m2-3h0m2 0h0m1 4h0m6-1h0m0 2h0m0-5h0m3 7h0m0 2h0m-3 0h0m0-3h0m-1 2h0m-1-2h0m-1 0h0m-4 0h0m0 5h0m-2-1h0m-1-3h0m-1 1h0m-3 3h0m-1-2h0m-165 0h0m-2 1h0m-2-1h0m-3 2h0m-1 0h0m-3-1h0m-8 6h0m2-1h0m2 2h0m2-5h0m0 2h0m0 2h0m1-1h0m2-1h0m1-1h0m1 1h0m1-2h0m171 1h0m4 4h0m0-3h0m1 3h0m2 0h0m0-3h0m2 1h0m4-2h0m2 3h0m2-3h0m3 3h0m731-4h0m205 2h0m4 8h0m-931-1h0m-1 1h0m-3 0h0m-1-1h0m-2 2h0m-9-2h0m-1-3h0m-1 3h0m-7-1h0m-4-1h0m-1 2h0m0 2h0m-1-5h0m-1 0h0m-180 0h0m-1 0h0m-1 2h0m-4 1h0m-2 0h0m-1 1h0m-11 7h0m2 0h0m1-3h0m2 0h0m5-2h0m186 5h0m1-1h0m5 1h0m1 0h0m0-1h0m1 1h0m0-1h0m3-2h0m1 3h0m2-5h0m1 4h0m2-2h0m2 3h0m2-4h0m2 2h0m4-2h0m2-1h0m0 4h0m2-2h0m1 1h0m1 2h0m5-4h0m0 4h0m2-3h0m929-2h0m-931 6h0m0 2h0m0-1h0m-3 4h0m-1 0h0m-2 0h0m0-3h0m-1 0h0m-1-1h0m-1 0h0m-1 4h0m-1-1h0m-1 0h0m-2-4h0m-1 3h0m-3-1h0m0 3h0m-1 0h0m-3 0h0m-1 0h0m-3-1h0m-1-4h0m-1 1h0m-1 1h0m-4 2h0m-1-3h0m0-1h0m-3 1h0m0 4h0m-1 0h0m-1-3h0m-5 3h0m0 3h0m1 3h0m1-1h0m2 0h0m0-2h0m1 2h0m1 1h0m1-3h0m1 3h0m1-3h0m1 2h0m2-2h0m3-1h0m0 3h0m1 1h0m4-4h0m1 2h0m2 0h0m1-1h0m4 0h0m1 1h0m4-2h0m6-1h0m220 11h0m-231-3h0m-5 0h0m-5 0h0m-2-2h0m-4 1h0m-1 1h0m-6 3h0m-3-1h0m-1-2h0m-1 2h0m0 1h0m-254 0h0m251 4h0m0 1h0m3-3h0m0 2h0m2-3h0m1 5h0m1-5h0m0 3h0m2-3h0m2 2h0m1 1h0m0-1h0m2 0h0m1-1h0m3-1h0m4 1h0m233 3h0m0 1h0m1 0h0m0-3h0m2 1h0m6-1h0m0 2h0m1-1h0m1-2h0m1-1h0m1 3h0m3 2h0m515-5h0m3 3h0m-516 3h0m0 4h0m-1-2h0m-3 0h0m-4-1h0m-1 0h0m0 3h0m-2-1h0m0 2h0m-1-2h0m-1 2h0m-1 0h0m-6 0h0m-2-5h0m0 4h0m-5-1h0m-2 2h0m-2 0h0m-2-4h0m-2 4h0m-2-1h0m-2-1h0m-219-3h0m-2 1h0m-2 0h0m0-1h0m-3 4h0m0-3h0m-2 0h0m-1 1h0m0 2h0m-1-3h0m-1 3h0m-1-4h0m0 3h0m-279 2h0m31 2h0m248 0h0m1 0h0m217 2h0m3 0h0m2-1h0m5 1h0m7 0h0m4-1h0m0 1h0m1-1h0m3 2h0m0-3h0m3 4h0m1 0h0m2-5h0m0 2h0m2 0h0m1 2h0m1 1h0m2-5h0m0 4h0m4-2h0m7 2h0m4-1h0m2 2h0m521-2h0m-328 7h0m-1 0h0m-1-1h0m-1-1h0m-4 2h0m-179-1h0m-1 1h0m-1-4h0m-3 3h0m-1-1h0m-3 0h0m-4-1h0m-1 1h0m-3 2h0m-1 1h0m-2-3h0m-2 2h0m-2-1h0m-2 2h0m-3-5h0m-1 0h0m-6 1h0m-2-1h0m-8 3h0m-4 2h0m0-5h0m-3 2h0m-1 0h0m-2 0h0m-1 1h0m-2 2h0m0-2h0m-1 1h0m-5-2h0m-1-1h0m-4 3h0m-8 1h0m-494 1h0m493 1h0m2 4h0m4-4h0m1 0h0m0 2h0m2 0h0m1-3h0m11 5h0m1-5h0m6 2h0m1 1h0m2-2h0m2 1h0m1 1h0m1-3h0m9 3h0m2 0h0m6 0h0m1 2h0m5-5h0m1 0h0m0 4h0m1 1h0m2-3h0m1 3h0m3-5h0m2 3h0m5 2h0m1 0h0m1 0h0m0-2h0m2-1h0m1 3h0m0-1h0m1 0h0m0-3h0m2 4h0m163-1h0m0 1h0m2-1h0m1 0h0m2-2h0m0 2h0m2-3h0m17 2h0m0-3h0m2 4h0m0 1h0m334 6h0m-330 0h0m-1-2h0m-1 2h0m-1-2h0m-1-3h0m-25 1h0m-1 0h0m-10 2h0m-153 1h0m-3-4h0m-1 3h0m-1-2h0m0 4h0m-3-3h0m-2-2h0m-5 4h0m-5-2h0m-2 1h0m-1-3h0m0 2h0m-5-1h0m-9 3h0m-4 1h0m-1-1h0m0 1h0m-1-2h0m-1-2h0m-1 4h0m0-5h0m-2 0h0m0 3h0m-5-3h0m-13 2h0m-1 1h0m-2 0h0m-1-1h0m-4 2h0m-1-4h0m-1 5h0m-1-1h0m-253-1h0m-255-3h0m69 8h0m440-1h0m3 3h0m0-2h0m1-2h0m1 1h0m3 4h0m0-5h0m2 3h0m1-2h0m2-1h0m5 4h0m1-1h0m4 2h0m0-5h0m3 3h0m1 1h0m2-1h0m0 2h0m1-4h0m3 3h0m1 0h0m6-4h0m2 1h0m3 3h0m4-4h0m1 2h0m1 1h0m1-1h0m1 2h0m3 1h0m4-2h0m1 1h0m3 1h0m3-2h0m3-2h0m4 2h0m6-2h0m1 0h0m2 4h0m136 0h0m1-2h0m3-1h0m4-2h0m1 1h0m0-1h0m39 1h0m2 0h0m1 1h0m1 0h0m1 2h0m4 7h0m-2-2h0m0 1h0m-53-4h0m-5 2h0m-1 1h0m-1 0h0m-1-1h0m-1 1h0m0-1h0m-2 0h0m-3 3h0m-3-1h0m-118 0h0m-2-4h0m-5 3h0m-3 1h0m-3-3h0m-6 0h0m-1 3h0m-4 1h0m-2-3h0m-3 3h0m0-3h0m-1 1h0m-1 1h0m-6-3h0m0 4h0m0-5h0m0 2h0m-1-2h0m0 2h0m-1 3h0m0-5h0m-12 3h0m-1-3h0m-1 1h0m-2-1h0m0 1h0m-4-1h0m-3 3h0m0 2h0m-6-2h0m-3 2h0m-1-4h0m-4-1h0m-3 4h0m-264 1h0m-177 0h0m441 3h0m1-2h0m4 5h0m6-2h0m8-2h0m3 3h0m2 1h0m2-2h0m4-3h0m2 3h0m2-3h0m4 4h0m11-1h0m0 1h0m2 0h0m1-4h0m1 5h0m1 0h0m1-1h0m1-3h0m4 2h0m0-3h0m0 1h0m1 1h0m1-2h0m1 3h0m1 0h0m6 1h0m1 1h0m2-2h0m2-3h0m3 2h0m2 2h0m106 0h0m5 0h0m2-2h0m1 1h0m4-2h0m69-1h0m3 0h0m0 4h0m2-2h0m330 7h0m-64 0h0m-5 0h0m-4 2h0m-255-2h0m-1 0h0m-1-3h0m-82 1h0m-1 0h0m-1-1h0m-2 4h0m-1-3h0m-4 2h0m-96 0h0m-1 1h0m-1 1h0m-2-1h0m-7-3h0m-2 3h0m-8-4h0m0 4h0m-1-3h0m-7 0h0m-1 3h0m-2 1h0m-2-2h0m-1 0h0m-3-2h0m-5 3h0m-1 0h0m0-3h0m-1 4h0m0-1h0m-1-2h0m-9-1h0m-4 3h0m-1-4h0m-2 2h0m-1 1h0m-2 0h0m-1-1h0m-1-1h0m0 4h0m-1-3h0m-1 3h0m0-5h0m-5 5h0m-1-3h0m0 1h0m-3-2h0m-2 2h0m-271 0h0m-289 1h0m-10 6h0m576-2h0m6-1h0m0 3h0m1 0h0m1-3h0m5 3h0m1-4h0m3 4h0m2-1h0m2-3h0m5 1h0m1-1h0m2 1h0m2 1h0m0 2h0m6 0h0m2-2h0m3-2h0m2 1h0m1 2h0m9 1h0m6-4h0m1 5h0m2-5h0m2 4h0m1-2h0m5 3h0m1-4h0m0 2h0m2-1h0m0 2h0m2-1h0m1-1h0m1 3h0m72-1h0m7 0h0m2-2h0m0 1h0m1 2h0m1-2h0m2-2h0m0-1h0m0 2h0m1-1h0m2 0h0m99 1h0m2 3h0m1-1h0m2 0h0m243 0h0m7-4h0m6 3h0m4-1h0m1 5h0m-2 0h0m-5-1h0m0 1h0m-6 1h0m-10 3h0m-7-2h0m-6 2h0m-222-2h0m0 2h0m-1-3h0m0 3h0m-3-4h0m0 2h0m-116-3h0m0 2h0m-3-1h0m-2 3h0m-1 0h0m-2-1h0m0 2h0m-4 0h0m-61-4h0m-1 0h0m-1 4h0m-1-5h0m-1 0h0m-6 4h0m0-4h0m-1 5h0m-1-2h0m-1-3h0m-1 4h0m-1-4h0m-8 5h0m-1-5h0m-4 1h0m-5 2h0m-2 0h0m0-1h0m-1-2h0m-1 2h0m-1 1h0m-6-3h0m0 1h0m-1 0h0m-5 3h0m-1-2h0m-1 0h0m-7 3h0m-1-4h0m0 2h0m0 1h0m-2-2h0m-1 2h0m-3-1h0m-1 2h0m-8-1h0m-1-3h0m-449 6h0m447 0h0m3 3h0m1-2h0m4 1h0m4-1h0m1 2h0m1 0h0m2-2h0m11-2h0m0 3h0m1-3h0m1 5h0m6-5h0m12 4h0m9-4h0m0 1h0m5 3h0m0-1h0m2 1h0m0 1h0m1-3h0m4-1h0m1-1h0m4 4h0m2-2h0m1 0h0m0 2h0m1-1h0m2-3h0m1 0h0m0 4h0m0-3h0m54 3h0m0-3h0m1 3h0m4-2h0m2-2h0m3 0h0m129 2h0m2 2h0m242 1h0m0-3h0m17 2h0m7 7h0m-5 0h0m-3-3h0m-1-1h0m-14-1h0m-7 1h0m-30 1h0m-12 3h0m-190-2h0m-2-1h0m-1 2h0m-1 0h0m-1-1h0m-140-3h0m-3 0h0m-3 0h0m-1 3h0m0-3h0m-1 2h0m-2 2h0m-1 1h0m0-1h0m-3 1h0m0-1h0m-1 1h0m-36 0h0m0-3h0m-1-1h0m0 4h0m-4-3h0m-4 2h0m-1-3h0m-1 0h0m-2-1h0m-1 5h0m-9-2h0m-6-2h0m0 4h0m-1-3h0m-1-2h0m-1 1h0m0-1h0m0 4h0m-8-2h0m-2-1h0m-3 3h0m-3 0h0m0-2h0m-1-1h0m0-1h0m-1 0h0m-2 0h0m-3 5h0m-1 0h0m-2-2h0m-5-1h0m-4 2h0m0-3h0m0 2h0m0-3h0m-5 0h0m-1 5h0m-4-2h0m-2 0h0m-448 2h0m446 1h0m6 2h0m3 3h0m2-1h0m6 1h0m1 0h0m0-1h0m0-1h0m2 0h0m0-1h0m2 0h0m2 2h0m3-4h0m0 4h0m7-2h0m2 1h0m0-1h0m4 1h0m0-3h0m3 1h0m3 4h0m2-1h0m13-3h0m0 4h0m4-2h0m4-3h0m4 1h0m5-1h0m1 4h0m2-3h0m4 3h0m1-1h0m21 2h0m2-1h0m0-1h0m2 0h0m1 1h0m3-2h0m0 1h0m1-1h0m158-2h0m1 0h0m2 1h0m0 2h0m0 1h0m2 1h0m1-1h0m1 1h0m181-1h0m48 0h0m9 1h0m1-5h0m1 0h0m12 0h0m5 7h0m-7 2h0m-10-2h0m0 4h0m-4-1h0m-58-3h0m-175 4h0m-3-4h0m-1 0h0m0 2h0m-2-2h0m-168 0h0m-1-1h0m-6 3h0m-2 1h0m0-3h0m-3 4h0m-4-2h0m0 1h0m-8 0h0m-8-3h0m-4 3h0m-2-2h0m0 1h0m-1-2h0m-1 0h0m-6 0h0m0 2h0m-1 2h0m-3-1h0m-2-4h0m-6 4h0m0-4h0m-4 2h0m-2 3h0m-1-2h0m-2 0h0m-2-3h0m-2 1h0m-4 3h0m-4 1h0m0-5h0m-3 3h0m-3 2h0m-1-5h0m-6 3h0m0 2h0m0-1h0m-5-2h0m-4 0h0m1 4h0m5 0h0m1 3h0m7-1h0m2 2h0m1 1h0m1-5h0m11 3h0m2 2h0m7-1h0m1-1h0m2-1h0m3-1h0m1 4h0m3-5h0m2 3h0m1-1h0m6 3h0m1-5h0m1 1h0m2 2h0m1 0h0m1-2h0m1 1h0m3 1h0m2 0h0m1 2h0m0-3h0m4-1h0m1-1h0m3 4h0m1-2h0m0-2h0m1 3h0m1-1h0m1 0h0m0 2h0m1-2h0m0-1h0m2 3h0m0-3h0m0-1h0m1 2h0m1-1h0m1-1h0m2 3h0m184-3h0m1 1h0m2 3h0m1 0h0m0-1h0m237-2h0m1 2h0m8-2h0m4 4h0m3-2h0m0-3h0m2 5h0m10 3h0m-2-2h0m-5 5h0m-2-5h0m-3 0h0m-7 4h0m-8-4h0m-234 1h0m0 3h0m-1-1h0m-1-2h0m-2 0h0m-184-1h0m-3 1h0m-1 2h0m-2-1h0m-1 2h0m-5 1h0m-1-3h0m-3 2h0m-2-2h0m-2 2h0m-2-2h0m-3-1h0m-2-1h0m-3 0h0m-2 2h0m0 2h0m-1 1h0m0-3h0m0 2h0m-3 1h0m-4-2h0m-1 0h0m0-1h0m-2-1h0m-2 0h0m0 4h0m-2-2h0m0-1h0m-7 0h0m-1 3h0m0-4h0m-1 0h0m0 1h0m-1 0h0m-2-2h0m-2 5h0m-2-5h0m-1 4h0m0-1h0m-1-3h0m-1 5h0m-13-4h0m-1 3h0m-3 1h0m0-5h0m0 2h0m-2 1h0m-3 1h0m0 1h0m2 4h0m2 1h0m1 0h0m3-1h0m1-2h0m6 1h0m2 0h0m5-1h0m0 2h0m1-3h0m0 4h0m8-1h0m1-3h0m3 3h0m2-3h0m5 4h0m0-3h0m4 2h0m1-3h0m6 1h0m2 0h0m3 4h0m4 0h0m4-4h0m1 0h0m1 4h0m0-5h0m3 2h0m5 0h0m5-2h0m196 3h0m2-2h0m1 4h0m228-3h0m8 1h0m4-3h0m5 4h0m13-4h0m4 9h0m-7 1h0m-5-4h0m-3 0h0m-5 0h0m-3 4h0m-236 0h0m-1-2h0m0 2h0m-1-1h0m-2-2h0m-201-1h0m-9 1h0m-6 3h0m-5-1h0m-5 1h0m-1 1h0m-1-4h0m-1 3h0m-2 0h0m-3 1h0m-6-4h0m0 1h0m-2 1h0m0 2h0m-2-1h0m-1-2h0m-3 2h0m-2-3h0m-2 1h0m-1-1h0m-3 1h0m-1 0h0m-5 2h0m-1-4h0m0 2h0m-1 0h0m-8 4h0m4 2h0m2-1h0m1 3h0m0-4h0m3 4h0m2-3h0m9 0h0m3 1h0m7 3h0m2-2h0m1 0h0m1-1h0m1-2h0m3 5h0m1-2h0m1 0h0m1 0h0m6 2h0m2-4h0m4-1h0m1 1h0m5-1h0m216 0h0m1 1h0m1 1h0m3 3h0m2 0h0m207 0h0m19-4h0m3 4h0m2-5h0m16 2h0m2 2h0m112-2h0m2 2h0m-120 7h0m-3-5h0m-5 2h0m-3 3h0m-3-3h0m-17 2h0m-2-3h0m-208 3h0m-2 1h0m-1-3h0m-1 1h0m-2-1h0m-238 1h0m-1-2h0m-1 4h0m-1 0h0m0-1h0m-1-2h0m-2 3h0m0-4h0m-1 0h0m-2 2h0m-4-3h0m0 1h0m-1 4h0m0-4h0m-2 4h0m0-5h0m-1 4h0m-3-4h0m-1 1h0m-4 4h0m-1-2h0m0-1h0m-2 0h0m-1 0h0m-3 1h0m-2 4h0m3 2h0m1-1h0m3 2h0m1-3h0m3 4h0m1-5h0m0 4h0m3-3h0m3 2h0m1 0h0m0 2h0m1-4h0m8-1h0m1 5h0m3-5h0m5 2h0m242 1h0m1-1h0m1 3h0m211-2h0m17 0h0m6-3h0m9 1h0m3 3h0m11-1h0m1-3h0m110 11h0m-1-2h0m-105 1h0m-1-2h0m-9 2h0m-1 0h0m-2 1h0m-7-1h0m-6-2h0m-4 0h0m-4-2h0m-17 2h0m-204 3h0m-2-2h0m-3-1h0m0 3h0m0-5h0m-2 3h0m-250-2h0m-4 2h0m-2-2h0m-4 4h0m-1 0h0m-4-1h0m-1 1h0m-1-4h0m-1 3h0m-3-4h0m-2 3h0m-4-3h0m-484 0h0m-17 1h0m-4 1h0m-9 0h0m-6 0h0m-23 0h0m-49 0h0m441 9h0m153-4h0m2 1h0m6 0h0m3-2h0m1 2h0m1 1h0m2-3h0m0 1h0m262 0h0m2 2h0m1 0h0m1 1h0m225 0h0m0-4h0m3 1h0m4 2h0m11 2h0m5-4h0m10 1h0m105 0h0m-102 5h0m-9 1h0m-8-1h0m-34 4h0m-206 0h0m-2-2h0m0-3h0m0 2h0m-271-2h0m-4 4h0m0-3h0m-1-1h0m-1 5h0m0-2h0m-1-3h0m0 2h0m-2 0h0m-151 2h0m-39 3h0m47 2h0m424-2h0m2 1h0m1 0h0m1-1h0m209 0h0m27-1h0m3 4h0m1-3h0m4 4h0m2-5h0m2 4h0m1 0h0m13 3h0m-27 0h0m-2 2h0m-8-3h0m0 1h0m-16 0h0m-202 4h0m-2 0h0m-1-2h0m0-1h0m-1 2h0m-3-4h0m-461 5h0m7 5h0m42-3h0m416 0h0m5 4h0m220-1h0m4-4h0m2 3h0m12-1h0m19 4h0m-17 1h0m-4 2h0m-2-3h0m-1 4h0m-6 0h0m-223 1h0m-1 0h0m-2-4h0m0 2h0m-409 1h0m-258 1h0m-5 2h0m11 1h0m6 3h0m1-2h0m1 1h0m6 0h0m650 0h0m1-4h0m1 1h0m240 7h0m-7 2h0m-227 1h0m-2-4h0m-1 3h0m-1-4h0m0 1h0m-1-1h0m-648 0h0m0 2h0m-1-2h0m-3 4h0m-1-2h0m-3-1h0m-1 0h0m-2 0h0m-2-1h0m-2 3h0m-6 2h0m-4-5h0m-6 5h0m-2-2h0m-1 4h0m1 3h0m0-4h0m2 4h0m6 0h0m18-4h0m2 2h0m11-1h0m0 2h0m645-2h0m2-1h0m0 2h0m1-1h0m3 2h0m216 2h0m3-1h0m8-4h0m159 4h0m16-1h0m-32 4h0m-28 4h0m-338-1h0m-2 0h0m-1 0h0m-1-3h0m-655-1h0m-7 4h0m-3-4h0m-1 4h0m-15-3h0m-1 3h0m-3 1h0m-5-5h0m-1 2h0m-3 2h0m-6 7h0m7-5h0m1 0h0m30 2h0m4-2h0m26 5h0m636-5h0m1 0h0m3 3h0m188 0h0m3 1h0m126-4h0m-132 7h0m-184-1h0m-1 2h0m-1 1h0m-443-1h0m-2-1h0m-2 2h0m-1 1h0m-258 1h0m3 3h0m241 3h0m5-1h0m1-2h0m2-1h0m457-1h0m0 2h0m3-2h0m1 4h0m161 0h0m4 1h0m-7 4h0m-155 2h0m-1 0h0m0-5h0m0 2h0m-1 1h0m-1-3h0m-142 5h0m-2-4h0m-1 0h0m-1 3h0m-2-1h0m0 2h0m-2-1h0m-1-2h0m-318-2h0m-2 1h0m-2 2h0m-1-3h0m-1 5h0m-1-3h0m-1 1h0m-1 2h0m-3 0h0m-222 0h0m215 3h0m0 2h0m2-1h0m1 0h0m1-2h0m1 1h0m0-1h0m2 1h0m4-2h0m329 3h0m6 0h0m0 2h0m0-5h0m0 2h0m3 3h0m1-3h0m2 3h0m139-5h0m0 2h0m1-2h0m1 3h0m1 0h0m1-1h0m0 2h0m313 0h0m-5 3h0m-12 3h0m-291 1h0m-3-4h0m-1 3h0m-1-4h0m-138 4h0m-2 0h0m-2 0h0m-4-1h0m-2 2h0m-2-2h0m-1-3h0m-1 0h0m-346 2h0m-3-1h0m0 1h0m-1 1h0m-3 0h0m0 1h0m-1 0h0m-200 4h0m184 3h0m4-1h0m1 1h0m1 0h0m1-1h0m1-1h0m2-2h0m2 0h0m0-1h0m2 1h0m29 4h0m3-2h0m3 0h0m0 2h0m2-1h0m0 1h0m2-2h0m1-1h0m2-1h0m1 0h0m0-1h0m5 1h0m2 2h0m0-3h0m0 4h0m311-4h0m3 4h0m2 0h0m0 1h0m4-5h0m1 5h0m0-5h0m1 4h0m139-4h0m2 1h0m0 3h0m1 1h0m268 0h0m-6 1h0m-257 3h0m-1 2h0m-1-3h0m0-1h0m0 2h0m-150 1h0m-4-4h0m-39 4h0m-272 1h0m0-1h0m-1-2h0m0 1h0m-1-3h0m-1 1h0m-15 0h0m-2-1h0m-3 0h0m0 1h0m-6 2h0m0 2h0m-1-2h0m-2 0h0m-1 2h0m0-1h0m-1 1h0m-2 0h0m-4 0h0m-23-5h0m-2 1h0m-1 2h0m-1-3h0m-1 3h0m-2-2h0m-1 0h0m-1 4h0m-135-3h0m-283 1h0m5 8h0m402-1h0m1 0h0m5-3h0m0 2h0m0-1h0m1-1h0m2 1h0m24 3h0m1 0h0m1 0h0m1-3h0m2 2h0m0-1h0m2-2h0m1 3h0m2-4h0m2 1h0m1 0h0m2-1h0m33 3h0m2 1h0m0-3h0m1 0h0m0 2h0m0-1h0m260 2h0m1 1h0m7-2h0m0 2h0m1-1h0m2 0h0m0-3h0m0 1h0m46-2h0m4 0h0m1 3h0m0 1h0m2-1h0m4 1h0m1 0h0m137-2h0m1-1h0m3 3h0m2 1h0m231-3h0m-228 9h0m-1-1h0m-2 1h0m-1-3h0m-3-2h0m-138 4h0m0-3h0m-1 2h0m-2-2h0m-1 3h0m-1 0h0m-1-4h0m-1 4h0m-2-4h0m0 3h0m-40 1h0m-2 0h0m-8-1h0m-3-2h0m-3 2h0m-1 1h0m-1 0h0m0-4h0m-2 1h0m-2 2h0m0 1h0m0-3h0m-3 1h0m-3 0h0m0-1h0m-1 2h0m-3 0h0m-248 0h0m-1 2h0m-44-5h0m-1 0h0m-2 1h0m-5 0h0m-1 0h0m-1-1h0m-1 5h0m0-4h0m-1-1h0m-1 5h0m-28-4h0m-1 1h0m0 1h0m-2-1h0m-1 2h0m-1-1h0m-1 0h0m-3 1h0m-3 1h0m-62 0h0m-78 3h0m132 2h0m1-1h0m1-2h0m1 4h0m2-5h0m1 1h0m5-1h0m36 2h0m0-1h0m3 3h0m56-4h0m1 1h0m0 2h0m0 2h0m0-5h0m1 3h0m0-1h0m237 2h0m2-1h0m2 1h0m1-3h0m1 4h0m2-1h0m1-1h0m1-1h0m2 3h0m1-3h0m3 0h0m1 1h0m1-1h0m1 2h0m2 1h0m0-4h0m2 3h0m1-3h0m0 3h0m1-1h0m0-1h0m1 0h0m1-2h0m0 4h0m2-4h0m1 1h0m0 4h0m3-2h0m4-2h0m2-1h0m3 5h0m43-3h0m6-2h0m142 1h0m2 3h0m0-4h0m4 4h0m183-1h0m-8 5h0m-174 2h0m-1-3h0m0-1h0m-1 3h0m-3-3h0m-189 3h0m0 2h0m-1-1h0m-3-4h0m-1 3h0m-3 2h0m-1 0h0m-4-3h0m-8-2h0m-4 5h0m-1-3h0m0 2h0m-3 0h0m0-3h0m-1-1h0m-1 3h0m-1 1h0m-1-3h0m-1 0h0m-2 1h0m0 2h0m-4-2h0m-1-2h0m0 2h0m0 2h0m-2-2h0m0-1h0m-2-1h0m-2 5h0m-1-1h0m-2 1h0m-1 0h0m0-2h0m-5-1h0m-1 2h0m-2 0h0m-221 1h0m-2-5h0m0 2h0m-58-1h0m0 2h0m0 2h0m-5-5h0m-48 1h0m-3 0h0m0 1h0m-1 1h0m-3 2h0m0-1h0m-1 1h0m-75 0h0m-5-5h0m-39 2h0m49 9h0m59-1h0m2-1h0m1 0h0m0 1h0m0-3h0m3 0h0m1 0h0m0 1h0m0 2h0m3-3h0m62 1h0m0 1h0m2-1h0m58-2h0m0 4h0m0-1h0m209 2h0m2-1h0m2 1h0m6-5h0m1 4h0m3 0h0m2-1h0m0 2h0m2-4h0m0-1h0m3 0h0m0 4h0m2 1h0m1 0h0m1 0h0m1-3h0m1 2h0m3 1h0m1-1h0m3-4h0m2 4h0m1-3h0m0 1h0m4 3h0m1-2h0m0-3h0m3 4h0m2 1h0m1-4h0m0 1h0m2-2h0m1 5h0m0-3h0m3-2h0m1 4h0m1 1h0m1 0h0m1-1h0m1 0h0m4-4h0m1 3h0m2-2h0m2 0h0m0 2h0m2-3h0m4 5h0m193-3h0m2 1h0m137 1h0m8-1h0m-9 4h0m-3 1h0m-131 1h0m0-2h0m-2-1h0m-1 3h0m-187 2h0m-8-3h0m-4 1h0m-1 2h0m-3-5h0m-1 3h0m-2-3h0m-4 1h0m-1 4h0m-1-3h0m-1 2h0m0 1h0m-3-3h0m0 2h0m0-3h0m-1 4h0m-1-1h0m0-1h0m-2-2h0m-5 0h0m-1 1h0m-1-2h0m-2 3h0m-1-3h0m-1 4h0m0-1h0m-5-3h0m0 4h0m-2-2h0m-2 1h0m0 2h0m-1-2h0m-2-1h0m-2 1h0m0-1h0m0-1h0m-1 3h0m-2-2h0m-2 2h0m-3-3h0m-1 3h0m-3-1h0m-1 1h0m-3-3h0m-3 2h0m-1-2h0m-1 1h0m-1 2h0m-1-2h0m0 2h0m-1-3h0m-5 3h0m-198 0h0m-2-1h0m-1-3h0m0 4h0m-1-2h0m-58 0h0m-1 2h0m0 1h0m-2-3h0m-72-2h0m-2 1h0m0 1h0m-2-1h0m-1 0h0m-5 4h0m0-3h0m-1 3h0m-1 0h0m-86 3h0m68 2h0m2 1h0m10-1h0m1-3h0m0 2h0m0 1h0m3-3h0m1-1h0m2 0h0m84 1h0m2 3h0m0 1h0m55 0h0m3 0h0m2-4h0m2 2h0m0-2h0m202 2h0m1 0h0m7 2h0m3-4h0m4 0h0m4 0h0m5 1h0m0 2h0m0 1h0m1-3h0m1 3h0m0-4h0m0 2h0m1 2h0m0-3h0m0 2h0m1 1h0m2-5h0m1 2h0m2 3h0m0-5h0m0 2h0m3 3h0m4 0h0m1-5h0m0 2h0m1 0h0m1 0h0m0-1h0m1 2h0m2 1h0m1-4h0m4 1h0m0 4h0m4-5h0m2 2h0m0-1h0m4 2h0m0-3h0m0 4h0m1-3h0m0 1h0m2 3h0m0-4h0m1 2h0m1 0h0m0-3h0m1 2h0m0 2h0m1-3h0m1 1h0m1-2h0m2 3h0m1 1h0m5-3h0m2-1h0m2 5h0m1-3h0m0 3h0m2 0h0m190-5h0m1 1h0m1 3h0m1-4h0m1 5h0m95 2h0m-88 3h0m-4 1h0m0-5h0m0 2h0m-2-1h0m0 1h0m-191 3h0m-2-1h0m-3-2h0m-4 1h0m0 2h0m-1 0h0m-1-4h0m0-1h0m-4 5h0m-1 0h0m-1-2h0m-2-2h0m-1-1h0m0 2h0m-1-1h0m-2 1h0m0-1h0m-2 0h0m0 4h0m-3-1h0m0-3h0m-2 1h0m0 1h0m-1 2h0m-1-3h0m-1-1h0m-2-1h0m-2 5h0m-1-3h0m-1-2h0m-1 4h0m-2 1h0m0-5h0m-3 0h0m-3 5h0m0-1h0m-1 1h0m-1-4h0m0 2h0m-2 1h0m-2 1h0m0-3h0m-1 0h0m-2 2h0m0-3h0m0 4h0m-3-3h0m0 1h0m-1-3h0m-2 5h0m-2-1h0m-1-2h0m-9-2h0m-1 0h0m0 2h0m-7 3h0m-211-4h0m-1-1h0m-2 1h0m-5 0h0m-1 1h0m0-2h0m-2 0h0m-6 4h0m-3-2h0m-1 1h0m-2 0h0m-3 1h0m-1-2h0m0 2h0m-2 0h0m-9 1h0m-16 0h0m-2-1h0m-1 0h0m0-3h0m-99-1h0m-1 1h0m-2-1h0m-3 1h0m-1 0h0m-1 0h0m0 1h0m-1-2h0m0 2h0m-3 1h0m-1 0h0m-2 0h0m-1-1h0m0 2h0m0-1h0m-12 1h0m-42 5h0m55 1h0m3 1h0m111-4h0m0 2h0m1 1h0m1-2h0m3 1h0m0-1h0m2 2h0m1 0h0m1-4h0m1 2h0m3 0h0m4-1h0m0-1h0m7 1h0m0 1h0m2-1h0m2-1h0m1 0h0m242 0h0m2 3h0m0 1h0m1-4h0m2 0h0m3 2h0m1 1h0m1 2h0m1-5h0m1 5h0m1-1h0m1 0h0m6-2h0m1-1h0m1 3h0m1-2h0m4 0h0m1 0h0m1-1h0m0-1h0m1 1h0m0 2h0m3 2h0m1-1h0m1 1h0m3 0h0m0-5h0m1 3h0m0-1h0m1 1h0m0 1h0m1 1h0m1-3h0m1 3h0m1-2h0m0-2h0m1 3h0m2-1h0m2 0h0m3 0h0m0-1h0m1-1h0m3 1h0m8 3h0m0-1h0m1-2h0m0-1h0m0 2h0m4-1h0m1 3h0m1-4h0m3-1h0m2 5h0m0-2h0m3-2h0m2 2h0m0 2h0m194-5h0m1 3h0m2 1h0m64-3h0m-13 5h0m-46 5h0m-2-3h0m0 1h0m-1 2h0m0-5h0m0 1h0m-2 3h0m-192 1h0m-3-3h0m0 2h0m0-3h0m-2 2h0m-1 1h0m0-3h0m-1 1h0m0 3h0m-4-3h0m-5-1h0m-2 3h0m0-3h0m-3 2h0m-1-3h0m-2 1h0m0 2h0m-1-1h0m-1 3h0m-6 0h0m-2-3h0m0 2h0m-6-4h0m0 4h0m-5-1h0m0 2h0m-2-5h0m-4 2h0m-2 3h0m-2-2h0m-2-2h0m-1 0h0m-1 1h0m0 2h0m-1-3h0m-2-1h0m-1 5h0m-1-4h0m-1 0h0m-1 4h0m-2-3h0m-3 1h0m-1-2h0m0-1h0m-3 1h0m-1 3h0m-1 0h0m-2 0h0m-1-1h0m-1 2h0m-383 0h0m-1-2h0m-2-3h0m-1 1h0m-10 1h0m-46-1h0m-243 0h0m243 5h0m52 0h0m8 2h0m1 2h0m0-3h0m3 3h0m0-3h0m0 2h0m2 2h0m379-2h0m6 2h0m3 0h0m1-3h0m0-1h0m1 0h0m0 4h0m1-1h0m1-1h0m0 1h0m1-2h0m4 1h0m5 2h0m0-3h0m1-2h0m1 0h0m0 4h0m0-1h0m1-1h0m1 3h0m0-1h0m3-4h0m1 1h0m1 1h0m2 2h0m1 0h0m4-3h0m0 2h0m0-3h0m0 4h0m1-1h0m3-2h0m0 3h0m1-3h0m2 2h0m2 2h0m0-3h0m2 3h0m7 0h0m0-5h0m2 0h0m1 4h0m5-2h0m3 1h0m4 0h0m2 1h0m1-1h0m1-1h0m2 1h0m3-3h0m196 3h0m2 2h0m0-1h0m17-2h0m-12 4h0m-5 4h0m0-3h0m-1 3h0m-3 1h0m-191-3h0m0-1h0m0 4h0m-1-4h0m0 4h0m-1-4h0m0-1h0m-1 5h0m-2-4h0m-2 3h0m0 1h0m-1 0h0m-1-2h0m-3 1h0m0-3h0m-1 1h0m-1 3h0m-1-3h0m-1 1h0m0-3h0m-2 0h0m-2 2h0m-1 2h0m-2 0h0m-4-1h0m-2-3h0m-2 3h0m0 1h0m-2-1h0m0 2h0m-1 0h0m-3-2h0m-4 0h0m-6-2h0m-1 2h0m-3 1h0m-3-2h0m0 1h0m-1-1h0m-1 1h0m-1 2h0m-1 0h0m-3-5h0m0 4h0m-1 0h0m-4-1h0m-1 1h0m-2-1h0m-1-1h0m-1-1h0m-3-1h0m0 2h0m-1-2h0m-1 2h0m-1 1h0m0 2h0m-1 0h0m-4-4h0m-1 0h0m-379-1h0m-5 1h0m-9-1h0m13 6h0m1 2h0m3 2h0m1-2h0m380-2h0m2 5h0m0-3h0m1-1h0m1 2h0m2 1h0m1-3h0m2-1h0m5 2h0m2 3h0m1-1h0m0-1h0m1 0h0m4 1h0m1-3h0m1 3h0m1-4h0m1 1h0m2 3h0m1 0h0m1 1h0m1-1h0m2 0h0m2 1h0m2 0h0m3-1h0m1-1h0m1-1h0m2 1h0m0 2h0m2 0h0m5 0h0m1-5h0m1 0h0m2 0h0m0 3h0m2 1h0m1 0h0m3 0h0m1-1h0m0 2h0m1 0h0m5-2h0m2-3h0m0 4h0m9-3h0m2 0h0m1 2h0m1-2h0m0 1h0m3 3h0m175 0h0m0-1h0m1 1h0m2-3h0m0 3h0m2-4h0m1 2h0m0-1h0m1-2h0m-7 6h0m-1 2h0m0-2h0m-3 2h0m0-1h0m-1 2h0m0 2h0m-2 0h0m-1 0h0m-1 0h0m-167-4h0m-1 3h0m-10-4h0m-4 2h0m-2 2h0m-1-3h0m0 2h0m-4 0h0m-2-2h0m-1 1h0m-6 1h0m0 2h0m-6-5h0m-3 1h0m-1 3h0m-1 0h0m-2-1h0m0-1h0m-1-1h0m0 2h0m-1-2h0m0-1h0m-1 0h0m-1 1h0m-3 4h0m-1-4h0m-1 4h0m-4-4h0m-4 0h0m0 4h0m-6 0h0m0-5h0m-1 2h0m-3 3h0m-3-2h0m-2 2h0m-3 0h0m0-5h0m-2 3h0m-382-1h0m0 1h0m-1 0h0m-1-3h0m-1 0h0m-1 2h0m-56 1h0m0-1h0m61 4h0m1 1h0m1 0h0m1 3h0m2 0h0m0 1h0m1 0h0m379-2h0m1 2h0m5-3h0m0 3h0m1-3h0m1 1h0m1-3h0m1 3h0m1 0h0m1 0h0m3-1h0m2-2h0m1 2h0m1 3h0m2-1h0m1-1h0m1-2h0m2 0h0m4 2h0m1-3h0m0 1h0m1 1h0m2 1h0m2-3h0m1 0h0m1 3h0m4-2h0m1 4h0m2-5h0m1 0h0m1 3h0m0-3h0m2 5h0m0-3h0m1 2h0m1-4h0m2 1h0m2 0h0m4 4h0m0-5h0m4 0h0m1 4h0m1-3h0m0 4h0m1-5h0m1 2h0m1-2h0m1 2h0m2-1h0m1 1h0m1-2h0m1 5h0m0-5h0m2 3h0m3 2h0m2-4h0m2 3h0m154-1h0m2 1h0m2-3h0m0 1h0m2-2h0m3 1h0m-9 6h0m-4 2h0m-1 2h0m-1-2h0m-1 2h0m-2 0h0m-139 0h0m-4-5h0m-1 0h0m0 2h0m-1 3h0m-2-3h0m0-1h0m-1 1h0m-1-2h0m-1 4h0m-3-4h0m0 3h0m-4 2h0m-4-1h0m0-1h0m-2 0h0m-1 2h0m-2-4h0m-5 4h0m-2-5h0m-1 5h0m-2 0h0m-2-3h0m-5-1h0m-3 1h0m-3-2h0m-3 5h0m-4-3h0m-1 1h0m-3-1h0m-2 1h0m0-3h0m-1 5h0m-2-1h0m0 1h0m-1-5h0m0 2h0m-1 1h0m0 2h0m-1-2h0m0-3h0m-2 3h0m0-1h0m-1 2h0m-1-3h0m0-1h0m-1 5h0m-1-4h0m-2-1h0m-1 0h0m-3 1h0m-1-1h0m0 1h0m0 2h0m0 2h0m-1-1h0m0-4h0m-1 4h0m0-4h0m-1 2h0m-380-1h0m-1 2h0m2 4h0m1 2h0m1 1h0m1 0h0m380 0h0m2 1h0m0-3h0m1-1h0m0 2h0m1-3h0m3 4h0m0-3h0m2 0h0m5 3h0m1 0h0m2 1h0m0-5h0m2 0h0m0 2h0m1-1h0m1-1h0m3 0h0m6 3h0m1 2h0m0-1h0m3 1h0m1-1h0m1-2h0m2 0h0m1-2h0m5 0h0m1 4h0m0-1h0m2 1h0m2-4h0m0 1h0m2 3h0m0-1h0m1 0h0m2-3h0m1 4h0m0-3h0m1 0h0m0 2h0m1 0h0m2 2h0m1 0h0m2 0h0m1-3h0m3 1h0m1 1h0m4-2h0m4 1h0m1 1h0m1-4h0m0 4h0m2-2h0m1-1h0m3 1h0m0 1h0m3 2h0m128-1h0m1-2h0m2 3h0m0-3h0m4-1h0m0 3h0m3-4h0m-8 10h0m0-4h0m-1 3h0m-1-2h0m-1 1h0m-1 0h0m-128 1h0m0-2h0m-2 2h0m-1-3h0m0 4h0m-2-2h0m0-1h0m-2 2h0m0 2h0m-4-3h0m-1-1h0m0 4h0m-1-3h0m-1 0h0m-1 0h0m-1 2h0m-2 1h0m-1-1h0m-1-1h0m-2 1h0m-1-4h0m-2 1h0m0-1h0m-2 1h0m0 4h0m-2-2h0m-1 0h0m0-3h0m-2 1h0m-1-1h0m-1 1h0m-1-1h0m-2 4h0m-3-1h0m-1 0h0m-1-2h0m-1 1h0m-3-2h0m-2 3h0m-1-3h0m-4 4h0m-2-1h0m0-3h0m-3 1h0m-1 3h0m-2-3h0m0 1h0m-3-1h0m0-1h0m-3 4h0m-1 1h0m-1 0h0m0-3h0m-1-2h0m-2 2h0m-1-1h0m-1 0h0m-3 4h0m0-1h0m-1-4h0m0 3h0m-1 1h0m0 1h0m-3-3h0m-376 2h0m-4-3h0m0 2h0m-2-2h0m-1 1h0m-295 4h0m298 0h0m1 1h0m1 0h0m2 3h0m3 1h0m231-4h0m0 4h0m144-4h0m4 3h0m0-3h0m1-1h0m3 5h0m1-2h0m0 2h0m2-1h0m1-4h0m1 1h0m1 4h0m1-4h0m2 2h0m4-2h0m1 4h0m3-2h0m2-1h0m2 0h0m0 1h0m1-1h0m5 2h0m0-3h0m0 2h0m1-1h0m1 3h0m2-1h0m2-1h0m1-3h0m1 1h0m3 1h0m0-1h0m7-1h0m1 3h0m0-3h0m2 2h0m5-1h0m1 2h0m2-1h0m4-1h0m1 3h0m0-3h0m1 3h0m1-1h0m6 0h0m3 1h0m0 1h0m1-5h0m0 2h0m1-1h0m1-1h0m130 0h0m1 1h0m0 2h0m0 1h0m1-1h0m1 2h0m2 5h0m-1-1h0m0-1h0m-1-1h0m-125 3h0m-1 1h0m-1-4h0m-1-1h0m0 2h0m-2 0h0m-1 3h0m-1-2h0m-1-1h0m-1-1h0m-1 0h0m0-1h0m-2 2h0m-1 0h0m-1 0h0m0 3h0m-3-4h0m-1 3h0m0 1h0m-1-2h0m0 2h0m-3-5h0m-2 5h0m-1-1h0m-2-3h0m0 3h0m-1 0h0m-1-4h0m-4 1h0m-4 2h0m-1 2h0m-3 0h0m-5-5h0m-5 0h0m-7 5h0m-1-5h0m-2 3h0m-1 0h0m-5 1h0m0 1h0m-1-4h0m-1 0h0m0-1h0m-6 5h0m-3-4h0m0-1h0m-1 3h0m-2-2h0m-1 3h0m-2-1h0m0-1h0m-1-2h0m0 2h0m-1-1h0m-148 0h0m-3 3h0m0-1h0m-1-3h0m-6 2h0m-220 2h0m-2-3h0m-3-1h0m0 2h0m4 4h0m1 0h0m0 2h0m2 2h0m1-1h0m194 1h0m6 1h0m1-3h0m2 2h0m1 1h0m7-4h0m1 2h0m2-2h0m11 3h0m2-1h0m0-1h0m1-1h0m5 4h0m2-4h0m0 1h0m2 1h0m140-1h0m3-2h0m1 1h0m2 4h0m5-2h0m1-3h0m1 4h0m10-4h0m1 3h0m0-1h0m1 0h0m0 3h0m3-4h0m0 4h0m4-2h0m3-1h0m1 3h0m2-4h0m1 3h0m5-3h0m0 2h0m3-2h0m2 1h0m1 3h0m4-1h0m0-1h0m2-3h0m3 2h0m2 1h0m1 2h0m1-4h0m1-1h0m2 5h0m1-5h0m0 2h0m4-1h0m1 1h0m1 3h0m2-1h0m1-2h0m0 2h0m0-3h0m0 4h0m5-3h0m1 2h0m2-3h0m1 2h0m1 2h0m126 0h0m1-5h0m1 4h0m2 1h0m0-1h0m0 4h0m-1 1h0m-132-1h0m0-1h0m-2 2h0m-2 1h0m-4-3h0m-2 1h0m-3-2h0m-3 3h0m-1 0h0m-3 1h0m0-3h0m-1 0h0m-1 1h0m0-1h0m-2 4h0m0-5h0m-2 1h0m-1 0h0m-3 2h0m-1-1h0m-3 0h0m-2 0h0m0 2h0m-1 0h0m-3-2h0m-4-1h0m-1 1h0m-3-1h0m-2 1h0m-1 3h0m-1-5h0m-1 3h0m-2-2h0m0 3h0m-1-1h0m-2 0h0m0 2h0m-2-4h0m0-1h0m-5 1h0m-3 4h0m-2-2h0m-1-3h0m-1 0h0m-1 0h0m-1 4h0m0-3h0m0 2h0m-2-1h0m-143 0h0m0 1h0m-1 2h0m-1 0h0m-1 0h0m-8 0h0m-2-3h0m-5 1h0m-2-3h0m-7 3h0m-4-1h0m-10 2h0m-5-1h0m-2 1h0m-1-2h0m-4 1h0m0-3h0m-185 1h0m-1 3h0m-1-3h0m-1 0h0m-1-1h0m6 9h0m2 0h0m0 2h0m0-3h0m176 0h0m2 1h0m2 2h0m7-1h0m4-3h0m1-1h0m1 1h0m18-1h0m0 1h0m7-1h0m2 0h0m1 0h0m12 1h0m1 4h0m1-2h0m1-3h0m1 1h0m2 1h0m1 2h0m139-2h0m8 0h0m1-2h0m0 1h0m1-1h0m1 1h0m4-1h0m0 1h0m0 4h0m1-5h0m0 2h0m4 2h0m1 1h0m1-4h0m0 4h0m1-1h0m1-2h0m1-2h0m2 3h0m1 2h0m0-3h0m0 2h0m0-1h0m1 2h0m3 0h0m1-2h0m2-1h0m5 2h0m4-2h0m1 0h0m3-1h0m0-1h0m1 0h0m0 4h0m1-4h0m4 1h0m3 2h0m1-2h0m1 1h0m5 0h0m1 0h0m5-1h0m0-1h0m137 0h0m3 1h0m2 2h0m1 1h0m0-1h0m2 8h0m-2-1h0m-1-4h0m-1 0h0m-148 0h0m-8 4h0m-2 1h0m0-3h0m-3 3h0m-1-1h0m-6-3h0m-1 1h0m-1 0h0m-2 2h0m-4 1h0m-3-2h0m0 1h0m-1-3h0m-1 0h0m-3 0h0m-2 4h0m-1-1h0m-1 1h0m-3-2h0m-3-3h0m-3 3h0m-1-1h0m0 2h0m-2 0h0m0-3h0m-2-1h0m-149 4h0m-3-2h0m-1 2h0m-2 1h0m-2 0h0m-2-5h0m-1 2h0m-2-2h0m0 1h0m-6-1h0m-1 0h0m-12 4h0m-6-2h0m-7-1h0m-1 3h0m-7-1h0m-1 0h0m0-1h0m-2-1h0m-180 2h0m-3-1h0m6 4h0m1 0h0m0 2h0m0 1h0m2 1h0m174-2h0m2 2h0m0-3h0m7 2h0m6-2h0m1 2h0m4 0h0m8 1h0m1 1h0m2-3h0m7 3h0m0-3h0m2 1h0m0 2h0m7-5h0m0 2h0m3 2h0m0-4h0m2 0h0m2 2h0m1-1h0m150 3h0m3 0h0m3-2h0m1-2h0m3 4h0m4 0h0m0 1h0m1 0h0m2 0h0m1-3h0m1 3h0m0-5h0m1 2h0m0 3h0m2-2h0m1-1h0m5 3h0m1-3h0m0 2h0m0-4h0m2 5h0m3-4h0m0 2h0m4 1h0m8-4h0m162 0h0m3 5h0m4 6h0m-3-4h0m0 2h0m-1-3h0m0 4h0m-3-4h0m-180 2h0m0-1h0m-2 0h0m-1 0h0m-1 3h0m0-1h0m-4-2h0m-1 1h0m0-1h0m-2-1h0m-2 0h0m-2 2h0m-1-1h0m0 2h0m-2 2h0m0-3h0m-1 0h0m-1-1h0m-7 1h0m-168 2h0m-2 1h0m-16-3h0m0 1h0m-10-3h0m0 1h0m-1 2h0m-180 0h0m-2 0h0m-1-3h0m-301 6h0m303 0h0m2 0h0m0 4h0m1-3h0m1 4h0m176-5h0m1 2h0m1 1h0m7-3h0m4 5h0m2-3h0m1 3h0m0-4h0m11-1h0m176 4h0m3-3h0m2 2h0m1-3h0m4 0h0m199 5h0m1-2h0m0-3h0m2 4h0m-5 4h0m-2 0h0m-2 1h0m0 2h0m0-1h0m-2-1h0m-201-3h0m-195 5h0m-2-4h0m0 1h0m-178 2h0m-3-1h0m0-3h0m-1 4h0m-298 3h0m302 0h0m2 0h0m0 1h0m2 1h0m562 2h0m1-1h0m0 1h0m2-1h0m1 0h0m1-1h0m0-3h0m1 4h0m0-3h0m1 0h0m1 0h0m3-1h0m-11 6h0m-1 0h0m-1 1h0m-1 1h0m-2 0h0m-2 2h0m-1 0h0m-1-1h0m-546 1h0m-3 0h0m-3-1h0m-2-2h0m0-1h0m3 7h0m1 1h0m3-1h0m1 2h0m0 2h0m537-3h0m3 0h0m3-1h0m-9 7h0m0-1h0m-1-1h0m-1 0h0m-2 2h0m0 2h0m-1-2h0m-2 1h0m0-1h0m-1-1h0m0 2h0m0 2h0m-2 0h0m-524-2h0m0-3h0m0 4h0m-301-3h0m304 6h0m0-1h0m1 1h0m3 2h0m2 2h0m508-3h0m1 0h0m0-1h0m2 3h0m0-1h0m1 0h0m2-3h0m-10 8h0m-1-1h0m0 1h0m-2 2h0m-1-1h0m-3 1h0m-494 1h0m-2-1h0m0-1h0m-2 2h0m-1-3h0m3 4h0m2 2h0m1 1h0m1 0h0m482 2h0m3-2h0m0 1h0m1-4h0m1 1h0m4-1h0m1 0h0m-12 7h0m0-1h0m-6 2h0m-2 3h0m0-3h0m-482 3h0m-2-3h0m-5 3h0m-1-2h0m-1 1h0m-5 4h0m2-2h0m2 2h0m1 3h0m0-5h0m4 4h0m1-3h0m2 3h0m1-2h0m1 2h0m1-4h0m1 3h0m0-1h0m3 3h0m463-2h0m0 1h0m3 1h0m2-1h0m1-1h0m2-2h0m1 1h0m2-2h0m0 1h0m1 1h0m1-2h0m5 0h0m-20 8h0m-1 3h0m-4 0h0m0-1h0m-449 0h0m-1 1h0m-2 0h0m-5-5h0m0 3h0m-2 0h0m-2 2h0m-3-4h0m-1 1h0m-1 3h0m-2-4h0m-3 1h0m-3 0h0m0 2h0m-14-1h0m-2 2h0m-7 6h0m7-3h0m2-2h0m2 3h0m2-2h0m2 3h0m3-3h0m0-1h0m1 2h0m1 2h0m3 0h0m3-1h0m1 2h0m3-2h0m0-1h0m1-1h0m1 0h0m0 1h0m4-1h0m0-1h0m7 2h0m2 3h0m1 0h0m2-2h0m4 1h0m3 1h0m430 0h0m1 0h0m1 0h0m0-1h0m2-1h0m1 0h0m3-1h0m0 1h0m2-2h0m-13 9h0m-1-3h0m-1 2h0m-2 1h0m-2 1h0m-2-1h0m-416 0h0m-4-4h0m0 3h0m-1-2h0m0 4h0m-1-2h0m-3-1h0m0 2h0m-1-1h0m-2-3h0m0 2h0m-2-2h0m-1 5h0m-5-5h0m-3 2h0m-3 3h0m-2-5h0m-2 5h0m-1-5h0m-2 2h0m-3 1h0m-1 2h0m-2-3h0m-1 3h0m-7-1h0m-2 1h0m-2-2h0m-1 2h0m-2-5h0m-9 4h0m-3 1h0m-1-2h0m-3 3h0m2 1h0m0 2h0m1-3h0m1 2h0m2-2h0m3 1h0m6 0h0m4-1h0m0 1h0m1 1h0m2-1h0m1 0h0m4 2h0m1-3h0m1 3h0m0 2h0m1-1h0m2-1h0m5 2h0m1 0h0m1 0h0m0-5h0m2 4h0m1 0h0m1-2h0m4 0h0m2 1h0m1-1h0m0 2h0m1-4h0m3 1h0m2 3h0m1-1h0m2 1h0m1-3h0m0-1h0m2 1h0m2 4h0m2-5h0m0 4h0m5-1h0m2-2h0m2 3h0m403 0h0m2 0h0m1-1h0m2-2h0m2 1h0m0 2h0m1-4h0m2 1h0m1-1h0m-10 6h0m-3 1h0m-4 1h0m-2 2h0m-1 0h0m-3 0h0m-388 1h0m-1-5h0m0 2h0m0 3h0m-2-5h0m-2 2h0m-2-2h0m0 1h0m-2 0h0m0 2h0m-2 0h0m-3-3h0m-1 4h0m-1 0h0m-2-2h0m-2 1h0m-6 1h0m-1-1h0m-1-3h0m-1 5h0m-3-1h0m0 1h0m-3-5h0m-1 4h0m-3-3h0m-5 2h0m-1 2h0m-3-3h0m-2-1h0m0 4h0m-2-5h0m0 2h0m-4 1h0m-1 2h0m0-1h0m-1-2h0m-2 0h0m-3 3h0m0-1h0m-2-4h0m-5 5h0m-4-4h0m-222 9h0m227-4h0m1 2h0m2 3h0m4-5h0m3 5h0m1-5h0m4 4h0m2-1h0m9 0h0m2 1h0m1 1h0m0-3h0m0 2h0m2-1h0m1 2h0m0-5h0m4 2h0m0 2h0m3 1h0m0-5h0m2 0h0m5 1h0m0 1h0m2 1h0m0 2h0m0-5h0m2 3h0m0 1h0m1-3h0m4 0h0m4 0h0m2 0h0m0 3h0m3-4h0m3 5h0m1-3h0m2-1h0m1 4h0m0-1h0m2 0h0m2-4h0m1 3h0m372 1h0m1 0h0m3 0h0m0-1h0m1 0h0m0 1h0m2-1h0m1-2h0m3-1h0m-7 6h0m-4 0h0m-1 1h0m-1 3h0m-1-1h0m0-1h0m0 2h0m-3 0h0m-1 1h0m-1-1h0m-1 0h0m-355 1h0m-3-1h0m-2-4h0m-3 1h0m-3 2h0m-1-3h0m0 1h0m-1 2h0m-1-2h0m0 2h0m-2-2h0m-4 4h0m-1-5h0m-1 3h0m-3-1h0m-1 1h0m-5 0h0m-5 1h0m-3-2h0m-4 3h0m-4-2h0m-4 2h0m-1-3h0m-1 0h0m0 2h0m-1-4h0m-3 5h0m-2-4h0m-4 2h0m-1 2h0m-5-5h0m0 3h0m-1-2h0m-2 1h0m-1 1h0m-2 0h0m0 1h0m-7-4h0m0 1h0m5 5h0m0 1h0m1 2h0m2 1h0m2-1h0m3 0h0m1 1h0m3 1h0m2-3h0m5 2h0m3-4h0m0 2h0m1 3h0m1 0h0m1-5h0m3 0h0m1 0h0m1 2h0m1 1h0m3-3h0m1 1h0m1-1h0m2 4h0m3-4h0m5 0h0m0 2h0m1 1h0m2 1h0m6-2h0m2-1h0m1 2h0m1 0h0m3 1h0m0-1h0m1 1h0m1-1h0m3-1h0m4 0h0m2 0h0m0 2h0m8-1h0m343 0h0m1 1h0m2-2h0m0-1h0m2 0h0m1-1h0m-7 6h0m-4 2h0m-2 0h0m-2 2h0m-3 0h0m-325 0h0m-2-2h0m0-1h0m0 4h0m-3-5h0m0 4h0m-1 1h0m0-3h0m-1 3h0m-2-2h0m0 2h0m0-5h0m-7 1h0m-1 2h0m-1-2h0m-1 0h0m-3 2h0m-1 2h0m-3-1h0m-2-2h0m-6-2h0m-2 0h0m0 2h0m-3 2h0m-2-3h0m0 1h0m-4-1h0m0 2h0m-1-2h0m-1 2h0m-1 2h0m-2-4h0m-4 4h0m-2-5h0m-1 1h0m-2-1h0m0 2h0m-3 3h0m-3-4h0m-2-1h0m-1 1h0m-2 2h0m0-3h0m-1 2h0m-4 0h0m-1 3h0m-3-1h0m-2-2h0m-2-1h0m2 7h0m2 1h0m1-2h0m1 0h0m0-1h0m7 3h0m0-2h0m1 4h0m1-5h0m1 5h0m0-5h0m1 0h0m0 1h0m6 4h0m5-5h0m3 1h0m2 3h0m1 1h0m5 0h0m1-4h0m2 0h0m1-1h0m2 4h0m2-4h0m2 5h0m6-4h0m0 2h0m2-1h0m3-1h0m6 0h0m1 4h0m1-2h0m0-1h0m0 2h0m9-4h0m5 5h0m1-1h0m1 0h0m1 0h0m4 1h0m1-1h0m310 0h0m2-2h0m0-1h0m3-1h0m2 0h0m3 0h0m-12 8h0m-4-1h0m-1 1h0m0 1h0m-1 0h0m-1 2h0m0-3h0m-1 2h0m-2 1h0m-5 0h0m-291-2h0m-2-1h0m-1 3h0m-4-3h0m-2-1h0m-2-1h0m-2 0h0m0 4h0m-2 0h0m-1-1h0m-2 0h0m-1-2h0m-2-1h0m-1 1h0m-2-1h0m-4 4h0m-1-4h0m-2 3h0m-3-3h0m0 5h0m-1-5h0m-3 4h0m-2-4h0m-3 2h0m0 3h0m-1-5h0m-1 1h0m0 1h0m-3-1h0m-1-1h0m-1 5h0m-4 0h0m0-3h0m-10-1h0m-1 1h0m0 2h0m-1-3h0m0-1h0m-1 2h0m-2-2h0m0 3h0m-2-3h0m0 2h0m-4-1h0m0 1h0m-1-2h0m0 2h0m0-1h0m-5 3h0m-2-2h0m-1-2h0m-1 0h0m0 5h0m-224 3h0m3 3h0m225-2h0m3 0h0m3 2h0m0-1h0m2 1h0m8 0h0m2-2h0m1 2h0m9-2h0m1-3h0m0 4h0m1-4h0m1 0h0m3 0h0m0 3h0m2-2h0m5 3h0m1-4h0m5 1h0m5 2h0m5-3h0m1 4h0m1-4h0m1 5h0m2 0h0m1-2h0m3 2h0m2-3h0m0-1h0m1-1h0m4 1h0m3 4h0m4 0h0m1 0h0m2-5h0m0 4h0m1-3h0m2 2h0m1-1h0m280 2h0m2 0h0m0 1h0m1-1h0m1-2h0m2 0h0m1 0h0m-7 5h0m-3 1h0m-1-2h0m0 4h0m-1-2h0m-2 3h0m0-3h0m0 2h0m-2 1h0m-1 0h0m-1-1h0m-263-1h0m-1-1h0m-5-1h0m-1 0h0m-1 2h0m-1 0h0m-1-3h0m-5 0h0m-1 0h0m-3 1h0m-5 2h0m-1-2h0m-1 1h0m-1-2h0m-1 1h0m-1-1h0m-3 1h0m-2 2h0m-1-3h0m-1 4h0m-2 0h0m-2 0h0m-1 0h0m-2-2h0m-1 3h0m-3-1h0m-2 0h0m-5 1h0m-1-4h0m-2 4h0m-2-5h0m-1 1h0m-1-1h0m-1 5h0m-1-4h0m-2 3h0m-4-1h0m-4-2h0m0-1h0m-1 1h0m-1 4h0m0-3h0m-2 1h0m-1-2h0m0-1h0m-4 1h0m-1 3h0m-1 0h0m-2 1h0m-1-3h0m-1-2h0m0 5h0m-229 1h0m3 0h0m227 0h0m4 4h0m1 0h0m0 1h0m4-2h0m7 0h0m1-3h0m3 0h0m2 2h0m5-2h0m0 4h0m3 1h0m1-2h0m2 2h0m1-5h0m2 5h0m2 0h0m1-5h0m1 3h0m2-1h0m3 0h0m3 2h0m14 0h0m5 1h0m4-3h0m1 0h0m6 0h0m0 2h0m1-3h0m2 0h0m2 4h0m0-5h0m2 0h0m1 1h0m2 0h0m1-1h0m1 1h0m1 0h0m1 1h0m249 3h0m2-1h0m1-3h0m1 3h0m2 0h0m0-3h0m1 1h0m1 0h0m1-2h0m0 2h0m-11 4h0m-1 0h0m-1 1h0m-1 0h0m-2 1h0m0 2h0m-2-1h0m0 1h0m-234-2h0m0 2h0m-1-1h0m-4-3h0m-4 0h0m-4 3h0m-7 0h0m-1-1h0m-4 1h0m-3 1h0m0-2h0m-1 0h0m-6 0h0m0 1h0m-1 0h0m-3 1h0m-1 1h0m-2-3h0m-1 2h0m-3-3h0m0 4h0m-1-4h0m-4 2h0m-2-2h0m-1 0h0m-5 0h0m-2 2h0m-1-1h0m-6 1h0m-2 1h0m-2-2h0m-2 1h0m-2-2h0m-8 4h0m-3 0h0m-5-2h0m-410 3h0m413 2h0m1 2h0m4-1h0m6-1h0m1 0h0m3-2h0m1 3h0m4-3h0m1 0h0m3 4h0m1-4h0m5 5h0m3-4h0m1 2h0m1 0h0m2-1h0m1 0h0m0-1h0m1 0h0m6 4h0m0-3h0m2 2h0m6-1h0m1 1h0m1-4h0m8 5h0m2-1h0m4 0h0m3-3h0m7 2h0m0-3h0m1 3h0m6-3h0m4 4h0m1-3h0m2 1h0m219 2h0m1 0h0m2-1h0m1 2h0m1-3h0m1-2h0m0 2h0m0-1h0m1-1h0m3 0h0m1 0h0m-11 8h0m-3-1h0m0-1h0m-1 0h0m-1 0h0m-9 4h0m-198-1h0m-5-1h0m0 2h0m-2 1h0m0-1h0m-2 1h0m-4-2h0m-1-2h0m-1-1h0m-13 0h0m0 1h0m-1-1h0m-2 5h0m-3-4h0m0 3h0m-1-2h0m-3 3h0m0-1h0m-5-1h0m-2-3h0m-5 1h0m0 3h0m-5-3h0m-2 0h0m-1 2h0m0 2h0m-1-1h0m-6 0h0m-3-2h0m-1 3h0m-3 0h0m-2-4h0m-3 1h0m-1-1h0m-2 4h0m-3-1h0m-3-4h0m-4 2h0m-2 3h0m-1-4h0m0-1h0m-6 1h0m7 8h0m2-1h0m3-2h0m1 2h0m3-2h0m0 3h0m2 1h0m2-3h0m3 0h0m4 2h0m0 2h0m1-5h0m4 3h0m1-2h0m1 3h0m6-3h0m1 0h0m1-1h0m5 2h0m2 1h0m3 2h0m4-1h0m1-1h0m2 2h0m0-5h0m5 5h0m3-4h0m0 4h0m1-2h0m2 2h0m1-2h0m9 2h0m0-5h0m1 3h0m1 1h0m0-1h0m1-1h0m5-2h0m198 5h0m2-1h0m1 1h0m3-3h0m0 1h0m1-2h0m4 1h0m2-2h0m1 0h0m-10 6h0m-6 3h0m0-1h0m-204-1h0m-3 0h0m-4 3h0m-1-3h0m-2 3h0m-3 1h0m0-3h0m-1 0h0m-3-1h0m-1 1h0m0 2h0m-3 1h0m0-3h0m0 2h0m-2 0h0m-1 1h0m-2-3h0m-2 2h0m-1-3h0m0-1h0m-4 3h0m0-1h0m-2 0h0m-1-1h0m-9 4h0m-1-1h0m-3-4h0m-1 5h0m-1-5h0m0 5h0m-1-2h0m-3-2h0m-1 0h0m-2 3h0m0-2h0m-4 0h0m-6 0h0m0 2h0m-2-1h0m-1-2h0m6 10h0m2-3h0m1-2h0m3 4h0m4-1h0m3-1h0m0-1h0m1 0h0m1 0h0m0 2h0m2 1h0m2-2h0m3-2h0m5 3h0m10-1h0m2 2h0m1-3h0m2 1h0m1 1h0m3 1h0m3-3h0m6 0h0m0-1h0m202 5h0m1 0h0m3-5h0m0 4h0m4-3h0m1 0h0m-11 5h0m-3 3h0m-1-1h0m-2-1h0m-2 4h0m-2 0h0m-204-1h0m-1 0h0m-2-4h0m-2 5h0m-1-2h0m0-3h0m0 4h0m-7-2h0m-1 0h0m-1 3h0m-3-4h0m-4 0h0m0 1h0m-3-2h0m-1 4h0m0-1h0m-2-3h0m0 3h0m-1-2h0m-1 1h0m-1 1h0m-2 0h0m-2 0h0m-2 1h0m-1 0h0m-1-4h0m-228 7h0m233 0h0m1-1h0m2 2h0m2 1h0m1 2h0m0-1h0m1-3h0m0 2h0m1 2h0m0-5h0m1 5h0m1-1h0m5 1h0m5-5h0m2 0h0m2 0h0m2 4h0m200 1h0m4 0h0m1-1h0m2-1h0m1-2h0m1 0h0m1 1h0m0-1h0m1-1h0m2 1h0m-13 7h0m-3 0h0m-210 0h0m-1-2h0m-9 1h0m-1 0h0m6 6h0m0-1h0m1 1h0m1 1h0m3-2h0m190 5h0m4 0h0m3-1h0m0 1h0m2-3h0m0 1h0m1 0h0m4-3h0m4 1h0m-13 6h0m-1 0h0m-2 0h0m-1 2h0m-4 2h0m-1-1h0m-420 0h0m3 7h0m408-2h0m0 2h0m1-2h0m0 2h0m2-2h0m1-2h0m1 1h0m1-1h0m0-1h0m-5 6h0m-5 2h0m-1-1h0m-2 1h0m-2 0h0m-2 3h0m-588 2h0m198 4h0m381 0h0m4-2h0m1-1h0m1-1h0m1-1h0m1 2h0m1-1h0m-11 5h0m0 2h0m-5 2h0m-3-1h0m-1 2h0m-11 5h0m1-1h0m1 1h0m1 0h0m0-1h0m2 1h0m2-3h0m2 0h0m0-1h0m1 0h0m-10 6h0m-3 0h0m-2 4h0m0-3h0m-1 1h0m-1 1h0m0 1h0m-1-1h0m0 1h0m-521 1h0m1 3h0m374 3h0m1-2h0m1 0h0m1-1h0m3 1h0m1-3h0m2 1h0m1 0h0m1 0h0m123 2h0m3 2h0m1-3h0m0 1h0m2 1h0m1-4h0m0 1h0m1 1h0m2-2h0m1 1h0m-13 6h0m-1-1h0m-3 2h0m0 2h0m0-1h0m-1-1h0m-2 3h0m0-3h0m-2 3h0m-107 0h0m-1-3h0m0 3h0m-1-1h0m0-1h0m-1-1h0m0-1h0m-1 3h0m-15-2h0m-1-2h0m-1 4h0m-1 0h0m-10 7h0m2 0h0m1-2h0m0-1h0m4 0h0m2 0h0m23-2h0m1 1h0m0 2h0m0-1h0m1 2h0m1 0h0m2 1h0m96-3h0m1-2h0m0 4h0m1-2h0m2-2h0m0 1h0m4 0h0m-10 5h0m-1 2h0m-3 0h0m-1-2h0m-1 2h0m-1 1h0m-3 0h0m-2 0h0m-79 2h0m0-5h0m-1 5h0m-1-1h0m0 1h0m0-3h0m-2 0h0m-35-2h0m0 1h0m-2 1h0m-3 2h0m-2 0h0m0-3h0m-2 3h0m-1 1h0m-6 5h0m1 0h0m2-3h0m0 4h0m2-4h0m52 1h0m1 0h0m1 3h0m1-1h0m61 1h0m3-1h0m3-2h0m1 2h0m1-1h0m1 0h0m3-2h0m-10 6h0m-4-1h0m-1 3h0m-1 0h0m0-1h0m-1 2h0m-54-3h0m-1 2h0m-1-2h0m0 2h0m-2-1h0m-57-2h0m-3 0h0m0 1h0m-4 1h0m0 2h0m-4 1h0m-131 0h0m-3-5h0m124 11h0m2-1h0m2 0h0m1 0h0m1-1h0m1 0h0m0-3h0m2 2h0m1-1h0m1-1h0m70 0h0m5 4h0m1-1h0m2 1h0m35 1h0m1-2h0m2 1h0m0-1h0m1 1h0m1-2h0m1 0h0m1 1h0m1-1h0m1 0h0m0-1h0m1-1h0m1 1h0m-10 5h0m-3 0h0m-1 0h0m-1 3h0m0-3h0m-2 1h0m0 1h0m-1 1h0m-1-1h0m-4 3h0m-21 0h0m-1-1h0m-1-3h0m0 2h0m-1-3h0m-85 0h0m-3 1h0m-3 2h0m0 2h0m-2-2h0m-2 2h0m-6 6h0m5-2h0m101 2h0m0-3h0m0 2h0m10 1h0m2 0h0m1-2h0m4-2h0m4-1h0m-8 9h0m-4 0h0m-2-3h0m0 2h0m-1 2h0m-2-4h0m-3 0h0m-106 2h0m-1-2h0m-4 1h0m0 2h0m0 2h0m-1 0h0m0-3h0m-1 1h0m-1 1h0m-1 0h0m-1 1h0m-85-1h0m2 3h0m77 3h0m1-2h0m1 2h0m0-3h0m0 2h0m2-3h0m-5 7h0m-1-1h0m-1 0h0m-1 1h0m0 2h0m0-1h0m-1-1h0m-2 1h0m0 1h0m-1 0h0m-1 1h0m-1 1h0m-65-4h0m53 10h0m5-2h0m1 1h0m2 1h0m0-5h0m1 3h0m2-1h0m-8 5h0m-1 0h0m-4 4h0m-2-1h0m-1 1h0m-235 4h0m225 1h0m1 1h0m3-2h0m1 0h0m3 0h0m0-1h0m3-2h0m-11 6h0m-2 2h0m-1 3h0m-1-2h0m-2 2h0m-2-2h0m-211 7h0m206 1h0m2-2h0m1 2h0m1-4h0m0 1h0m2 1h0m0-3h0m4 0h0m-14 6h0m-18 15h0m-6 4h0m-165 6h0m124 24h0m-104 16h0m-1-2h0m78 6h0m-69 13h0m52 1h0m3-4h0m-10 7h0"/><path stroke="#b0b0b0" stroke-width="2" stroke-linecap="square" d="M1899 285h0m-450 2h0m-1-5h0m-220 6h0m1 5h0m3 3h0m-316 5h0m534 3h0m273-2h0m188-1h0m-667 10h0m-5-4h0m-362 3h0m-11 7h0m9-5h0m368 4h0m676 1h0m3 5h0m-317-1h0m-6 2h0m-351-4h0m-386 3h0m-7 1h0m397 6h0m204-4h0m138 0h0m330 2h0m5 5h0m-2-2h0m-185 1h0m-152 1h0m-11 1h0m-123-3h0m-518 3h0m-5-3h0m-96 5h0m-2 3h0m4-2h0m736 1h0m168 0h0m189 3h0m6 6h0m-375-2h0m-107-2h0m-513 1h0m-113-1h0m119 8h0m316-2h0m193 5h0m87-1h0m3-1h0m4-1h0m7-2h0m192 5h0m3-2h0m186-3h0m-397 7h0m-83 0h0m-2 4h0m-501 5h0m501 0h0m74-1h0m226-2h0m192 4h0m-431 3h0m-5 2h0m-238 1h0m-318-5h0m6 11h0m534 0h0m457-2h0m0-1h0m4 7h0m-675 2h0m-3-4h0m-316 3h0m5 4h0m316 1h0m191 2h0m2-2h0m2 0h0m2 1h0m6-4h0m285 7h0m-297 0h0m-5 1h0m-1 3h0m-2 0h0m-6-2h0m-171 2h0m-314 2h0m2 4h0m315-1h0m165 1h0m4-2h0m1-1h0m315 2h0m195 2h0m-2 0h0m-514 1h0m-4 0h0m-5 3h0m-148 3h0m136 4h0m2 0h0m345-4h0m1 5h0m-347 1h0m-4 1h0m-1 1h0m-2 1h0m0-1h0m-3-1h0m-439 3h0m427 5h0m4 1h0m1-3h0m7-1h0m365 1h0m194 2h0m5 7h0m-575-2h0m-7 0h0m-1 2h0m-128-1h0m-290-4h0m7 8h0m2 1h0m226 2h0m16-4h0m71 0h0m87 4h0m5-3h0m1 0h0m1-2h0m0 1h0m587 0h0m7 4h0m-603 1h0m-5 3h0m-1-1h0m-2 1h0m0 2h0m-1-1h0m-3 1h0m-101-2h0m-12 2h0m-41-4h0m26 10h0m19-3h0m99 2h0m4 1h0m0-1h0m6-2h0m418-1h0m201 4h0m-628 1h0m-55 0h0m-37 1h0m-1 0h0m-18 3h0m-6 1h0m-16-2h0m8 7h0m79 1h0m26-1h0m7-2h0m0-1h0m2-1h0m2 0h0m644 0h0m1 4h0m-197 7h0m-3-4h0m-456-1h0m-1 0h0m-1 1h0m-1 1h0m-86-1h0m-9 1h0m-4 0h0m-5-1h0m-3 0h0m-1 2h0m-7 1h0m-2 1h0m-10-3h0m-7 0h0m-202 3h0m-1-2h0m-3-2h0m209 9h0m5-4h0m1 4h0m2-4h0m1 0h0m22 2h0m9-1h0m17-1h0m63 1h0m474 3h0m202-3h0m7 6h0m-2 0h0m-202 3h0m-481-4h0m-4 0h0m-1 0h0m-1 4h0m-3-2h0m-4 3h0m-95-2h0m-10 1h0m-7 0h0m-1 2h0m27 0h0m3 3h0m76 0h0m1-1h0m3 0h0m2 0h0m3 0h0m497 4h0m-508 0h0m-3 0h0m0 2h0m-2 3h0m-2-3h0m-6 2h0m-275-4h0m5 10h0m262 1h0m11-5h0m-13 8h0m-3 1h0m0-1h0m-2 0h0m-249 1h0m-1 8h0m236 0h0m3 0h0m2-2h0m1 0h0m768 7h0m-2-3h0m-208 0h0m-564 2h0m-1-1h0m-1-1h0m-3 2h0m-229-3h0m7 9h0m209 1h0m2 0h0m2-2h0m6-2h0m787 6h0m-209 0h0m-116 5h0m-6-1h0m-471-1h0m-1 0h0m0 1h0m-5 1h0m-2 3h0m1-1h0m472 4h0m30-5h0m2 5h0m11-3h0m87-1h0m213 4h0m4 4h0m-2-1h0m-299 0h0m-529 0h0m-5 0h0m-166 9h0m161-2h0m483 2h0m26-4h0m29 1h0m93-2h0m216 10h0m-307-1h0m-545-3h0m-4 0h0m-6 4h0m-1 1h0m-137 6h0m129-3h0m3-1h0m5 2h0m496 1h0m2-3h0m78 0h0m78-1h0m7 10h0m-3-4h0m-75 4h0m-596-2h0m-1 3h0m-4-2h0m-112 4h0m97 3h0m11-4h0m606 1h0m-4 7h0m-32-2h0m-399 2h0m-4 2h0m0-1h0m-4 2h0m-174-3h0m-5 0h0m-4 3h0m-85-3h0m0 2h0m-266 7h0m1 0h0m270-1h0m71 1h0m2-2h0m1 2h0m4-4h0m7-1h0m170 5h0m1-2h0m4-1h0m418 0h0m25 0h0m6 1h0m290-1h0m2 5h0m-319 2h0m-3-3h0m-59 4h0m-370-3h0m-183 0h0m-2 3h0m-331-2h0m321 8h0m180-1h0m5 0h0m443-1h0m5 1h0m24-3h0m4 2h0m287 3h0m4 1h0m-207 1h0m-76 3h0m-7-3h0m-94 1h0m-393 0h0m-183 1h0m-2-1h0m0 2h0m-3 1h0m-3 0h0m-287-3h0m254 5h0m29 2h0m0-1h0m1 0h0m0-1h0m3 0h0m3-1h0m173 4h0m3-2h0m472-2h0m7 4h0m313 1h0m-198 6h0m-112-5h0m-72 2h0m-255-2h0m-4 1h0m-4 0h0m-12 2h0m0 2h0m-11-2h0m-1 1h0m-5-2h0m-18 2h0m-5-1h0m-9 1h0m-9 1h0m-90 0h0m-173-5h0m-2 0h0m-2 3h0m-5 2h0m-256-4h0m11 6h0m1-1h0m238 3h0m179 1h0m6-3h0m76 4h0m1-4h0m11 2h0m7-3h0m2 4h0m19-3h0m3 1h0m7 0h0m2 0h0m4-1h0m4-1h0m1 1h0m4 2h0m5-1h0m1 2h0m8-2h0m0 2h0m3 1h0m15-5h0m364 5h0m-20 2h0m-11 1h0m-72 1h0m-269-1h0m-3-1h0m-2 1h0m-6 1h0m-1-2h0m-9 3h0m-24-4h0m-4 1h0m-1 3h0m-3-2h0m-1 3h0m-2 0h0m-1-4h0m0 2h0m-4 0h0m-2-3h0m-2 3h0m-1-1h0m-5 3h0m-12 0h0m-90-4h0m-182-1h0m-3 3h0m-3-1h0m-1-1h0m-3 4h0m-31-1h0m-184-3h0m-2 0h0m177 7h0m32 3h0m3-1h0m1-2h0m179 3h0m4-4h0m7-1h0m93 1h0m12 1h0m11 2h0m8 0h0m5-2h0m14 3h0m6-5h0m4 4h0m0-1h0m2-2h0m0 3h0m1-4h0m1 4h0m5-1h0m3-3h0m0 2h0m2 2h0m1 1h0m4-4h0m3 1h0m3-2h0m0 4h0m7-1h0m2-3h0m2 5h0m342-3h0m97-1h0m206 0h0m2 2h0m5 7h0m-311-2h0m0 2h0m-396-4h0m-6 0h0m-5 0h0m-3 1h0m-140 0h0m-177 0h0m-3-1h0m-30 0h0m-3 3h0m-2 1h0m-4 1h0m-138-1h0m-5-1h0m175 4h0m2 0h0m177 2h0m488-2h0m73 2h0m103 0h0m207 2h0m-304 6h0m-2-5h0m-61 4h0m-5-3h0m-511 3h0m-181-2h0m-3 2h0m-134 0h0m3 4h0m86 3h0m31 0h0m7-3h0m5 0h0m143 2h0m0 1h0m1-3h0m1 2h0m28 1h0m4-3h0m898 1h0m4 7h0m-907-4h0m-24 5h0m-1 0h0m0-1h0m-3-4h0m0 1h0m-1 0h0m-1 2h0m-1 2h0m-1-5h0m-153 1h0m-2 2h0m-5 1h0m-2 0h0m-27-2h0m-73 0h0m94 9h0m1-3h0m1 3h0m2 0h0m3-3h0m159 0h0m2 2h0m1-1h0m0-1h0m2-2h0m2 5h0m1 0h0m1-4h0m3 3h0m727-1h0m207 3h0m-205 2h0m-723 3h0m-4-3h0m-1 3h0m-1 0h0m-5-2h0m-2 2h0m-3-4h0m-3 4h0m-1 0h0m-2 0h0m-1-3h0m-1 2h0m-169-2h0m-10 7h0m0-1h0m179-1h0m1-1h0m1 0h0m1 1h0m4 3h0m0-4h0m1 1h0m1 0h0m2 4h0m1 0h0m0-1h0m2 0h0m1-2h0m2 0h0m1-2h0m2 2h0m1-1h0m2 2h0m0 1h0m4 1h0m0 4h0m-1 2h0m-1-1h0m-2-1h0m-4-1h0m-1 0h0m-2 1h0m-2-1h0m0-1h0m-1 3h0m-2-4h0m0 4h0m-1-3h0m-10 1h0m-1 1h0m-6 0h0m-179 1h0m-2-3h0m-4 3h0m-7 6h0m3-3h0m4-1h0m0 2h0m184 3h0m4-2h0m2-1h0m3 0h0m2-2h0m1 4h0m1-3h0m0-1h0m2 1h0m1 0h0m1 1h0m2 2h0m1 0h0m3 0h0m2 1h0m2-4h0m0-1h0m1 4h0m0-1h0m4-1h0m0 2h0m2-2h0m2 0h0m1-1h0m0-1h0m3 3h0m0-1h0m726-1h0m205 5h0m-202 2h0m-727-1h0m-8 0h0m0 4h0m-2-2h0m-1 0h0m-1-3h0m0 3h0m-1 2h0m0-5h0m-3 0h0m0 2h0m0 2h0m-5 1h0m-4-5h0m0 4h0m-1 0h0m-3 0h0m-1-1h0m-1-1h0m0 1h0m-2-2h0m-2-1h0m-4 0h0m0 4h0m-1-3h0m-4 1h0m-192-1h0m191 9h0m0-4h0m0 2h0m1-1h0m0 2h0m3-1h0m6-1h0m0 4h0m2-3h0m1 3h0m3-2h0m1-2h0m1 2h0m1-2h0m1 1h0m1 2h0m4-1h0m0 1h0m1-4h0m0 5h0m2-4h0m0 2h0m5-1h0m0 2h0m3-3h0m740 2h0m203 1h0m-717 5h0m-2 0h0m-8 1h0m-227-1h0m-3 0h0m-3-1h0m-1 2h0m-1-4h0m-5 1h0m-2 4h0m-2-2h0m-3 0h0m0 1h0m-3-2h0m-4-1h0m-3 4h0m0-4h0m-268 9h0m16 0h0m2 0h0m212-2h0m35 1h0m1-3h0m1 5h0m4-2h0m2 2h0m1-2h0m0 2h0m2-4h0m1 0h0m4 4h0m0-3h0m1 3h0m3-4h0m1 1h0m3-1h0m2 1h0m223 3h0m3 0h0m1-1h0m4 0h0m1-3h0m3 2h0m1-3h0m2 1h0m1 4h0m6-4h0m0 2h0m2 0h0m522 8h0m-517-1h0m-4 0h0m-2-4h0m-14 0h0m-3 4h0m-3-3h0m-2 4h0m-2-1h0m-3 0h0m-1-2h0m-1 2h0m0 1h0m-228-5h0m-4 2h0m-2 3h0m-4 0h0m-3-4h0m-42 4h0m-204-2h0m-32 6h0m235-1h0m48-2h0m213 4h0m3 0h0m5 0h0m12-3h0m1 4h0m0-5h0m2 1h0m0 2h0m2 2h0m5-1h0m1-2h0m1 1h0m3-1h0m2 0h0m2 2h0m0-2h0m1-2h0m5 4h0m0-3h0m2 0h0m1 0h0m6 2h0m1-3h0m4 1h0m1 1h0m1 3h0m188 5h0m-1-1h0m0-1h0m-1 3h0m-2-3h0m-4 2h0m-3 0h0m-1 1h0m-184-5h0m-1 5h0m-2-5h0m-4 5h0m-1-4h0m-1-1h0m-4 2h0m-6-1h0m-11 4h0m-5-5h0m-1 5h0m-1-4h0m-1 4h0m-5 0h0m-2-1h0m-6 0h0m-2-3h0m0 2h0m-2-2h0m-2 0h0m-1 0h0m-5 4h0m-2-2h0m-4 2h0m-499 6h0m5-4h0m53 0h0m194 3h0m255 0h0m6-1h0m0-1h0m2 0h0m3 1h0m2 2h0m1 0h0m1-3h0m2 3h0m3-1h0m3-1h0m2-2h0m6 3h0m2-4h0m0 4h0m1-1h0m1 2h0m0-3h0m1-1h0m2 1h0m2-1h0m0 2h0m2 2h0m1 0h0m2-2h0m0 1h0m2 1h0m0-3h0m1-1h0m7 1h0m2 0h0m1 3h0m1 0h0m3 0h0m0-3h0m2-1h0m3-1h0m0 1h0m2 4h0m2-5h0m2 1h0m1 3h0m170-2h0m15-2h0m1 2h0m1-2h0m2 2h0m332 6h0m-328 2h0m-1-2h0m0 1h0m-2-1h0m-1 0h0m0-1h0m-35 2h0m-5 2h0m-143 0h0m-1-3h0m-3-1h0m-3 2h0m-1-2h0m-1 4h0m-2-1h0m0-3h0m-5 4h0m-4-1h0m0-3h0m-2 2h0m-2 2h0m0-5h0m-1 4h0m-3-2h0m-6-2h0m-1 1h0m-1-1h0m-5 4h0m-2 1h0m-1-2h0m-1-2h0m-4 1h0m-2 0h0m-3-1h0m-2 2h0m-1 1h0m-3 0h0m0-3h0m-2 2h0m-2 1h0m-1-3h0m-1-1h0m-2 2h0m-3-2h0m-2 4h0m-1-3h0m-1-1h0m-1 1h0m0 4h0m-1-3h0m-2 1h0m-1 0h0m-1-3h0m-1 0h0m-2 4h0m-1-3h0m-516 8h0m84 2h0m179-4h0m257 0h0m1 2h0m1 2h0m0-3h0m2 3h0m2-3h0m1 1h0m3-2h0m0 1h0m1 1h0m1 1h0m2-3h0m1 0h0m1 2h0m1-2h0m4 4h0m1-1h0m2 1h0m1-5h0m3 4h0m2 1h0m1-2h0m1 1h0m1-1h0m0 2h0m1 0h0m4-3h0m0 2h0m4-2h0m0 2h0m2-4h0m1 2h0m1-1h0m1 1h0m3-2h0m2 4h0m1-2h0m3-1h0m1 3h0m6 1h0m6-3h0m2 1h0m1 2h0m2-1h0m2 1h0m5 0h0m142-4h0m2 1h0m1-1h0m1 0h0m42-1h0m0 2h0m1 1h0m329-1h0m-326 6h0m0 2h0m0-1h0m-1-1h0m-1-2h0m-62 3h0m-1 0h0m0-3h0m-122 5h0m-2-5h0m-1 2h0m-1-2h0m-2 0h0m-1 4h0m-4 0h0m-3-4h0m-1 0h0m0 5h0m-1-4h0m-1 3h0m-2-3h0m-3-1h0m-6 3h0m-1-3h0m-2 1h0m0 2h0m-2-3h0m-1 1h0m-1 4h0m-1-1h0m-1-2h0m-7-2h0m-3 4h0m-1-2h0m-8-1h0m0 2h0m-1 0h0m0-3h0m-10 4h0m-1-1h0m-2 1h0m-2-4h0m-1 3h0m-2-2h0m-3 1h0m-1-1h0m0 4h0m-1 0h0m-2-5h0m0 2h0m-2 1h0m-525-3h0m-10 5h0m275 2h0m264-1h0m5 3h0m2-3h0m3 5h0m1-5h0m1 4h0m1-2h0m2 0h0m1-1h0m3 1h0m5 2h0m0-3h0m4 0h0m2 2h0m5-2h0m0-1h0m3 5h0m1-2h0m0-3h0m1 1h0m0 1h0m4-2h0m3 0h0m4 5h0m0-5h0m3 5h0m10 0h0m3-2h0m0-3h0m2 1h0m2 3h0m0 1h0m1-5h0m1 1h0m1 3h0m2-2h0m1 0h0m1 0h0m5 1h0m1-2h0m101 4h0m2 0h0m4 0h0m5-4h0m0 2h0m1-3h0m3 0h0m70 1h0m1 1h0m2 2h0m328 0h0m-61 6h0m-2-1h0m-6 2h0m-256 0h0m-88-5h0m-7 1h0m-1 1h0m-4 3h0m-91-3h0m0-1h0m0 4h0m-1-2h0m0-3h0m-2 0h0m-2 5h0m-3-3h0m-4 1h0m0 2h0m-1-1h0m-2-3h0m0 4h0m-1-4h0m-1 3h0m-12-2h0m0 3h0m-4-1h0m-1-3h0m-3 4h0m-2-2h0m-3-1h0m0-1h0m-1 1h0m-1-1h0m-6 0h0m-2 2h0m-3-1h0m-2-2h0m-3 2h0m-3 3h0m0-1h0m-3-4h0m-1 5h0m-1-2h0m0-3h0m-4 2h0m-1 0h0m-4-2h0m-2 3h0m-551-3h0m-7 4h0m117 3h0m169 1h0m274-1h0m1 2h0m0 2h0m0-5h0m1 0h0m4 4h0m3 1h0m2-4h0m4-1h0m4 5h0m7-5h0m6 3h0m9 0h0m0 2h0m4-2h0m1 2h0m1-3h0m2 3h0m0-2h0m5-1h0m2 0h0m3 0h0m3 3h0m2-4h0m1-1h0m4 1h0m2 0h0m4 1h0m2 2h0m1-1h0m79 1h0m5 0h0m2-3h0m1 0h0m1 0h0m2-1h0m4 0h0m97 0h0m1 2h0m2 2h0m2 0h0m237 0h0m3-1h0m2-1h0m2 0h0m1 0h0m2 3h0m3-5h0m7 4h0m71 5h0m-66-2h0m0 4h0m-1 0h0m-2-5h0m-7 4h0m-2-3h0m-3 3h0m0 1h0m-1-3h0m-2-2h0m-2 0h0m-3 0h0m-7 0h0m-229 5h0m-5-3h0m-112 0h0m-11 0h0m-64 2h0m-2-3h0m-1-1h0m-2 2h0m-2 2h0m-8 1h0m-2-2h0m-1-3h0m-4 5h0m-2-4h0m-1 2h0m-2 0h0m-1 0h0m0 2h0m0-3h0m0 2h0m-9-3h0m-1 2h0m-3 2h0m-3-2h0m-2 2h0m-5-3h0m0 1h0m-6-3h0m-1 0h0m-3 1h0m-2-1h0m0 3h0m-2-2h0m-5 3h0m-2 0h0m-2 0h0m-2-2h0m-2 2h0m-1-2h0m-1 2h0m-2-1h0m0-3h0m-271 11h0m277-3h0m4 0h0m2 3h0m2-3h0m2-1h0m0 4h0m1 0h0m1-2h0m2-2h0m1 2h0m3 2h0m1-3h0m7 3h0m3-3h0m0-1h0m0 2h0m5 0h0m1-2h0m1 1h0m0 2h0m4 0h0m2-3h0m0 2h0m2 2h0m0-2h0m5-3h0m7 1h0m3 3h0m4-4h0m4 3h0m0-3h0m2 5h0m4-3h0m1-1h0m2-1h0m2 4h0m0-1h0m53 2h0m2-2h0m0-1h0m134-1h0m1 2h0m0-3h0m2 5h0m222-5h0m14 0h0m1 4h0m1-1h0m3 2h0m0-3h0m2-2h0m3 1h0m1 4h0m5 0h0m4-3h0m69-2h0m-60 6h0m-1 0h0m-13 2h0m-2 0h0m0 2h0m0-3h0m-1 2h0m0 2h0m-2-5h0m-4 1h0m-30 4h0m-2-3h0m-5 2h0m-5 1h0m-199-5h0m-141 1h0m0-1h0m-3 2h0m-1-1h0m-1-1h0m-3 2h0m0 2h0m-3 0h0m-42-2h0m-2 1h0m-2-2h0m-4 3h0m-1 1h0m-2-3h0m-2 3h0m-1-2h0m0-1h0m-7 2h0m-1-3h0m-2 3h0m-1-2h0m0 2h0m-7-2h0m-1 3h0m-2-1h0m-4-1h0m0-3h0m-1 3h0m-2 0h0m-3 1h0m0 1h0m0-5h0m-3 0h0m-2 4h0m-2-1h0m-1-2h0m-1 3h0m0-2h0m-2 3h0m-2-4h0m-5 0h0m-3-1h0m0 2h0m-1-2h0m-1 2h0m-4-2h0m-1 1h0m-2 0h0m-1 3h0m-2-4h0m-272 4h0m-175 5h0m454-2h0m1 3h0m4 0h0m3-4h0m2 1h0m2 4h0m5-3h0m1-2h0m2 5h0m5-5h0m0 1h0m5 2h0m1 2h0m1-4h0m1-1h0m0 2h0m0 2h0m2-2h0m1-1h0m3 0h0m0 4h0m8-1h0m1-3h0m2 2h0m0-3h0m3 4h0m0-3h0m3 4h0m0-3h0m3 2h0m8 0h0m4-3h0m0 2h0m1-2h0m4 3h0m2 1h0m5 0h0m18 0h0m2-1h0m168 1h0m187-2h0m54-3h0m12 3h0m2 0h0m76 2h0m-75 3h0m-7 1h0m-8-2h0m-3 3h0m-1-2h0m-21 1h0m-9-3h0m-24 0h0m-177 4h0m-1 1h0m-1-2h0m-1-2h0m-172 0h0m-4 1h0m-2-1h0m0 2h0m-3 0h0m-1 0h0m-1 1h0m-2 1h0m-2-4h0m0 3h0m-4 1h0m-3-2h0m-1-1h0m-3 2h0m-1 0h0m-1-4h0m-2 0h0m-5 0h0m-1 3h0m-2-2h0m-2 3h0m-2-1h0m0 2h0m-4-3h0m-1 3h0m-4 0h0m-1-2h0m-4-1h0m-2-2h0m-1 1h0m-9 2h0m-8-2h0m-1-1h0m-1 1h0m0 1h0m-3 3h0m-1-2h0m-1 0h0m-1-3h0m-5 0h0m-4 2h0m-1 1h0m-2 2h0m0-3h0m-4-2h0m-1 1h0m-2 0h0m2 5h0m3 1h0m1 4h0m1 0h0m1-3h0m1-1h0m2 1h0m3-2h0m0 4h0m2 1h0m0-1h0m1 1h0m1 0h0m1-4h0m2 0h0m2 4h0m1-1h0m2-2h0m1 3h0m2-2h0m2 0h0m3-3h0m3 2h0m1 0h0m6 3h0m4-2h0m0 2h0m5-3h0m1-1h0m1 2h0m2-2h0m1 2h0m2 2h0m2-1h0m1 0h0m0-3h0m3-1h0m0 1h0m1 1h0m1 2h0m0 1h0m2-1h0m1-4h0m4 4h0m1-4h0m1 2h0m0 3h0m1-5h0m3 2h0m1 1h0m3-3h0m2 3h0m2-1h0m1 3h0m1-3h0m0-1h0m0 4h0m1-3h0m3 1h0m0-3h0m187 5h0m157-2h0m3-1h0m51 0h0m19-1h0m3 0h0m7-1h0m1 5h0m2-1h0m1 1h0m2 0h0m12-5h0m1 3h0m-3 3h0m-10 2h0m-1 2h0m-1 0h0m-8-4h0m-3 3h0m-21-2h0m-5 1h0m-203 3h0m-1-4h0m-3 2h0m-185-1h0m-2 0h0m-3 1h0m0-1h0m-2 3h0m-8-3h0m0 2h0m-3-2h0m-4 1h0m-1 1h0m-1-1h0m-1 0h0m-1-3h0m-11 3h0m-6 0h0m-1-1h0m-7 2h0m-2-1h0m-6-2h0m-1 4h0m-3 0h0m-2-5h0m-2 4h0m-4 0h0m-1-3h0m-2 4h0m0-3h0m-2 0h0m-4 1h0m-3-2h0m0 2h0m-1-2h0m0 2h0m0 2h0m0-5h0m-2 1h0m0 2h0m-2 1h0m0-1h0m-457 2h0m0 5h0m457-2h0m2 1h0m1-1h0m1 2h0m1-2h0m5 3h0m4-1h0m0 1h0m3-4h0m3 3h0m6 0h0m0-1h0m1-2h0m1 1h0m7 0h0m0 3h0m2-5h0m0 3h0m3-3h0m1 4h0m1-2h0m0 3h0m16-3h0m2-2h0m11 1h0m2 2h0m1-2h0m6-1h0m196 1h0m1 0h0m2 4h0m2 0h0m208-4h0m2 3h0m22-2h0m1 0h0m1 2h0m17 1h0m0-3h0m5 0h0m106 2h0m6 5h0m-18 0h0m-6-1h0m-6 2h0m-3 1h0m-78 0h0m-10-3h0m-2 0h0m-2-1h0m-5 2h0m-9-2h0m-22 1h0m-206 1h0m0-1h0m-209 0h0m-1-1h0m-3 1h0m0-1h0m-1 2h0m0 2h0m-1-2h0m-3-2h0m0-1h0m-5 2h0m-3 3h0m-5-1h0m-1-2h0m-1 0h0m-2 0h0m-2 2h0m-8 0h0m-1-2h0m-1 1h0m-4-2h0m-1 2h0m-6-3h0m-4 4h0m-3 0h0m-1-3h0m-1 3h0m-1 1h0m-1-4h0m-3 0h0m0 4h0m-1-4h0m-3-1h0m-1 2h0m-462 5h0m466-1h0m3 0h0m5 2h0m1-1h0m4 0h0m2 2h0m1-1h0m1 2h0m1-3h0m1 4h0m10-3h0m1 0h0m3 2h0m4-4h0m0 1h0m6 0h0m3 3h0m0 1h0m3 0h0m2-1h0m4-2h0m220 0h0m0-1h0m3 4h0m205 0h0m1-3h0m21 3h0m15-3h0m4 0h0m0-1h0m1 4h0m11-1h0m61-1h0m5-3h0m43 6h0m-63 2h0m-42 0h0m-9 0h0m-7 0h0m-1 1h0m-1 0h0m0-1h0m-9 0h0m-2 1h0m-1 2h0m0-1h0m-233-2h0m-224-2h0m-2 1h0m-3 2h0m-1-3h0m-1 4h0m-1 0h0m-6-1h0m-1 2h0m-1-3h0m-4 1h0m0-1h0m-7 3h0m0-3h0m-1 3h0m0-5h0m-1 1h0m0 2h0m0-3h0m-2 5h0m-2-5h0m-7 4h0m-3-3h0m-3 3h0m-3-3h0m-1 1h0m-468 2h0m476 3h0m0 4h0m3-1h0m2-3h0m7 1h0m2-1h0m0 3h0m2 0h0m1 0h0m2 0h0m0-1h0m2-2h0m0 1h0m1 2h0m8-2h0m4 2h0m235-2h0m2 1h0m3 1h0m203-4h0m22 2h0m2-2h0m6 4h0m2 0h0m2 0h0m1-4h0m0 3h0m1-3h0m1 4h0m1-1h0m1 0h0m1 0h0m0 2h0m6-5h0m4 3h0m109-2h0m3 4h0m-105 1h0m-4 5h0m-7-1h0m-2 0h0m-2-1h0m0 1h0m-2-3h0m-1 2h0m-7 1h0m-2 1h0m-20 0h0m-210-3h0m-252 0h0m-1-1h0m-1-1h0m-8 3h0m-4 1h0m-1-4h0m-1 1h0m-8 0h0m-1 0h0m-1 4h0m0-4h0m-1 2h0m-1-3h0m-476 0h0m-12 1h0m-6 0h0m-13-1h0m-24 3h0m-4-2h0m-8 0h0m-19 1h0m-19 0h0m-5 0h0m-13 3h0m441 1h0m6 3h0m158 2h0m0-3h0m1 2h0m0-4h0m5 1h0m1-1h0m3 4h0m1-4h0m0 2h0m3-1h0m473 1h0m15-1h0m6 0h0m11 3h0m1-3h0m2 0h0m0 4h0m2-4h0m1 1h0m9-2h0m6 4h0m104 5h0m-122 1h0m-18-2h0m-13 2h0m-212-3h0m-2 0h0m-270 0h0m-3 2h0m-2-3h0m-1 1h0m-1-1h0m-154 1h0m439 8h0m0-3h0m0 2h0m1 2h0m208-2h0m15 0h0m14 0h0m1 0h0m8 0h0m0 2h0m112-4h0m5 2h0m-114 6h0m-1-1h0m-7 4h0m-16-4h0m0 4h0m-12-2h0m-2-1h0m-205 3h0m-2-1h0m-2-2h0m-1 0h0m-1-2h0m-420 3h0m4 4h0m420-1h0m2 1h0m0 2h0m205-2h0m29-1h0m10 0h0m4 5h0m10-5h0m104 3h0m-100 7h0m-21-2h0m-5 1h0m-7-3h0m-225 1h0m-1 0h0m-408 3h0m-7-3h0m-39 4h0m-1-3h0m-3 0h0m-208 3h0m-3-2h0m0 2h0m0 3h0m10-2h0m6 1h0m203 2h0m453-2h0m4 2h0m0 1h0m203-3h0m19-1h0m26 3h0m-6 5h0m-35 3h0m-205 0h0m-409-5h0m-236 5h0m-3-3h0m-3 0h0m-3 1h0m-1 1h0m-6 1h0m-4-5h0m-3 5h0m0-3h0m-5 2h0m-1-4h0m-1 4h0m-1 1h0m-6-5h0m-12 4h0m-1 2h0m16 1h0m3 2h0m4 0h0m0-3h0m2 1h0m1 2h0m13-3h0m4 2h0m3-1h0m0-1h0m209 4h0m444 0h0m1-1h0m202-1h0m27-2h0m156 4h0m21-2h0m-31 4h0m-7 0h0m-5 1h0m-8 1h0m-352-1h0m-1 1h0m-638 3h0m-2-2h0m-16-2h0m0 2h0m-4-3h0m-15 1h0m-3-1h0m-4 5h0m0-1h0m-1-4h0m-2 2h0m-1 1h0m-6-1h0m0-1h0m3 5h0m9 0h0m6 0h0m1 4h0m1-3h0m7 0h0m3 1h0m4 0h0m658-2h0m4 5h0m204-5h0m114 3h0m8-2h0m-138 7h0m-7 3h0m-178-1h0m0-3h0m0 2h0m-1-3h0m-2 2h0m-443 2h0m-3-1h0m-1 2h0m-1 0h0m-254 1h0m2 4h0m71 0h0m167 1h0m7 0h0m1-4h0m1 1h0m2-2h0m462 3h0m2 8h0m0-5h0m-2 3h0m-1-2h0m-140 3h0m-3 0h0m-6-1h0m0-2h0m-319-1h0m-3 0h0m-6 1h0m-1 3h0m-3 1h0m-204 0h0m-24-1h0m7 6h0m22 0h0m189 1h0m4-2h0m2 0h0m3-2h0m334 1h0m0 2h0m1-3h0m1 0h0m0 4h0m0-3h0m1-1h0m0 4h0m3 0h0m2-2h0m1 0h0m2 1h0m3 0h0m139 0h0m2 1h0m300 0h0m10 0h0m8-3h0m6-2h0m2 0h0m2 0h0m-23 6h0m-2 0h0m-6 1h0m-294 4h0m-1-3h0m-1-2h0m-1 1h0m-142 1h0m-6 0h0m0 2h0m-1-3h0m-5-1h0m-307 5h0m-1-1h0m-3 1h0m-31-3h0m-8 2h0m-2-1h0m-4 1h0m-126-4h0m-28 3h0m-8-3h0m-31 5h0m-3-2h0m-1 2h0m-2-2h0m-241 7h0m244 0h0m6-1h0m30-2h0m153 4h0m1-3h0m2-1h0m3 0h0m3 1h0m24 3h0m17-5h0m3 0h0m1 1h0m0-1h0m1 1h0m1 4h0m0-5h0m312 0h0m4 3h0m1-1h0m0 1h0m1-1h0m4 1h0m0-1h0m2 1h0m0 2h0m1 0h0m141-2h0m3 2h0m268-1h0m10-4h0m-21 8h0m-2 0h0m-4 1h0m-247 1h0m-5-4h0m-137 5h0m-2 0h0m-1-3h0m-1-2h0m0 3h0m-1 0h0m-1-2h0m-4 1h0m-3 1h0m0 1h0m-1-1h0m-1-3h0m-40 5h0m-1-1h0m-272-2h0m0 2h0m-19-4h0m-1 0h0m-5 1h0m-6 2h0m-31-3h0m-7 4h0m-3 1h0m-1-1h0m-93 1h0m-2-4h0m-30 0h0m-18 3h0m-27 1h0m-247-4h0m3 7h0m239 3h0m6-5h0m2 3h0m1-1h0m3 0h0m19-1h0m16 2h0m20-2h0m17 4h0m1-2h0m82 1h0m1-1h0m1 2h0m30 0h0m7-3h0m2 1h0m6-3h0m0 2h0m1-2h0m2 0h0m30 1h0m263 1h0m1 3h0m3-3h0m2 1h0m2-3h0m5 4h0m43-3h0m2 0h0m0-1h0m2 4h0m5-3h0m142 0h0m0 1h0m2-1h0m2 4h0m217 2h0m-1 3h0m-5 1h0m-7 0h0m-1 0h0m-203-3h0m0 2h0m-141-2h0m0-1h0m-5-1h0m0 5h0m-3-5h0m-43 4h0m-2-1h0m-1-2h0m-2 0h0m-1 2h0m-2 2h0m0-1h0m-1-2h0m-1 2h0m-1-3h0m-2 2h0m-1-3h0m-5 1h0m-1 2h0m-2-1h0m-1 2h0m-1-4h0m-2 5h0m-2-5h0m-6 5h0m-242 0h0m-1-3h0m-51-2h0m-3 0h0m-5 2h0m-29-1h0m-5 2h0m-1 2h0m-1-1h0m-92-1h0m-35 2h0m-17-4h0m-3 1h0m-1 2h0m-19-2h0m-225 1h0m4 6h0m222 0h0m7 1h0m19 1h0m7-4h0m18-1h0m11 1h0m4 0h0m0 4h0m2-5h0m3 5h0m81 0h0m9-2h0m0-3h0m1 1h0m40 3h0m1 1h0m1-4h0m57 3h0m3-1h0m228 1h0m2-1h0m5 0h0m1 1h0m0-2h0m1 3h0m2-4h0m0 2h0m0 1h0m1-3h0m1 2h0m1 2h0m1-1h0m5-2h0m2 3h0m1-1h0m1-3h0m0 4h0m2-1h0m0-1h0m1 0h0m0 1h0m2 0h0m1-3h0m3-1h0m0 2h0m1-2h0m1 4h0m0 1h0m7-2h0m1-1h0m1-2h0m4 0h0m0 4h0m44-4h0m0 4h0m1-2h0m2 2h0m0 1h0m146-5h0m1 2h0m4 0h0m184 2h0m2-2h0m-14 6h0m-4 2h0m-4 1h0m-2 0h0m-160 0h0m-154-5h0m-43 2h0m-2-1h0m-2-1h0m-3 3h0m-1 1h0m-1 1h0m0-3h0m-1 1h0m-2-2h0m-2 0h0m0 2h0m-1-3h0m0 2h0m-1 2h0m-1 1h0m-2 0h0m0-1h0m-4-2h0m-1 0h0m0 2h0m-1 0h0m0-3h0m-2 1h0m-4 1h0m-2-2h0m-2 1h0m0 3h0m-1-5h0m0 5h0m-4-5h0m-1 2h0m-2-2h0m0 2h0m-1 1h0m0-3h0m-1 2h0m-1 1h0m-1 2h0m0-2h0m-2-3h0m-2 5h0m0-3h0m-1 1h0m-1-1h0m0 2h0m-1-2h0m-1 3h0m-7 0h0m-214 0h0m-4-4h0m-59 3h0m-1-2h0m-54 2h0m-3 1h0m-1 0h0m-39-3h0m-28-1h0m-31 0h0m-8-1h0m-10 5h0m-3-2h0m-2-2h0m-2 2h0m-13-2h0m-230 0h0m7 8h0m228 2h0m14-4h0m1 4h0m11-1h0m14-2h0m6 2h0m8-1h0m9 1h0m12 0h0m4-3h0m4-1h0m34 5h0m3 0h0m1-1h0m3-2h0m65 3h0m1-4h0m1 0h0m0 4h0m0-5h0m2 3h0m58-2h0m1 2h0m3 2h0m205 0h0m1-3h0m0 2h0m8-1h0m1-1h0m3-2h0m0 4h0m8-3h0m1 2h0m0-3h0m4 5h0m0-5h0m3 2h0m3 3h0m5-2h0m1 1h0m3 1h0m5-4h0m2 4h0m0-3h0m1 3h0m0-1h0m3-3h0m0 3h0m1-1h0m0 2h0m12-5h0m1 5h0m1-2h0m0 2h0m1-5h0m0 2h0m1 0h0m4-1h0m1 4h0m2-1h0m190-3h0m142 4h0m2-1h0m8-4h0m-28 11h0m-4 0h0m-110 0h0m-6-3h0m-1-2h0m-189 5h0m-1-2h0m-1-2h0m-4 4h0m-1-4h0m-1-1h0m0 4h0m0-1h0m-8-3h0m0 1h0m-5 2h0m-3-3h0m0 2h0m-2 3h0m-2-5h0m0 4h0m0-1h0m0 2h0m-2-4h0m-4 3h0m0-1h0m-7 2h0m0-2h0m-6 0h0m-1 1h0m-1-4h0m-1 1h0m0 2h0m-7-3h0m0 4h0m-3-3h0m0 4h0m-1-5h0m-1 2h0m-3 3h0m-2-1h0m-1-1h0m-2 2h0m-6-5h0m-1 4h0m-1 1h0m-1-3h0m-1 2h0m-2 1h0m0-1h0m-203 1h0m-61-1h0m-2-4h0m-76 0h0m-3 3h0m-3 1h0m-9-3h0m-25 4h0m-2-3h0m-1-2h0m-36 5h0m-10 0h0m-11-1h0m-5 1h0m-3-3h0m-234 2h0m5 7h0m217-2h0m38 2h0m22-2h0m9-1h0m24 3h0m13-3h0m1-1h0m1 0h0m1 1h0m1-2h0m87 0h0m1 3h0m3 1h0m48 0h0m10-4h0m209 0h0m0 4h0m4 0h0m1 1h0m0-5h0m0 4h0m1-3h0m1 0h0m4 1h0m0 2h0m4-1h0m1 1h0m0-1h0m4-2h0m1 3h0m2-1h0m3-1h0m2-2h0m2 4h0m2-3h0m1 2h0m1 0h0m0 1h0m1-3h0m0-1h0m1 1h0m0 1h0m1-2h0m4 3h0m1 1h0m1 0h0m1-2h0m4-2h0m4 1h0m4-1h0m4 2h0m1 1h0m1-2h0m1 1h0m9 3h0m1-2h0m2-3h0m1 3h0m193 0h0m101 1h0m9-3h0m4-1h0m6 0h0m-28 7h0m-3 2h0m-5 1h0m-76-1h0m-1 1h0m-2 0h0m-193 0h0m-1-3h0m-3 3h0m-2-2h0m-2-2h0m-2 4h0m-1-3h0m-2 1h0m0-2h0m-1 3h0m0 2h0m-1-5h0m-2 2h0m0 3h0m-1-4h0m-2 3h0m-1 1h0m-1-2h0m0 2h0m0-5h0m-5 5h0m-2-3h0m0-1h0m-3-1h0m-2 3h0m-3 0h0m-2-2h0m0 4h0m-3-2h0m-2 1h0m-2-4h0m0 1h0m-1 3h0m-5 0h0m-5-1h0m-1-1h0m0 2h0m-6-2h0m0 2h0m-2-3h0m-5 3h0m-4-3h0m-1 0h0m-2 3h0m-2-1h0m-1-3h0m0 2h0m-5-1h0m-212 0h0m-1 1h0m-2-2h0m-2 2h0m-1-2h0m-6 3h0m0-3h0m-7 2h0m-2 3h0m-4-1h0m-24-2h0m-2-2h0m0 2h0m-101-2h0m-4 0h0m-6 3h0m-17 0h0m-2-3h0m-18 0h0m-5 2h0m-20 0h0m-239 3h0m-3-1h0m218 7h0m4-2h0m20 0h0m5 1h0m5-4h0m37 1h0m4 3h0m8-1h0m3 2h0m1-4h0m1 4h0m7-2h0m103-3h0m2 4h0m1-4h0m2 4h0m7-3h0m0 1h0m2-1h0m2 2h0m1-2h0m3 0h0m2-1h0m246 3h0m1 2h0m0-5h0m1 4h0m4-2h0m6-2h0m0 4h0m2 1h0m5 0h0m0-1h0m1 1h0m2-2h0m1-2h0m0-1h0m0 2h0m3-1h0m0-1h0m2 3h0m1 0h0m3 2h0m0-1h0m2-2h0m1-1h0m0 1h0m1 2h0m2 1h0m0-1h0m1-4h0m1 0h0m2 3h0m0 2h0m1 0h0m1 0h0m2-2h0m0-1h0m1 1h0m1 2h0m13-2h0m1-3h0m3 5h0m2-5h0m1 0h0m1 4h0m1-4h0m2 0h0m0 4h0m2 1h0m1-2h0m0-2h0m3 3h0m0-1h0m2 2h0m1-2h0m4 2h0m258-4h0m-18 8h0m-3-1h0m-2 1h0m-3 2h0m-33-1h0m-4-4h0m-2 0h0m-190 5h0m-2-3h0m0-1h0m-1 1h0m0 2h0m-2-4h0m-2 4h0m-2-2h0m-4 2h0m0-3h0m0 2h0m-2-3h0m-1 5h0m-2-1h0m0-2h0m-1 3h0m-3-1h0m-1-1h0m0-1h0m-1-1h0m-1 3h0m-1 0h0m-1-3h0m0 2h0m-1-1h0m-4-1h0m-3-1h0m-3 1h0m-1 0h0m-2 4h0m-2 0h0m-4-1h0m-1-3h0m-1 2h0m-1 1h0m0-3h0m-1 3h0m-2-1h0m0 2h0m-1-4h0m-1-1h0m-2 3h0m0 2h0m-3-1h0m-1 1h0m0-1h0m-1 0h0m0-3h0m-3-1h0m-6 3h0m-1-1h0m0 2h0m-1-3h0m0 4h0m-2-5h0m0 3h0m0 2h0m-1-3h0m-1 0h0m0 2h0m-2-4h0m0 5h0m-2-3h0m-1-1h0m-2 2h0m-378-3h0m-15 2h0m-1-2h0m-7 3h0m-6-2h0m-17 4h0m-28-3h0m-228 0h0m3 5h0m221-1h0m18 3h0m57-3h0m0 1h0m385 0h0m0 2h0m1 0h0m2-1h0m1 0h0m3 3h0m1-4h0m3 4h0m0-3h0m0 2h0m1-2h0m1 3h0m3-2h0m1-1h0m0-1h0m0 2h0m2-3h0m5 5h0m0-5h0m4 2h0m1-1h0m1 4h0m0-2h0m1-2h0m2 2h0m0-3h0m2 1h0m1-1h0m1 2h0m2-2h0m0 4h0m5-4h0m1 0h0m3 5h0m2 0h0m3 0h0m1-3h0m1 0h0m0 2h0m1-4h0m3 4h0m1-2h0m0 1h0m2 2h0m1-4h0m4 2h0m3-3h0m3 4h0m1-2h0m1-1h0m1 1h0m2 3h0m4-3h0m194 1h0m2 2h0m0-3h0m11 3h0m14-4h0m-17 5h0m-6 4h0m-1-3h0m-1 2h0m-3 2h0m-187-1h0m-5-4h0m-1 2h0m-3-2h0m-2 1h0m0-1h0m-3 3h0m0-3h0m-1 1h0m0 2h0m-1 1h0m-2-1h0m-1 0h0m-5 2h0m-1-5h0m-1 4h0m-2-3h0m-3 2h0m-1 2h0m-2-3h0m-2 1h0m-1 0h0m-6 0h0m0 1h0m-1-2h0m-2-2h0m-2 1h0m-1-1h0m-1 3h0m-1-1h0m-2 2h0m-2 0h0m-2 1h0m-1 0h0m-1-2h0m-1 2h0m-1-3h0m-4 0h0m-4 2h0m-2 1h0m-2-1h0m-3-3h0m-1 3h0m0-2h0m-1 3h0m-1 0h0m0-5h0m0 4h0m-1-2h0m0 3h0m-3-2h0m-1-3h0m-1 1h0m-380 0h0m-25-1h0m-279 0h0m244 11h0m3-1h0m4-2h0m55 1h0m381-2h0m1 2h0m2-3h0m3 5h0m1-4h0m1 1h0m2 0h0m0 2h0m0-3h0m2 3h0m2-4h0m3 5h0m1-1h0m0 1h0m1-5h0m3 4h0m1-4h0m0 2h0m0-1h0m2 0h0m4-1h0m1 1h0m3 1h0m1-2h0m3 3h0m2 1h0m2-1h0m0-1h0m2-1h0m0-1h0m1 1h0m1 0h0m1 0h0m0 2h0m1 1h0m2 0h0m1 0h0m5 1h0m0-1h0m2-1h0m3-2h0m2-1h0m2 4h0m1 0h0m9-1h0m3-3h0m1 4h0m1-1h0m1 2h0m1-5h0m0 2h0m1 3h0m2 0h0m2-2h0m172 0h0m10 0h0m0 1h0m1-2h0m-8 5h0m-2 2h0m-1 1h0m-170-2h0m0 2h0m0-3h0m0 2h0m-3 2h0m-2 0h0m-1 0h0m-5-2h0m0-1h0m-1 1h0m0-1h0m-3 1h0m-2 0h0m0-3h0m-1 5h0m0-5h0m-2 0h0m-1 3h0m-1 1h0m-1-1h0m-1-3h0m0 2h0m-2-2h0m-2 0h0m-1 3h0m-1-1h0m-2-2h0m-1 0h0m-1 3h0m-3 1h0m-4-4h0m-1 2h0m-4-2h0m0 2h0m-3 2h0m-1-2h0m-1 0h0m0 3h0m-2 0h0m-1-1h0m-2-4h0m-2 1h0m-2 1h0m-1 3h0m-1 0h0m-2-3h0m-2-2h0m-2 3h0m-2 0h0m-1 2h0m-1-5h0m-1 3h0m-2 1h0m0-3h0m-3-1h0m0 4h0m-2-4h0m-1 2h0m-2-2h0m-381 5h0m-44-3h0m-259-2h0m4 7h0m4 2h0m238 2h0m2-4h0m2 0h0m4-1h0m52 2h0m2 3h0m378-5h0m3 4h0m2-4h0m1 0h0m1 0h0m2 5h0m1-5h0m1 2h0m1 0h0m4 2h0m2-1h0m1 0h0m3-2h0m1 4h0m2-5h0m1 4h0m1-3h0m2-1h0m3 4h0m0-1h0m1-2h0m2-1h0m1 2h0m0 1h0m2-3h0m1 3h0m2-3h0m4 3h0m0 1h0m3 0h0m0 1h0m2-2h0m2-2h0m4-1h0m1 0h0m0 2h0m6-1h0m2 4h0m2-3h0m5-1h0m1 1h0m0 2h0m1-3h0m1 2h0m0-1h0m1-2h0m4 1h0m3 1h0m1 1h0m0-3h0m1 4h0m0-1h0m152 0h0m7 2h0m2-4h0m-7 6h0m-4 1h0m0-1h0m-1 4h0m0-1h0m-2 1h0m-145-4h0m-2 2h0m0-3h0m0 2h0m-1 0h0m-1 2h0m-1 0h0m-2-3h0m-1 2h0m0 1h0m-1 1h0m-1 0h0m-5 0h0m-1-4h0m-3 0h0m0 4h0m-3-1h0m-2-4h0m0 2h0m-1 0h0m0 2h0m-3 0h0m-3-2h0m-2 3h0m-1-2h0m0-1h0m-1 3h0m-2 0h0m-1-5h0m0 2h0m-1 0h0m0 1h0m-1 0h0m-1-1h0m-1 2h0m-1-4h0m-2 1h0m-5 0h0m-4 3h0m-1-2h0m-2 0h0m-3-2h0m-2 1h0m0 2h0m-1 0h0m0 2h0m-1-1h0m0 1h0m-1 0h0m-4-2h0m-1-3h0m-2 1h0m-4 2h0m-1 2h0m-3-4h0m0-1h0m-2 4h0m-378 1h0m-3-1h0m-62-1h0m-2-3h0m-235 5h0m4 6h0m295-2h0m2-2h0m1 3h0m1 1h0m383 0h0m1-3h0m3 1h0m1 0h0m2-3h0m2 3h0m0-2h0m1 0h0m0 1h0m1 0h0m1 0h0m3 0h0m0 1h0m1 1h0m1 0h0m1-4h0m3 2h0m0 2h0m1-4h0m3 4h0m6 1h0m0-1h0m5-3h0m1 3h0m1 0h0m4 0h0m4-2h0m2 0h0m2-1h0m3 2h0m3 1h0m1-2h0m1 2h0m1-4h0m0 4h0m1-3h0m0 2h0m1-2h0m3 0h0m1 1h0m2-1h0m7 4h0m1-4h0m5-1h0m1 3h0m1 0h0m2 1h0m131-1h0m1-1h0m2-1h0m0-1h0m-5 10h0m-1-4h0m-125 5h0m-4-3h0m0-1h0m-2 2h0m-3-3h0m-1 1h0m-1 2h0m-3-2h0m0 4h0m-3-1h0m-1 1h0m-2 0h0m0-5h0m-2 3h0m-3 0h0m-3 2h0m-1-2h0m-2 0h0m0 1h0m-1-1h0m0-1h0m-2 0h0m0-1h0m-1 3h0m-2 0h0m-4-1h0m0-1h0m-1 3h0m-1-5h0m-1 3h0m-11 1h0m-5 1h0m-2-5h0m0 2h0m-1 2h0m-1 1h0m-2-3h0m-3 1h0m-1 2h0m-2-4h0m0 4h0m-1 0h0m-1-4h0m0 2h0m-1 2h0m0-3h0m-1 2h0m0-3h0m-1 0h0m-3 2h0m0 1h0m-3-2h0m-383 3h0m-1-1h0m0-1h0m1 3h0m1 2h0m2 2h0m226 1h0m3-1h0m0-1h0m3 0h0m1 2h0m1-2h0m0 1h0m146-1h0m4 2h0m1-1h0m2 1h0m0-5h0m2 3h0m3-1h0m1-2h0m2 1h0m2 1h0m2 2h0m0-3h0m1 1h0m0-1h0m0 2h0m3-3h0m3 5h0m0-3h0m0 1h0m4 2h0m2-5h0m0 1h0m1-1h0m1 0h0m0 2h0m6 0h0m0 1h0m1 0h0m1 0h0m0 2h0m5-4h0m0 2h0m3-1h0m0 3h0m5-1h0m5 0h0m3-4h0m1 2h0m1-1h0m0 4h0m2-5h0m1 3h0m1 2h0m2-2h0m1-2h0m1 3h0m2-1h0m0 1h0m1 0h0m1-4h0m4 5h0m1-2h0m0-3h0m1 5h0m1-2h0m1 0h0m126 0h0m4 2h0m-3 3h0m0 1h0m-122 2h0m-1-1h0m-4-4h0m-1 3h0m0 2h0m-1-5h0m-3 5h0m-2-4h0m-1 1h0m-2 0h0m-1 3h0m-1-2h0m-1 2h0m-2-5h0m-3 3h0m0 1h0m-1-1h0m-2 2h0m-5-5h0m-2 1h0m-1 3h0m-2-2h0m0 1h0m-1 0h0m-1-1h0m-1 3h0m-1-3h0m-2-1h0m-2-1h0m0 2h0m-1-1h0m-2 3h0m-3-1h0m0 1h0m-1 1h0m0-5h0m-1 2h0m-3 3h0m-1-4h0m0 4h0m-1 0h0m-4-5h0m-1 5h0m-2-4h0m-3 1h0m-2 1h0m-1 2h0m-2-2h0m-1-3h0m-2 1h0m-1 2h0m0 1h0m-1-4h0m-2 2h0m-1 2h0m-1 1h0m-2-3h0m-144 2h0m-2-1h0m-3-1h0m-1-2h0m-1 2h0m-12 0h0m-4 1h0m0-1h0m0-1h0m-2 1h0m-4 1h0m-209 1h0m-3-4h0m0 4h0m4 4h0m4 3h0m189-1h0m5-2h0m3-1h0m1 0h0m0 2h0m1 0h0m0-1h0m3-2h0m2 2h0m10 1h0m0-1h0m15 2h0m2-4h0m2 3h0m3 2h0m142-3h0m1 3h0m1-1h0m1-4h0m6 4h0m0 1h0m2-1h0m1-4h0m2 5h0m1 0h0m2-1h0m0-3h0m5 1h0m2 2h0m1 0h0m0-1h0m2 1h0m1-1h0m1 1h0m3 0h0m1-2h0m0-1h0m1 1h0m4-1h0m2 1h0m0 3h0m2-1h0m0-3h0m5 2h0m0 2h0m1-5h0m3 0h0m1 0h0m1 2h0m5 0h0m2 3h0m4-5h0m3 4h0m1-2h0m0 1h0m1-1h0m3 0h0m2 3h0m9-2h0m3 2h0m124-3h0m8 9h0m-2 0h0m-3-1h0m0 1h0m-125-1h0m-3-2h0m-2 1h0m0-3h0m-1 0h0m-3 3h0m0 2h0m-1 0h0m-1 0h0m-1-1h0m-1-2h0m-4 2h0m-1-4h0m-1 1h0m-1 3h0m-3-3h0m-1 4h0m-1 0h0m-3 0h0m-1 0h0m-2-2h0m-1 2h0m-1-3h0m-1 2h0m-1 0h0m-3 1h0m0-5h0m-3 3h0m-1 0h0m-1-2h0m0 2h0m-4 1h0m-1-3h0m-2 4h0m-2-1h0m-1-3h0m-1-1h0m-1 2h0m-2 3h0m-1-3h0m0 1h0m-1-1h0m-6 1h0m0-3h0m-3 0h0m-1 5h0m0-1h0m-1-2h0m-2 1h0m-1-1h0m-1 0h0m-2-2h0m-3 1h0m-2 2h0m-1 0h0m-1 0h0m0 2h0m0-5h0m-1 5h0m0-3h0m-1 1h0m-1-2h0m0 3h0m-143-2h0m0 2h0m0-3h0m0-1h0m-6 5h0m-3-3h0m-7 1h0m-4 0h0m-4-2h0m0-1h0m-5 3h0m-1 0h0m-2-2h0m-4 1h0m-1-1h0m-6 2h0m-1-3h0m-2 4h0m-2 0h0m-1-4h0m0 2h0m-4-1h0m-3 3h0m-182 0h0m-1-3h0m-295 7h0m300-1h0m177-1h0m0 4h0m6-4h0m1 4h0m5-3h0m9 2h0m2-3h0m10 1h0m0 1h0m1-1h0m8 1h0m3 1h0m5 0h0m11 2h0m3-3h0m142 2h0m2 0h0m1-3h0m2 0h0m1 3h0m0 1h0m6-3h0m0 3h0m1-1h0m7-1h0m4-3h0m2 0h0m1 1h0m1-1h0m2 0h0m3 5h0m7-1h0m0-2h0m2 0h0m1-1h0m0 2h0m0 2h0m2-4h0m0 2h0m1-2h0m1 4h0m1-5h0m1 2h0m0-1h0m1 2h0m2 0h0m0 2h0m6 0h0m3-2h0m0-3h0m2 0h0m5 1h0m143 2h0m1 6h0m-1 1h0m-157-2h0m-2-2h0m0 4h0m-1 0h0m0-3h0m-13-1h0m-1 5h0m-1-1h0m-1-2h0m-1 3h0m0-4h0m-2 4h0m0-1h0m-2-4h0m-1 0h0m-2 0h0m0 2h0m-3 1h0m-2-1h0m-1-1h0m0-1h0m-2 1h0m-3 1h0m-2-1h0m-2 1h0m-4 1h0m0-3h0m-1 5h0m0-5h0m0 2h0m-2 3h0m-1 0h0m-2-5h0m-2 0h0m-136 1h0m-3 3h0m-2-1h0m-2-2h0m-1-1h0m-6 5h0m-3-2h0m-13 0h0m-2-1h0m-1 2h0m-1 1h0m-15-2h0m-2 1h0m-6 1h0m-2 0h0m-1-2h0m-2-3h0m-1 3h0m-177-1h0m-4-1h0m-300 3h0m304 2h0m5 4h0m171-4h0m4 0h0m2 5h0m4 0h0m9-1h0m2 0h0m1-4h0m5 2h0m1 1h0m0-1h0m1 1h0m1 2h0m1-5h0m0 1h0m9 4h0m3-2h0m2-3h0m5 5h0m11-4h0m145-1h0m2 1h0m1 2h0m1 0h0m2 2h0m5-3h0m1 0h0m2-1h0m0 4h0m4-1h0m1-4h0m0 2h0m1 2h0m2-2h0m3 1h0m0-1h0m1 2h0m2 1h0m1 0h0m2-4h0m5-1h0m2 1h0m0 2h0m3-3h0m4 2h0m163-1h0m1 0h0m2 1h0m1 2h0m2 3h0m-3 0h0m-179-1h0m-1 2h0m-4-2h0m-4 3h0m-7-2h0m-3-1h0m-2 2h0m-2-1h0m0 2h0m-3 2h0m0-5h0m-2 1h0m0 2h0m0 1h0m-2-3h0m-1-1h0m-159 2h0m-6 2h0m-5-4h0m-6 2h0m-2 2h0m-2-3h0m-3-1h0m0 4h0m-4 1h0m-2-2h0m-1 2h0m-4-2h0m-1 2h0m-2-1h0m-180 1h0m-3-4h0m6 8h0m183-1h0m2-1h0m1 0h0m1-1h0m1 3h0m0 2h0m1-3h0m2 0h0m4 3h0m6-5h0m2 0h0m1 0h0m173 0h0m3 1h0m3 1h0m1 3h0m1-3h0m1 3h0m0-3h0m5 0h0m1-1h0m0-1h0m3 0h0m190 5h0m3-2h0m0-3h0m4 2h0m-1 4h0m-11 5h0m-195-5h0m-1 5h0m0-4h0m-1-1h0m-1 2h0m-3-1h0m-1 0h0m-194 1h0m-28 0h0m-151 2h0m-302 1h0m-2-3h0m305 9h0m4-1h0m152-2h0m189 3h0m4 0h0m4-2h0m7 2h0m1-4h0m13 2h0m193 1h0m2-3h0m0 2h0m1 0h0m16 1h0m1 0h0m5-3h0m0 4h0m1-2h0m4-3h0m-14 11h0m-5-1h0m-16-4h0m-1 1h0m-175 3h0m-2 1h0m-10-2h0m-15 1h0m-6-2h0m-2-1h0m-6 4h0m-3-1h0m-2-2h0m-176-1h0m-158 2h0m-2 2h0m-2-4h0m-299 1h0m0-2h0m1 6h0m304 5h0m92-2h0m214 1h0m6-2h0m9 3h0m3-5h0m3 3h0m6 2h0m9-4h0m15 4h0m15-3h0m1 3h0m163 0h0m2 0h0m1 0h0m8-5h0m2 3h0m12 0h0m2 1h0m1-2h0m0 2h0m1-1h0m3-2h0m3-1h0m-12 8h0m-1-1h0m-4 4h0m-6 0h0m-12-5h0m-10 5h0m-149-2h0m-1 2h0m-4 0h0m-4-5h0m-3 0h0m-6 1h0m-10 3h0m-4-3h0m-5 1h0m-9 2h0m-2-3h0m-10 4h0m-4-4h0m-12 2h0m-137 0h0m-34-2h0m-42 2h0m-84 2h0m-5-5h0m-298 8h0m301-2h0m3 2h0m0 1h0m1-1h0m136 1h0m25 0h0m124 1h0m1-1h0m4-3h0m2 3h0m4 2h0m1-5h0m1 1h0m10 0h0m14 2h0m1-1h0m2 0h0m3 1h0m2-2h0m1 2h0m14-3h0m2 4h0m16-1h0m2-2h0m1 0h0m142 4h0m2-2h0m5-1h0m1-1h0m3-1h0m1 0h0m14 2h0m0 3h0m2 0h0m3-4h0m0-1h0m2 1h0m-10 6h0m-3 3h0m-3-1h0m0 1h0m-2 0h0m-20 0h0m-2 0h0m-121-2h0m-4 2h0m-2 0h0m-6-3h0m-1 0h0m-1 2h0m-1-3h0m-3 5h0m-4-1h0m-1 1h0m-16-2h0m-1-3h0m-1 0h0m-4 4h0m0-3h0m-8 4h0m-6-4h0m-6 4h0m-3-4h0m-4 1h0m-11-2h0m-2 1h0m-1 0h0m-3 4h0m0-5h0m-138 5h0m-56-1h0m-8-1h0m-10-3h0m-379 4h0m1 4h0m303 0h0m6 3h0m102-5h0m53 0h0m133 0h0m19 0h0m2 0h0m0 1h0m10 0h0m5-1h0m7 3h0m1-2h0m2 1h0m2 0h0m11 2h0m3-2h0m1-1h0m1-1h0m0 4h0m123 0h0m7-2h0m2 1h0m18 2h0m1-2h0m1 1h0m2-1h0m1-2h0m1-1h0m0 4h0m2-3h0m-11 8h0m-2-1h0m-16-2h0m-5 3h0m-2-2h0m-1 1h0m-1 3h0m-3-1h0m-122-2h0m-7 0h0m0 3h0m-5-2h0m-8 1h0m-8-1h0m-1-1h0m-8 3h0m-10-1h0m-2-1h0m-12 1h0m0-3h0m-124-1h0m-172 4h0m-4 0h0m-1 1h0m-2-4h0m-1 3h0m-5 1h0m-14 6h0m5-1h0m1 1h0m4 0h0m2-4h0m2 2h0m1 1h0m1-3h0m2 0h0m3 4h0m2-2h0m1 2h0m2-5h0m1 5h0m2-4h0m308 2h0m1-3h0m1 0h0m16 4h0m4-1h0m5 1h0m4-2h0m1 1h0m0-1h0m129 3h0m0-2h0m3-2h0m20 4h0m4-2h0m1-3h0m1 0h0m2 0h0m-9 6h0m-2 3h0m-3 2h0m-3-1h0m0-1h0m-2 2h0m-16-4h0m-3 4h0m-9 0h0m-124-3h0m-1-1h0m-3 0h0m-2-1h0m-1 0h0m-13 3h0m-1-2h0m-1 3h0m-4 0h0m-3-2h0m0 3h0m-2 0h0m-154 0h0m-8-1h0m-44-4h0m-85 0h0m-3 4h0m0 1h0m-1-5h0m0 4h0m-1-1h0m-2 1h0m-1-4h0m-1 1h0m-8 4h0m0-5h0m-2 0h0m-3 0h0m-1 5h0m-1-4h0m-9-1h0m-4 1h0m0 1h0m-255 5h0m2 3h0m241-1h0m5 1h0m0-3h0m1 3h0m1 0h0m3-4h0m1 1h0m2-1h0m2 1h0m0 2h0m7 0h0m1-1h0m1 3h0m1 0h0m1-5h0m3 3h0m1 0h0m5 0h0m4-1h0m1 1h0m3-1h0m1-1h0m1 4h0m2-3h0m0 2h0m2-3h0m2-1h0m1 4h0m2-1h0m99 2h0m191-3h0m0 2h0m3-4h0m2 4h0m7-4h0m136 4h0m7-4h0m1 0h0m12 3h0m1 2h0m6-4h0m2 0h0m-6 5h0m-3 2h0m-2-1h0m-3 1h0m-1 1h0m0 2h0m-18-3h0m-1 1h0m-2-1h0m-3 0h0m-2 3h0m-134-5h0m-199 0h0m-86 5h0m-2-3h0m0 2h0m-1-4h0m0 5h0m-1 0h0m-2-4h0m-2-1h0m-2 5h0m-1-1h0m-1 0h0m0-3h0m-1 2h0m-1 2h0m-1-5h0m0 4h0m-3-2h0m-2 0h0m-2 0h0m0 3h0m-1-2h0m0 2h0m-4-5h0m0 2h0m-6 1h0m-1 1h0m-1-1h0m-9 0h0m0-1h0m0 2h0m0-3h0m-1 4h0m-2-4h0m-2 2h0m-8 0h0m0-1h0m0 2h0m-2-1h0m-1 1h0m-1 1h0m-3 0h0m-1 0h0m-4-1h0m-230 1h0m227 1h0m2 2h0m3 0h0m6-1h0m3 0h0m4 1h0m0 1h0m1-1h0m1-1h0m7-1h0m1 5h0m2-3h0m1 3h0m5-1h0m6-3h0m9 2h0m1 1h0m1-2h0m1 0h0m0 2h0m1-1h0m1-2h0m2 0h0m0 2h0m8 1h0m4-2h0m1-2h0m5 2h0m402 3h0m5-5h0m4 2h0m29-2h0m-16 7h0m-2 2h0m-2 2h0m-16-4h0m-4 0h0m-3-1h0m-1 2h0m-1 1h0m-4 1h0m-387 0h0m-4-4h0m-3 5h0m-1-3h0m0 1h0m-1 0h0m-1-2h0m-3 4h0m-3-2h0m-2-1h0m0 2h0m0-3h0m-5 0h0m-4 1h0m0-1h0m-1 4h0m-8-4h0m-1-1h0m-4 1h0m-1 1h0m0-1h0m-1 3h0m0-3h0m-4 0h0m-1 2h0m-2 2h0m-3-5h0m-3 2h0m-1 3h0m-2-2h0m-3-3h0m-2 0h0m0 2h0m-1 3h0m-2-3h0m-2 2h0m0-3h0m-1 3h0m-2-3h0m0 2h0m-227 3h0m226 2h0m5-1h0m2 0h0m0 2h0m2 1h0m1-3h0m1 2h0m1 0h0m0-2h0m3 3h0m1 0h0m0-1h0m2 1h0m6-3h0m1 4h0m2-4h0m0 1h0m4-1h0m1 2h0m1-3h0m2 2h0m1 1h0m4-3h0m5 2h0m1-2h0m2 0h0m0 4h0m4 1h0m1-2h0m1-3h0m5 1h0m0 1h0m3-1h0m3-1h0m0 4h0m2 0h0m2-2h0m1 0h0m3 0h0m1 1h0m1-1h0m5 0h0m1 2h0m378-4h0m14 5h0m6-1h0m0 1h0m3-1h0m-11 4h0m-2 0h0m-1 0h0m-2 3h0m-16-3h0m-1-2h0m-5 3h0m-358 0h0m-1 1h0m0-2h0m-1-1h0m-2 3h0m-2-2h0m0-1h0m-1 0h0m-4 2h0m-2-2h0m-1 4h0m0-1h0m-1-1h0m-1 0h0m-5-3h0m-5 4h0m-2-2h0m-1 3h0m-9-3h0m-4 1h0m-1 2h0m-2-5h0m-3 5h0m-3-2h0m-1-2h0m-6 0h0m-1-1h0m-4 2h0m0 1h0m-3-1h0m-1-1h0m-2 4h0m-2-3h0m-1-2h0m0 3h0m-6-3h0m-3 1h0m-227 2h0m6 4h0m224-1h0m2 1h0m2 3h0m0-3h0m0-1h0m1 3h0m1-1h0m2-1h0m2 1h0m4-2h0m1 0h0m2 3h0m3 2h0m1-2h0m4-1h0m12 1h0m6-3h0m3 4h0m2-3h0m0-1h0m3 5h0m2 0h0m2-5h0m1 3h0m1 2h0m0-5h0m2 1h0m3 1h0m0 3h0m1-3h0m1 3h0m0-4h0m0 2h0m1-1h0m4 3h0m5-3h0m3-2h0m3 0h0m1 0h0m0 1h0m1 3h0m1 1h0m341-1h0m0 1h0m2-2h0m22 1h0m3-2h0m3-2h0m1 3h0m5-2h0m1-1h0m3 0h0m-22 10h0m-3-1h0m-11-2h0m-6 0h0m-2 2h0m-2-1h0m-1 2h0m-326 0h0m-2-1h0m0 2h0m-5-5h0m-2 4h0m-1-4h0m-4 4h0m0 1h0m-1 0h0m-2-5h0m-4 0h0m-5 4h0m0 1h0m-16-1h0m-1 0h0m-2-2h0m0-2h0m-6 0h0m-1 1h0m-5 2h0m-1-3h0m-3 0h0m-10 3h0m0 1h0m-1-3h0m-5 1h0m-2 1h0m-1-2h0m-4 1h0m0 2h0m-230 0h0m-2-2h0m246 9h0m0-5h0m0 4h0m7-2h0m1 2h0m2-4h0m1 0h0m0 2h0m1-1h0m3-1h0m1 4h0m2-2h0m3-1h0m3 2h0m2 0h0m2 0h0m4 2h0m7-3h0m6 0h0m2 1h0m0 1h0m3-4h0m5 4h0m2-3h0m10 4h0m2-3h0m2 0h0m2 3h0m312 0h0m2-1h0m1-3h0m1 1h0m3 0h0m19 3h0m3-1h0m1-3h0m1 1h0m0-2h0m2 1h0m-12 5h0m-3 2h0m-1-1h0m0 2h0m-1 1h0m-21-4h0m0 3h0m-4 2h0m-2 0h0m-295 0h0m-9-3h0m-1 0h0m-1-2h0m-1 1h0m-1 4h0m-2-2h0m0 2h0m-1-4h0m0 4h0m-1-2h0m-1-1h0m-1-2h0m-1 1h0m-2-1h0m-1 1h0m0 2h0m-5-1h0m-3-2h0m-1 0h0m-2 3h0m-3-1h0m-1-1h0m0 2h0m-3 0h0m-1-2h0m-1 1h0m-2 3h0m0-5h0m-4 1h0m0 2h0m-1-1h0m-1 1h0m0 2h0m-7-5h0m-1 5h0m-1-3h0m-2 1h0m-3 2h0m-1-5h0m0 2h0m-2 0h0m0 2h0m-2-3h0m-9 0h0m0 2h0m-2-1h0m-1-1h0m0 2h0m-1 0h0m-1-1h0m-1 1h0m0 2h0m0-5h0m-229 1h0m-175 9h0m406-2h0m0 1h0m6 2h0m5-5h0m1 5h0m1 0h0m2-4h0m5 3h0m3-2h0m0-1h0m1 4h0m3-5h0m1 5h0m0-5h0m1 4h0m7-1h0m1 0h0m0 2h0m4-4h0m2 1h0m0 1h0m1-3h0m1 1h0m3 3h0m1 0h0m1-3h0m3 1h0m0 2h0m0 1h0m1-1h0m0-1h0m2 2h0m2-3h0m1-2h0m3 2h0m2-2h0m1 0h0m2 4h0m2-1h0m1-1h0m1 1h0m0-2h0m1 4h0m1-4h0m5 3h0m6-1h0m1-3h0m3 4h0m1 0h0m279 1h0m2-3h0m1 0h0m2 1h0m1-1h0m1-1h0m1 0h0m16 4h0m1 0h0m3-3h0m0 1h0m1-3h0m4 0h0m-10 7h0m-5 4h0m-3-1h0m-3 1h0m-12-4h0m-2-1h0m-5 5h0m-1-2h0m-1 1h0m-262-1h0m-5 2h0m-1-2h0m-5 2h0m-1-5h0m-2 4h0m-3-1h0m-1 2h0m-1 0h0m-3-1h0m-4-4h0m0 4h0m-2-2h0m-1-1h0m0 2h0m-1-3h0m-6 5h0m0-3h0m0 2h0m-1-1h0m-1-2h0m-1 0h0m0 1h0m-2-2h0m-2 2h0m-2-1h0m-2 2h0m-1-2h0m-1 2h0m-1 0h0m-7-3h0m-2 1h0m0 4h0m-3-2h0m-5 1h0m0-2h0m-4 0h0m0 3h0m-1-1h0m0 1h0m-1 0h0m-2-2h0m-4 2h0m0-3h0m-1 0h0m-1 0h0m-2 3h0m-5-4h0m0-1h0m-4 5h0m-1 0h0m-1-3h0m-1-2h0m5 8h0m2-2h0m1 5h0m0-1h0m8-3h0m4 3h0m4-1h0m3 1h0m1 1h0m1-5h0m3 3h0m1-3h0m0 4h0m1-2h0m0-1h0m0 2h0m1 2h0m2-4h0m5-1h0m0 4h0m1-1h0m1 1h0m0-3h0m6 4h0m0-2h0m1 1h0m6-2h0m1 2h0m0 1h0m4-2h0m1-3h0m0 1h0m1-1h0m3 2h0m1 0h0m0-1h0m2 1h0m2 2h0m1-2h0m1 3h0m4-4h0m0 4h0m1-4h0m3 3h0m1-4h0m2 5h0m1-2h0m1-1h0m6 1h0m2-2h0m5 1h0m250 1h0m2-1h0m2-2h0m17 4h0m1-2h0m5-1h0m-9 5h0m-1 1h0m-2 1h0m0-1h0m-1 2h0m-3 2h0m-2 0h0m-19-2h0m-1 0h0m-3 2h0m-1 0h0m-229 0h0m-1-1h0m-4-3h0m-1 2h0m-1 0h0m-6-1h0m-3 1h0m0 2h0m-2-5h0m-2 5h0m-5-4h0m-4 0h0m-2 0h0m-6 3h0m-3 0h0m0-3h0m-2-1h0m0 1h0m-1 3h0m-1 0h0m-1-4h0m-5 2h0m-1 1h0m-3-2h0m-4 0h0m-2 0h0m-5-1h0m0 2h0m-1-1h0m-1 1h0m0 2h0m0 1h0m-1-1h0m-1 0h0m-1 0h0m-4-1h0m-3-1h0m-4-2h0m-4 4h0m-12-4h0m0 2h0m-231 3h0m-178 4h0m2 2h0m420-1h0m1 1h0m1-1h0m3-4h0m3 0h0m0 2h0m1 2h0m1 0h0m2-3h0m3 4h0m1-3h0m0 2h0m3-4h0m1 3h0m3 1h0m1 0h0m1 1h0m3 0h0m1-5h0m2 5h0m1 0h0m1-2h0m1-2h0m2 1h0m1 3h0m2-1h0m3-3h0m1-1h0m3 3h0m3 2h0m0-1h0m2-3h0m2 4h0m2-5h0m6 5h0m1-2h0m2-1h0m4 1h0m3 1h0m0 1h0m2-4h0m5 2h0m0-3h0m5 0h0m2 0h0m1 5h0m2-1h0m217-1h0m1 0h0m1-1h0m2 3h0m20-2h0m5-1h0m2 1h0m1-2h0m-12 6h0m-1 0h0m-1-1h0m0 4h0m-1-2h0m-3 3h0m-15-3h0m-3-1h0m-2-1h0m0 4h0m-211-3h0m-5 4h0m-1 0h0m0-3h0m-1-2h0m-5 0h0m-8 0h0m-3 0h0m-1 0h0m-5 0h0m0 4h0m-5-3h0m-2 0h0m0 1h0m-1 3h0m-1-4h0m-1 2h0m-3 1h0m-3-1h0m-10-3h0m-1 4h0m-1 1h0m-1-5h0m-1 2h0m-1-2h0m0 2h0m-3 0h0m0 2h0m-4 1h0m0-3h0m-2-1h0m-2 1h0m-2 3h0m0-3h0m-3-2h0m-3 0h0m-2 0h0m-2 0h0m-5 2h0m-3 1h0m-3-2h0m-225 10h0m228-5h0m0 2h0m3-1h0m0 2h0m2-3h0m3 1h0m1-1h0m6 0h0m2 0h0m1 4h0m1-4h0m2 2h0m1-2h0m1 5h0m4-1h0m4 1h0m1-5h0m1 4h0m2 0h0m0-4h0m4 1h0m3 1h0m5-2h0m1 2h0m1 3h0m1-3h0m1 0h0m2-1h0m2 1h0m4 3h0m1-4h0m0 2h0m0 2h0m2-3h0m0 1h0m1 1h0m1-1h0m0 1h0m2 0h0m5 0h0m1-3h0m0 2h0m1 1h0m3-4h0m2 5h0m4-3h0m1-2h0m2 3h0m0-3h0m204 3h0m5-3h0m0 1h0m17 2h0m3-1h0m1 1h0m2-2h0m-8 5h0m-2 0h0m-2 2h0m0 3h0m-7-2h0m-11-3h0m-4 0h0m-2 4h0m0-3h0m-1 2h0m-3 0h0m0 1h0m-1 1h0m-202-3h0m-7 2h0m-2-2h0m-6 1h0m0-2h0m-1 1h0m0 1h0m-1-3h0m-1 1h0m0 4h0m-4 0h0m-3-5h0m-2 1h0m-5-1h0m-1 3h0m-3-2h0m-3 1h0m-2 1h0m-2 2h0m-2-5h0m0 2h0m-10 0h0m-2 2h0m-1-4h0m-1 1h0m-1-1h0m0 2h0m-1-1h0m-2 2h0m-1-2h0m-3 3h0m-2-2h0m-1-1h0m0-1h0m-415 5h0m-1-5h0m188 8h0m231-2h0m1 0h0m2 5h0m2-3h0m7 1h0m2 2h0m1-1h0m3-4h0m1 3h0m2-1h0m3 3h0m3-1h0m1-1h0m1-1h0m1 2h0m1-3h0m1 4h0m1-1h0m1-1h0m2-3h0m3 5h0m0-1h0m3-4h0m1 5h0m2-4h0m0 4h0m2-1h0m1 0h0m5-3h0m0 1h0m2 1h0m0-3h0m1 3h0m2-1h0m7-2h0m201 0h0m0 1h0m6 0h0m10 4h0m3-2h0m2 1h0m2-4h0m2 1h0m1 0h0m-11 6h0m-5 4h0m-21-5h0m0 2h0m-2 0h0m-1 2h0m-198-4h0m-5 1h0m-3 2h0m-1 2h0m0-5h0m-1 5h0m-11-3h0m-1 2h0m-1-2h0m-1-2h0m0 2h0m-1-1h0m-2 1h0m-2-2h0m-3 4h0m-4 1h0m-1-4h0m-2-1h0m-3 3h0m-1-1h0m-3 1h0m-1-1h0m0 1h0m-3-3h0m-231 1h0m-191 0h0m7 10h0m422-3h0m3 0h0m2-2h0m2 4h0m1-2h0m0-1h0m0-1h0m1 1h0m0 2h0m1 1h0m2 0h0m0-1h0m0 2h0m1-3h0m3 0h0m5 1h0m2 2h0m1 0h0m3-4h0m3 1h0m4-2h0m194 4h0m1-1h0m0 2h0m1-3h0m1-1h0m3 1h0m1-1h0m19 3h0m1 1h0m1-3h0m5-2h0m-10 8h0m-3 2h0m-1-2h0m-1 1h0m-1 1h0m-20-3h0m-1 1h0m-1-2h0m-1 2h0m-1 1h0m0 2h0m-1-1h0m-2 1h0m-199-5h0m0 1h0m-3 3h0m-1 0h0m-1-2h0m-3-1h0m0 2h0m0 1h0m-2 0h0m0-3h0m-3-1h0m-1 0h0m0 2h0m-4 2h0m-232-1h0m-189 5h0m425 0h0m2-1h0m0 4h0m198-2h0m3 1h0m7-3h0m0 1h0m17 2h0m1 1h0m-3 1h0m-3 1h0m0-1h0m-3 4h0m-1 1h0m-20-2h0m-1-1h0m-2 2h0m-2 1h0m-1-1h0m-2 0h0m-10 7h0m7-4h0m0 2h0m6-3h0m10 4h0m4 1h0m2-2h0m1 1h0m3-2h0m4 1h0m-14 8h0m-1-4h0m-3 4h0m0-2h0m-16-3h0m-1 1h0m-5 2h0m0-1h0m-2 0h0m-1 2h0m-2-1h0m-590 1h0m202 2h0m379 5h0m3 0h0m1 0h0m1-4h0m4-1h0m20 1h0m4-1h0m-10 7h0m-3 2h0m-3 1h0m-1 1h0m0-3h0m-3 3h0m-15-5h0m-2 5h0m-1-3h0m-4-1h0m0 3h0m-3 1h0m-363 0h0m-1-1h0m5 7h0m355-2h0m1-3h0m1 3h0m17 1h0m0 1h0m4-2h0m9-2h0m-18 9h0m-30 1h0m-520-5h0m383 7h0m0 2h0m130 1h0m4-2h0m0 1h0m16 2h0m3 0h0m2-1h0m0 1h0m3-4h0m0 1h0m4-1h0m3-1h0m-8 6h0m-6 0h0m-3 3h0m-5 2h0m-16-4h0m-1 0h0m-7 1h0m0 2h0m-125-4h0m-1 1h0m-3 2h0m-1 2h0m-181-4h0m-186 1h0m360 5h0m1 3h0m2-3h0m3-1h0m26 3h0m1-2h0m94 4h0m3-1h0m1-2h0m4-1h0m17 3h0m4 0h0m1-2h0m2 0h0m1-2h0m4 0h0m-17 10h0m-4-1h0m0 2h0m-27 0h0m-78 0h0m-3-3h0m0-1h0m0 2h0m-4-3h0m-35 1h0m-1 1h0m-2-2h0m-161 3h0m-188 0h0m-1-3h0m5 11h0m186-5h0m3 1h0m143 4h0m3-3h0m3 0h0m0 2h0m2-3h0m48 1h0m3 1h0m1 1h0m67-3h0m5 1h0m3-1h0m1 1h0m3-2h0m11 4h0m1-1h0m1 0h0m2 1h0m1 0h0m2-1h0m-6 3h0m-3 3h0m0 1h0m-2-2h0m-2 2h0m-3 0h0m-19-2h0m-57 1h0m0 2h0m-3-4h0m-64 2h0m-2 1h0m-2 1h0m-1-1h0m-321 4h0m189 1h0m128 1h0m74-2h0m3 0h0m48-1h0m2-1h0m19 2h0m1 0h0m1 0h0m3-1h0m1-1h0m-13 7h0m-4 3h0m-2 1h0m-22 0h0m-2-2h0m0 1h0m-22 1h0m-3 0h0m-2-1h0m-86-4h0m-7 2h0m-1 3h0m-301 0h0m-1-2h0m194 7h0m100-1h0m3 1h0m1-3h0m100 2h0m1-3h0m12 3h0m1 1h0m1-1h0m2 0h0m6-3h0m1 0h0m17 3h0m-5 4h0m-3 4h0m0-3h0m-2 1h0m-18-2h0m-3 0h0m-5-1h0m-396 5h0m-1 5h0m267 1h0m6-3h0m4-2h0m138 0h0m1 3h0m2-2h0m-155 7h0m-64 1h0m-195 2h0m197 2h0m53 4h0m7-5h0m-14 8h0m-1 3h0m-237-3h0m231 6h0m3-1h0m1 2h0m-10 6h0m-20 0h0m0 2h0m-202-2h0m3 8h0m207-2h0m0 2h0m2-3h0m4-1h0m-8 6h0m-23 16h0m-7 6h0m-2 3h0m-16 9h0m4-2h0m-8 5h0m-4 3h0m-127-3h0m125 7h0m-12 3h0m-107 4h0m0 3h0m99 2h0m-7 5h0m-6 5h0m2-1h0m-10 6h0m-31 21h0m4 0h0m-6 3h0m-12 11h0m2-4h0"/><path stroke="#888888" stroke-width="2" stroke-linecap="square" d="M1448 289h0m453 2h0m-269 13h0m94 3h0m-801 3h0m0 2h0m4 4h0m680 1h0m-3 2h0m-754 9h0m-9 5h0m-13 6h0m111 0h0m629 2h0m1 0h0m-748 3h0m-4 3h0m448 4h0m192-3h0m483 5h0m-186 4h0m-216 0h0m-12 8h0m422 2h0m-189-1h0m-241 1h0m-12 8h0m262 6h0m-482 8h0m674-3h0m8 8h0m-995 0h0m317 4h0m173-2h0m507 2h0m-981 23h0m274 3h0m7 1h0m0-1h0m11-1h0m8 1h0m21 6h0m-32 0h0m-8 1h0m-12-3h0m-3 3h0m-3-2h0m-35 8h0m12-2h0m9-1h0m3-1h0m4 4h0m38-1h0m1 1h0m32 0h0m-52 2h0m-2 4h0m-2-3h0m-40-1h0m-6 4h0m-1-1h0m29 2h0m6 1h0m27 1h0m15 1h0m4 0h0m29 5h0m-28 3h0m-16-1h0m-6 1h0m-22-5h0m-22 0h0m-16 0h0m1 10h0m43-1h0m5-3h0m31 3h0m32-3h0m-31 6h0m-5 1h0m-9 1h0m-12-1h0m-21 0h0m-3 2h0m-12 0h0m-15 1h0m10 7h0m7-3h0m14-1h0m12 2h0m35 1h0m721-4h0m-197 7h0m-522 0h0m-54 0h0m-18-1h0m-200 4h0m-4-2h0m195 6h0m4-1h0m12 2h0m11 2h0m30 0h0m8-2h0m4 2h0m11-4h0m731 1h0m5 7h0m-1-3h0m-734 0h0m-3 1h0m-8-1h0m-15 0h0m-2 1h0m-11 0h0m-4 0h0m-5 1h0m-1 0h0m-3 1h0m-6-1h0m-7 1h0m-2 2h0m-13-3h0m2 4h0m-181 8h0m800 9h0m-119 12h0m124-3h0m215 8h0m-306 4h0m4 0h0m94 0h0m-134 5h0m18 8h0m45 4h0m-711 4h0m676 2h0m31 4h0m14-1h0m-430 13h0m422-5h0m88 2h0m213 5h0m-378-1h0m-355 7h0m453 7h0m-711 3h0m239 1h0m380 5h0m-391 4h0m-7 1h0m119 6h0m12 1h0m8 0h0m9 0h0m347-2h0m81-2h0m212 6h0m-284 0h0m-8 4h0m-19-1h0m-74-2h0m-255 1h0m-1-3h0m0 1h0m-2 2h0m-6 1h0m-1-4h0m-3 1h0m-3 1h0m-5 0h0m-4-2h0m-2 3h0m-5-3h0m-5 4h0m-1-4h0m-3 0h0m-6 1h0m-2 4h0m-6-3h0m-2 3h0m-5 0h0m-13-2h0m-1 1h0m-10 1h0m-294-2h0m208 6h0m4-2h0m70 1h0m0-1h0m7 4h0m2-4h0m0-1h0m1 5h0m2-4h0m2-1h0m1 5h0m2-2h0m2-2h0m1 3h0m7-3h0m0 3h0m8 1h0m12-5h0m9 2h0m1 0h0m7 2h0m5-1h0m14 0h0m0-1h0m1 1h0m3-3h0m1 4h0m2 0h0m1-4h0m0 5h0m5 0h0m364-3h0m286 7h0m-207-3h0m-438 1h0m-5 4h0m-2 0h0m-2-3h0m-6 2h0m0-1h0m-3-3h0m-2 3h0m-1-1h0m-3-1h0m-4 0h0m-2 3h0m-1 0h0m-1-3h0m-2-1h0m-3 5h0m-1-3h0m-1-1h0m-2 3h0m-1-3h0m0 2h0m-1-2h0m-1 2h0m-1-1h0m-1 0h0m-1 0h0m-2-1h0m-3 0h0m-1 3h0m-2-2h0m0-1h0m-4 3h0m-2 1h0m-8-5h0m-1 4h0m-4-1h0m-12 2h0m-1-1h0m-3-3h0m-2 2h0m-2 0h0m-1-2h0m-1 2h0m-3 1h0m-485 2h0m4 1h0m379 4h0m104-3h0m1 0h0m5 0h0m1 1h0m1-1h0m1 0h0m3-1h0m2 2h0m2-3h0m3 5h0m1-3h0m0 2h0m0 1h0m2 0h0m4-4h0m4 0h0m2 1h0m2 3h0m2-5h0m5 2h0m0 3h0m7-1h0m1 0h0m5-3h0m2 0h0m12 0h0m0 1h0m2-2h0m2 2h0m4 1h0m2-2h0m0 1h0m0 3h0m2-3h0m2 3h0m6 0h0m6 0h0m342-2h0m310 4h0m-204 3h0m-445-3h0m-9-1h0m-11 0h0m-5 2h0m-2-1h0m-1-1h0m-20 0h0m-3 0h0m-9 4h0m-2-1h0m-5-2h0m-5-1h0m-4 1h0m-1 0h0m-1 0h0m-1 2h0m-2-2h0m-7-1h0m-2 2h0m-4-2h0m-1 1h0m-465 7h0m128-2h0m214 5h0m4-2h0m5-2h0m865 7h0m-204 1h0m-119-3h0m-557 2h0m-217-1h0m-109 4h0m-6-4h0m107 6h0m178 3h0m2-1h0m35-2h0m530 2h0m4 2h0m27-3h0m132 8h0m-727 0h0m-207 7h0m3-4h0m197 1h0m0 1h0m1-2h0m6 3h0m6 2h0m-3 2h0m-3 0h0m-5-1h0m0 3h0m-8 1h0m-1 6h0m3-1h0m0-3h0m1 2h0m1 2h0m1-2h0m2-2h0m1-1h0m1 4h0m1-4h0m0 1h0m1-1h0m3 2h0m1 1h0m5-2h0m733 7h0m-723 2h0m-6 1h0m-12 0h0m-3-4h0m-3 3h0m-2-4h0m-4 3h0m-6 3h0m0 3h0m5 1h0m15-1h0m2-2h0m1 1h0m4 3h0m2-1h0m1 0h0m5-4h0m2 1h0m4 4h0m720-2h0m-722 4h0m-3 1h0m-11 1h0m-2 0h0m-1 2h0m-1-4h0m-1 0h0m0 2h0m-3 2h0m-2-3h0m-1-1h0m-2 0h0m-5 4h0m-5-5h0m-1 0h0m-11 9h0m6 1h0m1-1h0m2 2h0m2-3h0m0 3h0m5-4h0m1 4h0m1 0h0m8 0h0m0-2h0m1-1h0m1 1h0m6-2h0m3-1h0m1 1h0m2 1h0m228 9h0m-5-2h0m-232-3h0m-9 0h0m-9 4h0m-1-1h0m0 2h0m-4-3h0m-9 2h0m0 3h0m0 4h0m1-5h0m4 4h0m1-1h0m3-2h0m2 0h0m4 4h0m3-2h0m0 2h0m1-2h0m2-1h0m2-1h0m2-1h0m221 5h0m1 0h0m6-3h0m4 3h0m2 0h0m4 0h0m4-2h0m5 0h0m2 7h0m-13-3h0m-2 2h0m-1-1h0m-5 1h0m-5-1h0m0 2h0m-12-1h0m-230 1h0m-3 1h0m-4-5h0m-268 3h0m270 3h0m221 5h0m3-4h0m2 3h0m3-2h0m3-2h0m1 4h0m9 1h0m4-1h0m13-2h0m1 2h0m9 1h0m1-5h0m3 1h0m2-1h0m1 5h0m521 3h0m-520 3h0m-11-4h0m-2 2h0m-4 0h0m-1-3h0m-2 3h0m-2-3h0m-4 3h0m0-1h0m-1 1h0m-1-1h0m-1-1h0m-3 3h0m-4-3h0m-10-1h0m-1 3h0m-2-1h0m-4 0h0m-5 1h0m-1 2h0m0-5h0m-2 0h0m-8 5h0m-252-3h0m-198-1h0m0 1h0m447 4h0m1 4h0m5-4h0m15 0h0m6 0h0m9 1h0m2 3h0m2-4h0m0 4h0m3-1h0m1 1h0m2 1h0m1 0h0m3-1h0m4 0h0m2-3h0m7 2h0m3 0h0m1-1h0m1 1h0m3 0h0m2 1h0m520-4h0m-516 10h0m-3-4h0m-2 0h0m0 2h0m0 3h0m-2-5h0m0 5h0m-9 0h0m-30-4h0m0 4h0m-3-2h0m-4 0h0m-14 2h0m-3 0h0m-3-5h0m0 4h0m-2-4h0m0 1h0m-1 3h0m-441-1h0m448 5h0m3-1h0m7 3h0m4 0h0m2 1h0m2-1h0m27-4h0m11 3h0m14-2h0m5 1h0m0 1h0m520 2h0m-515 6h0m-2 0h0m-3-5h0m-32 5h0m-2-2h0m-3-2h0m-11 0h0m-2 1h0m-2 3h0m0-4h0m-5 1h0m-8 0h0m-6 0h0m-6-2h0m-260 1h0m-270 1h0m-11 7h0m102-3h0m285 2h0m157-2h0m2 5h0m0-5h0m4 3h0m0 2h0m1-5h0m5 1h0m4 0h0m1 1h0m16 1h0m2-3h0m8 4h0m3 1h0m1-1h0m1-3h0m1 1h0m10-2h0m2 3h0m20-1h0m458 6h0m-11 3h0m-446-5h0m-7 1h0m-5 2h0m-9 2h0m-2 0h0m-3 0h0m-1-1h0m-1 0h0m-5 1h0m-7-3h0m-7-2h0m-4 3h0m-8 0h0m-3 2h0m-5-1h0m-1-2h0m-8 2h0m-1 0h0m-1-3h0m-1 1h0m-157-1h0m159 7h0m1-2h0m10 4h0m2 1h0m1-2h0m24-1h0m8 3h0m12 0h0m5-4h0m7-1h0m1 1h0m0-1h0m2 0h0m1 4h0m439 1h0m6-1h0m0 1h0m2-3h0m0 1h0m8 0h0m8 2h0m3 4h0m-3 2h0m-3-5h0m-12 3h0m0 1h0m-1-3h0m0-1h0m-16 3h0m-415 0h0m-17-1h0m0-1h0m-6-1h0m-3 4h0m-5-3h0m-9 2h0m-1-1h0m-7-2h0m-3 1h0m-1 4h0m-2-3h0m-5-2h0m-1 0h0m0 2h0m-9-1h0m-3 0h0m-3-1h0m-5 5h0m-5-5h0m-276 3h0m-1-2h0m0 4h0m-168-5h0m-132 2h0m306 8h0m127 0h0m148-1h0m1 2h0m8 0h0m1 0h0m8 0h0m3-3h0m12 1h0m10-2h0m3 3h0m4-3h0m13 1h0m4-2h0m4 4h0m1-1h0m0 1h0m1-4h0m1 3h0m8 2h0m82-3h0m323 0h0m30 2h0m0-4h0m0 1h0m1 0h0m0-1h0m1 4h0m11 0h0m0 5h0m-5 2h0m0-1h0m-2-1h0m-1-3h0m-2 1h0m0 3h0m-1-3h0m0 1h0m-1-1h0m-1-1h0m-432 5h0m-1-2h0m-2-3h0m0 1h0m-1 3h0m-6 1h0m-7-1h0m-8 0h0m0-3h0m-2 0h0m-4 2h0m-1-1h0m0-1h0m-17 2h0m-14 0h0m-1 2h0m-3-4h0m-7 1h0m-2 1h0m-1 2h0m-2-5h0m0 1h0m-455 1h0m455 7h0m12-1h0m1-1h0m1 3h0m3-1h0m7-3h0m10 4h0m1-1h0m7 2h0m1-1h0m2-3h0m7-1h0m5 3h0m6 0h0m0 2h0m0-1h0m7-4h0m3 1h0m0 1h0m8 3h0m382-3h0m46 1h0m8-2h0m0 2h0m1-1h0m0 1h0m1 2h0m8-5h0m4 5h0m6-1h0m3 6h0m-1-4h0m-6 4h0m-4 1h0m-6 0h0m-1 0h0m0-1h0m-1-2h0m0 3h0m0-5h0m0 1h0m-1 2h0m-1-3h0m-34 5h0m-37-2h0m-279 0h0m-76 2h0m-12 0h0m-2-3h0m-3 1h0m-6-2h0m-1 1h0m0 2h0m-2-1h0m-8 2h0m0-1h0m-5-3h0m-6 3h0m-4 0h0m-4-3h0m-13 3h0m-10 0h0m-3 0h0m-4-2h0m-5 0h0m-265 4h0m5 4h0m261-1h0m3-2h0m1 0h0m11-1h0m2 1h0m0-1h0m6 1h0m14 2h0m2 1h0m1-4h0m1 1h0m12 1h0m1-2h0m10 1h0m1 2h0m1-1h0m6-1h0m1 2h0m5 1h0m4 0h0m5-4h0m0 1h0m2 3h0m75-3h0m352 0h0m1-1h0m0 1h0m2 0h0m0 3h0m1-2h0m6 9h0m-1-1h0m-2-2h0m-1-1h0m0 2h0m0 1h0m-1-4h0m0 1h0m-9 2h0m-422-1h0m-3-2h0m-1 3h0m-4-2h0m-5 1h0m-1-1h0m-4 0h0m-1 4h0m-6-4h0m-1 0h0m0-1h0m-1 3h0m-2-1h0m0 2h0m-6-3h0m-4 1h0m-5-1h0m-1 3h0m-2 0h0m-6-1h0m0-1h0m-1 1h0m-6-2h0m-15 3h0m-3 1h0m-2-2h0m-2 2h0m-2-1h0m-1 0h0m0-3h0m-1 2h0m-3-1h0m-245 9h0m252-5h0m1 5h0m3-4h0m16 0h0m3 1h0m2 2h0m3-3h0m0 4h0m19-1h0m8-4h0m2 0h0m7 0h0m0 4h0m6 1h0m0-3h0m2 2h0m1-2h0m1-1h0m92 3h0m0 1h0m314-5h0m36 3h0m0-3h0m1 3h0m0-2h0m0-1h0m1 4h0m0-1h0m0 2h0m0-4h0m14 4h0m4-1h0m107 1h0m-105 2h0m-16 2h0m-1-3h0m-1 2h0m-1-1h0m-8 4h0m-1-5h0m-21 2h0m-420-1h0m-1 0h0m0 2h0m-14 0h0m-2-3h0m0 1h0m-2 4h0m-3 0h0m-17-4h0m-4-1h0m-7 0h0m-6 1h0m-1 4h0m-247-2h0m-224 7h0m233-4h0m93 0h0m134 2h0m6 1h0m6-1h0m2 3h0m9-1h0m0-3h0m6 1h0m2 0h0m0 2h0m2-1h0m7 2h0m3 0h0m2-3h0m0 2h0m11-4h0m0 3h0m3-2h0m110 1h0m6 3h0m345-5h0m1 3h0m1-3h0m1 2h0m0 2h0m1-4h0m1 4h0m0-1h0m0 2h0m1-3h0m16 0h0m3 9h0m-11-3h0m-5 3h0m-1-4h0m-1 4h0m0-4h0m-5 4h0m-11-5h0m-458 2h0m-1-1h0m-2 0h0m-3 1h0m0 1h0m-2-3h0m-12 3h0m-1 2h0m-25-3h0m-219 0h0m-247 6h0m472-2h0m5 1h0m5 4h0m0-1h0m10-4h0m0 5h0m7-3h0m0 2h0m1-2h0m5-1h0m1 0h0m470 4h0m11-3h0m3-1h0m0 4h0m8-2h0m2 3h0m-1 3h0m-4 2h0m-2-3h0m0 2h0m-2-3h0m-4 1h0m-8 0h0m-22 1h0m-456-3h0m-5 5h0m-11-5h0m-4 0h0m-4 0h0m-2 3h0m-206-3h0m-37 1h0m-233-1h0m-15 1h0m-66 2h0m-4 1h0m-8-1h0m-10 1h0m-17 0h0m356 3h0m44 1h0m201 3h0m4-5h0m2 1h0m0 3h0m6-3h0m464-1h0m39 1h0m1 1h0m0 2h0m1 1h0m1-1h0m0-1h0m0 2h0m7 0h0m12 5h0m0 1h0m-18-4h0m-7 3h0m-344-2h0m-165-1h0m-2 1h0m0 1h0m-201 1h0m-35-2h0m739 4h0m16 3h0m6 2h0m13-4h0m3 3h0m107 5h0m-128-3h0m-347 0h0m-350 8h0m19 1h0m32 0h0m623 2h0m18-4h0m16 2h0m-16 6h0m-2 0h0m0-2h0m-15 0h0m-316 2h0m-2 0h0m-327-1h0m-66 0h0m-165 1h0m-2 7h0m9-2h0m5 3h0m1-5h0m7 4h0m4 0h0m540 0h0m358 0h0m-644 6h0m-246 0h0m-11-4h0m-1 4h0m-12-2h0m-7 5h0m14 1h0m11 0h0m4 0h0m4 0h0m871 2h0m174-3h0m-178 5h0m-13 0h0m-615 0h0m-250 1h0m-4 4h0m-3-1h0m-19 1h0m-4-4h0m-1 5h0m12 0h0m5 1h0m9 3h0m1-4h0m8 0h0m22 1h0m152 3h0m93-3h0m590 2h0m7-2h0m-23 10h0m-811-1h0m-44-1h0m-2-3h0m3 6h0m851 3h0m2-2h0m-10 5h0m-300 5h0m-7 0h0m-2 0h0m-483 0h0m-25-2h0m-2-2h0m-3 3h0m-10-1h0m0-1h0m-7-1h0m-4 1h0m-2-1h0m-2 2h0m-4-1h0m-1 1h0m-4-1h0m-1-1h0m-4 3h0m-3-2h0m-2-2h0m-3 3h0m-2-2h0m-2 0h0m-7 1h0m-1 3h0m0 2h0m5 4h0m11-3h0m3 1h0m24-3h0m1 1h0m2 1h0m12 3h0m9-3h0m1 0h0m3 1h0m501-3h0m1 3h0m3-2h0m468 1h0m8-1h0m-29 8h0m-433 1h0m-3 0h0m-5-2h0m-3 2h0m-501 1h0m-2-3h0m-3-2h0m-5 4h0m-1-1h0m-14-1h0m-1 2h0m-4-2h0m-15 2h0m-16-1h0m-11 2h0m-231-1h0m230 6h0m1-4h0m8 5h0m32-5h0m16 2h0m2 3h0m16-3h0m2-1h0m500-1h0m1 0h0m2 4h0m7-1h0m2 2h0m405 0h0m35-1h0m3 1h0m4-2h0m5 0h0m2-1h0m8 0h0m-27 7h0m-4 1h0m-5 1h0m-4-2h0m-28 2h0m-386 0h0m-5-3h0m-4 3h0m0-2h0m-5 1h0m-38 1h0m-465-4h0m-1-1h0m-15 5h0m-2 0h0m-21-4h0m-18 2h0m0-1h0m-1-1h0m-2 3h0m-10 1h0m-3 0h0m-4 1h0m13 5h0m0-3h0m6 2h0m6 0h0m11-3h0m16 2h0m11 2h0m21-5h0m2 3h0m448-2h0m1 3h0m1-2h0m2 3h0m2-3h0m0 2h0m45-4h0m1 2h0m3-1h0m1-1h0m5 5h0m362 0h0m4 0h0m6-2h0m28 1h0m-11 3h0m-6 1h0m-2 2h0m-26-2h0m-353-1h0m-4 3h0m-2-2h0m-3 3h0m-1-3h0m-2-1h0m-39 4h0m-3-3h0m-2 2h0m-5-1h0m-8-3h0m-2 5h0m-1 0h0m-4-1h0m-3 0h0m-2-2h0m-6 2h0m-319 1h0m-98-1h0m-15-4h0m-14 1h0m-9 1h0m-5 2h0m-20-4h0m-12 0h0m-13 11h0m22-3h0m4 3h0m13 0h0m1-2h0m11-3h0m5 5h0m12-4h0m17 1h0m4 1h0m3-1h0m408 1h0m2-1h0m6-1h0m1-1h0m6 4h0m2 1h0m3-1h0m12 0h0m5-2h0m50 1h0m0-1h0m4-2h0m0 1h0m1-1h0m324 5h0m5 0h0m39-5h0m-17 7h0m-3 1h0m-6-2h0m-1 3h0m-7 1h0m-386 0h0m-1-3h0m-4-1h0m-5 1h0m-2-1h0m-6 3h0m0-1h0m-4-2h0m-12 1h0m-1 3h0m-1 1h0m-3-4h0m-7 0h0m-2 3h0m-3-1h0m-1 1h0m-383-4h0m-6 4h0m-2-2h0m-3 3h0m-2-4h0m-7 4h0m-1-1h0m-12-2h0m-3 0h0m-4 1h0m-1 0h0m-5 1h0m-1 1h0m-2-5h0m0 5h0m-2-3h0m-8 0h0m-1 2h0m-18-2h0m-19 2h0m-7 1h0m3 6h0m8-3h0m10 1h0m9 0h0m5 0h0m1 0h0m1 2h0m14-1h0m5-2h0m2 1h0m3-3h0m0 4h0m3-4h0m1 2h0m4 2h0m4-2h0m2 2h0m8 1h0m7-1h0m11-4h0m370 5h0m5-1h0m2-2h0m2 3h0m2-1h0m2-2h0m1-2h0m1 5h0m4-4h0m3-1h0m1 4h0m13-2h0m1 1h0m5 2h0m11-4h0m1-1h0m7 0h0m1 4h0m2-4h0m11 3h0m1-2h0m1 2h0m0 2h0m362-1h0m3-2h0m8-2h0m-17 6h0m-4 2h0m-1 1h0m-3-1h0m-3-1h0m-8 4h0m-335 0h0m0-2h0m-7 1h0m-2 1h0m-11-5h0m-1 1h0m-9-1h0m-1 3h0m-1-2h0m-8 4h0m-6-2h0m-1-1h0m0 1h0m-3 2h0m-3-4h0m0-1h0m-3 0h0m-5 1h0m-5 3h0m-1-1h0m-3 2h0m-2-2h0m-5-3h0m-274 4h0m-89-3h0m-6 0h0m-22-1h0m-1 4h0m-4-1h0m-2-2h0m0 3h0m0-1h0m-6-2h0m-32 3h0m-2-2h0m-1 3h0m-6 0h0m-11-1h0m-13-1h0m0 1h0m-1-3h0m2 10h0m2-3h0m1 3h0m25-5h0m4 5h0m8 0h0m7 0h0m3-3h0m6 3h0m3-1h0m1-4h0m3 4h0m3-2h0m7-2h0m32 5h0m0-2h0m7-1h0m83 1h0m2 2h0m275-3h0m5-2h0m4 3h0m3 2h0m1-4h0m8 4h0m6-4h0m0 4h0m5-4h0m11 3h0m1-1h0m1-2h0m1 0h0m4 2h0m3-3h0m2 2h0m1 3h0m2 0h0m1-2h0m1-1h0m0 1h0m1 2h0m7-5h0m1 0h0m3 5h0m6-5h0m2 5h0m310-1h0m11-2h0m1-2h0m2 1h0m-24 6h0m-13 0h0m-6 2h0m-280-2h0m0 3h0m-3-1h0m-4-1h0m0 2h0m-1-4h0m-3 5h0m-14-4h0m-2-1h0m-17 3h0m-6-2h0m0 4h0m-1-2h0m-1 1h0m-1-4h0m-1 3h0m-9-3h0m-1 5h0m-1-5h0m-2 0h0m-6 3h0m-1-1h0m-5 3h0m-1-1h0m-388 0h0m-8 1h0m-13-1h0m-22-2h0m-4 1h0m-1 2h0m-5-2h0m-14 2h0m-9-1h0m2 7h0m6-2h0m1 0h0m29-2h0m4 0h0m12-1h0m5 0h0m16 2h0m16 3h0m2-1h0m96-3h0m4 1h0m277-2h0m0 5h0m1-5h0m1 2h0m9 2h0m4-2h0m6 3h0m3-3h0m5 3h0m2-2h0m2 1h0m6-2h0m11-2h0m3 1h0m0-1h0m3 0h0m0 2h0m3 2h0m2-4h0m1 4h0m0 1h0m3-1h0m1-4h0m0 3h0m2 1h0m0 1h0m2-5h0m1 4h0m2 0h0m0-1h0m5 0h0m0 1h0m2-4h0m254 3h0m17-1h0m7 0h0m2-1h0m-277 9h0m-5 0h0m-4-4h0m0 1h0m-2 2h0m-3 2h0m-1-3h0m-2 0h0m-4-2h0m0 5h0m-2-5h0m0 4h0m-2-4h0m0 3h0m-4 2h0m-15-5h0m-1 1h0m0 2h0m-16-1h0m-7 1h0m-2-3h0m-2 3h0m-2-3h0m-5 1h0m-1 4h0m0-1h0m-1-3h0m0 2h0m-1-2h0m-2 0h0m-377 1h0m-13-2h0m-3 5h0m-24-5h0m-5 2h0m-7 2h0m-2-4h0m-8 2h0m-4-2h0m-1 4h0m-1-3h0m-3 2h0m-2-1h0m-5 1h0m-1-2h0m-8 2h0m-6 2h0m-2 0h0m0-1h0m0 5h0m24 1h0m2-4h0m1 2h0m9 0h0m9 2h0m2 1h0m5-4h0m5 3h0m3 1h0m8-3h0m1 3h0m1-3h0m12 1h0m3-1h0m2 1h0m5-2h0m112 4h0m274-1h0m15-2h0m2-2h0m0 3h0m2-2h0m0-1h0m1 5h0m6-5h0m0 1h0m2-1h0m26 1h0m1 2h0m1 1h0m3 0h0m2 0h0m4-4h0m2 0h0m10 0h0m4 4h0m218-4h0m-214 8h0m-3 2h0m-1-3h0m-1 3h0m0-4h0m-8 0h0m-3 5h0m-2-4h0m-4 0h0m-6 3h0m-6-1h0m-4-1h0m-11 2h0m-6-3h0m-3 1h0m-5 0h0m-2 0h0m-3 0h0m-10-1h0m0 3h0m-3-2h0m-2-2h0m-394 1h0m-7 4h0m-10-3h0m-30-2h0m-5 4h0m-10 0h0m-3-2h0m-7 2h0m-215-2h0m221 4h0m3 3h0m1 0h0m8-3h0m9 3h0m0-1h0m167-2h0m278 3h0m2 1h0m4-4h0m0 3h0m14 2h0m0-4h0m7 0h0m3 0h0m1 2h0m4 2h0m2-1h0m12 1h0m0-4h0m3-1h0m2 1h0m1 2h0m2-3h0m6 1h0m5 0h0m3 3h0m3-2h0m4-2h0m1 2h0m2 3h0m-4 5h0m-7 0h0m-7 1h0m0-1h0m-3-1h0m-7-2h0m-1 4h0m-1-5h0m-2 5h0m-2-3h0m-2 3h0m-6-2h0m0 2h0m-3-4h0m-1 2h0m-13 2h0m-1-5h0m0 5h0m-4-3h0m-1-2h0m-5 1h0m-1 0h0m-5 1h0m-276 1h0m-144 2h0m-10 0h0m-13 0h0m-1-1h0m-10-4h0m-8 1h0m-222 0h0m252 7h0m10 1h0m148-2h0m3 3h0m271 0h0m6-2h0m1-2h0m2 4h0m1-3h0m6 0h0m0 1h0m1 2h0m2 0h0m1 1h0m8-3h0m6 0h0m3-2h0m0 2h0m3 0h0m1-2h0m1 3h0m3-2h0m1 4h0m0-5h0m0 2h0m1 0h0m0-2h0m0 3h0m11 0h0m3 2h0m6-4h0m0 4h0m1-2h0m1-3h0m1 0h0m0 3h0m2 1h0m2-2h0m10-2h0m4 9h0m-5 0h0m-4-3h0m-2 1h0m-5-1h0m-1 0h0m-8 5h0m-3-5h0m-5 4h0m-3-4h0m-4 0h0m-2 0h0m-11 5h0m-4-1h0m-4-3h0m-2-1h0m0 2h0m-1 0h0m-1 1h0m-3 0h0m-4-3h0m-283 3h0m-3-1h0m-156 0h0m-7 2h0m-2-1h0m-243 0h0m413 8h0m1-3h0m268-2h0m0 2h0m8 2h0m3-2h0m5 0h0m9 2h0m2-3h0m2-1h0m0 4h0m4-3h0m5 2h0m14 1h0m5 1h0m2 0h0m2-2h0m4 2h0m1-1h0m3-3h0m3 2h0m1-2h0m1 0h0m2 2h0m0-2h0m1 2h0m6 1h0m1-1h0m9 6h0m-13-3h0m-4 3h0m-5 2h0m-2-5h0m-1 1h0m-2 1h0m-2 3h0m-3-1h0m-2 1h0m-4-3h0m-1-1h0m-1 1h0m0 1h0m-5-3h0m-4 4h0m-1 1h0m-2-4h0m-3 2h0m0-2h0m-6 0h0m-1 2h0m-2 2h0m-9-4h0m0 4h0m-5-4h0m-1-1h0m-1 4h0m-5-3h0m-1 0h0m-274 3h0m-408-3h0m410 6h0m131 4h0m0-1h0m149-3h0m1-1h0m1 4h0m1-4h0m0 4h0m1 1h0m4 0h0m3-1h0m0 1h0m18-1h0m10 0h0m1 1h0m1-2h0m3-1h0m1 2h0m6-2h0m9 1h0m12-1h0m4 2h0m3-2h0m6 9h0m-1-4h0m-2 0h0m-5 4h0m-9-2h0m-1-3h0m-3 2h0m0-1h0m-2 0h0m-7 4h0m-1-4h0m-1 1h0m-2-2h0m-2 3h0m-7 0h0m-1 0h0m-1 0h0m-2-3h0m-1 4h0m-1 0h0m-2-4h0m0 4h0m0-1h0m-2 2h0m-1-1h0m-2-2h0m-7 1h0m0 1h0m-1-4h0m-1 5h0m-12-5h0m0 2h0m-1 2h0m-1-3h0m-2 2h0m-2-1h0m-1 0h0m-2-1h0m-1 1h0m-147 0h0m-11 1h0m0 2h0m-524-5h0m2 6h0m502 5h0m14-1h0m3-3h0m12 4h0m4-5h0m0 2h0m10 3h0m140-2h0m0 1h0m1 1h0m1-5h0m5 4h0m7 0h0m5-1h0m6 2h0m6-3h0m3 0h0m4-2h0m2 4h0m4-2h0m2 1h0m3-3h0m5 4h0m1-4h0m8 2h0m5 3h0m2-2h0m0 1h0m3 0h0m1-2h0m2 2h0m5-1h0m-1 4h0m0 1h0m-2-1h0m-2 4h0m-1-3h0m0 3h0m-2 0h0m-6-1h0m-9-1h0m-2 2h0m-2-1h0m-1-2h0m0 2h0m0-3h0m-9 1h0m-2 2h0m-2 0h0m0 1h0m-8-4h0m-2 4h0m-2-2h0m-2 1h0m-7 0h0m-3 0h0m0-3h0m-3 0h0m-5 2h0m-3-1h0m0 2h0m-142 1h0m-28-3h0m-18-1h0m-1 2h0m-7-2h0m-8 4h0m-481-3h0m3 6h0m485 0h0m3-1h0m0 2h0m9 1h0m4-3h0m21-1h0m5 4h0m5-2h0m6-1h0m0 3h0m1 1h0m7-1h0m138-1h0m4 1h0m0-2h0m9 2h0m18-1h0m2 2h0m6-2h0m4-2h0m3 2h0m10-3h0m0 1h0m7 2h0m1 2h0m0-1h0m1-2h0m4 0h0m4-2h0m-19 8h0m-7 3h0m0-5h0m-1 1h0m-9 3h0m-5 1h0m-1-2h0m-1-1h0m0 1h0m-3 2h0m-4-3h0m-5-2h0m-1 5h0m0-5h0m-1 5h0m-5-4h0m-3-1h0m-4 2h0m-1 1h0m-3-1h0m-138-2h0m-3 3h0m-3-3h0m-1 4h0m-8-4h0m-9 3h0m-3 0h0m-6 2h0m-1 0h0m-1-4h0m-12 3h0m-18-3h0m-69 1h0m77 8h0m17-2h0m9 2h0m3-2h0m1 0h0m0 1h0m12 2h0m1-5h0m1 2h0m6 0h0m151-1h0m3 0h0m6 3h0m1-4h0m4 4h0m3 1h0m5 0h0m4-3h0m4 0h0m0 3h0m6 0h0m3-2h0m-10 6h0m-1 0h0m-2 0h0m-3 1h0m-2-3h0m0 2h0m-3-3h0m0 3h0m-3 0h0m-1 2h0m-1-1h0m-6-4h0m-1 3h0m-172 0h0m-7 0h0m-3 2h0m-5-2h0m-6-1h0m-2 3h0m-2-5h0m-2 5h0m-2 0h0m-4-1h0m-8 7h0m17-4h0m5 0h0m1 1h0m4 3h0m7-3h0m3-2h0m178 1h0m3 4h0m4 0h0m3-3h0m1 0h0m1-2h0m2 1h0m273 6h0m-61 4h0m-218-2h0m-10 0h0m-1-3h0m-2 2h0m-2 2h0m-2-1h0m-4 1h0m-176-3h0m-4 2h0m-24-2h0m-15 0h0m-3 4h0m-5-1h0m0 7h0m10-3h0m5-1h0m5 1h0m23-2h0m1 0h0m168 5h0m2 0h0m0-1h0m7-2h0m1-1h0m6-1h0m0 1h0m7 2h0m1-2h0m0-1h0m5 3h0m1 2h0m5-3h0m0 3h0m207 0h0m2-4h0m0 4h0m2 0h0m1-2h0m2-2h0m1-1h0m1 1h0m0-1h0m2 0h0m41 4h0m6-3h0m3 0h0m-11 6h0m-5-1h0m-4 4h0m-3 1h0m-36-5h0m-3 2h0m0-1h0m-1 1h0m0-1h0m0 3h0m-2-1h0m-3 0h0m-2 0h0m-3 2h0m-1-1h0m-191 0h0m-4-4h0m-2 4h0m-1-3h0m-1 0h0m-5 1h0m-6-2h0m0 3h0m-1-1h0m-2 3h0m0-4h0m0 1h0m-2 1h0m-5 1h0m-4-1h0m-2 2h0m-2-5h0m0 3h0m-2-3h0m-1 5h0m-4-3h0m-5-1h0m-9 3h0m-3 0h0m-161-4h0m-18 5h0m0-2h0m-15 0h0m-4 2h0m-2-5h0m-1 3h0m-2 2h0m-3-3h0m-6 1h0m-2 1h0m-16 5h0m7-1h0m2-2h0m5 4h0m1-1h0m1 2h0m8-5h0m9 1h0m2 1h0m10 1h0m12-1h0m4-2h0m16 1h0m6 3h0m141 0h0m5-2h0m3 1h0m2-3h0m1 1h0m5-1h0m3 4h0m1-3h0m1 1h0m1-2h0m3 4h0m1-1h0m0 2h0m3-5h0m1 0h0m3 0h0m8 0h0m1 3h0m2 2h0m4-3h0m2 0h0m5-2h0m5 1h0m0 2h0m4 2h0m1-3h0m2 1h0m1-3h0m3 5h0m2-2h0m174 2h0m3 0h0m3-1h0m5-2h0m0 2h0m1-2h0m4-2h0m38 5h0m-4 2h0m-6 1h0m-4 3h0m-32-5h0m-4 0h0m0 1h0m-1 1h0m-3 1h0m-1 0h0m-3-1h0m-1 3h0m-1 0h0m-162 0h0m-3-5h0m-1 3h0m-2-1h0m-2 1h0m0 2h0m-4 0h0m-1-1h0m-2-2h0m-2-1h0m-1 1h0m-2 3h0m-1-5h0m-3 1h0m-1 2h0m-7-2h0m0-1h0m-1 5h0m-6-4h0m-2-1h0m-3 4h0m-2-1h0m-7-3h0m-3 4h0m-16-2h0m-5 1h0m-2-1h0m-5 3h0m-1-1h0m-3-1h0m-131-2h0m-2-1h0m-8 5h0m-30-5h0m-18 3h0m-2 2h0m0-2h0m-6 2h0m-14-4h0m-6-1h0m-5 1h0m-1 1h0m-1 0h0m-3 2h0m-1-1h0m-1 1h0m-370 0h0m372 2h0m5 3h0m1 2h0m11-1h0m21 0h0m8 1h0m43 0h0m7 0h0m5-4h0m120-1h0m6 2h0m4 3h0m4-1h0m2-4h0m0 2h0m7-2h0m9 4h0m3-3h0m1 4h0m3-5h0m3 3h0m2-1h0m5 0h0m7 1h0m3 1h0m0-1h0m1-1h0m2-2h0m1 3h0m1 1h0m2-4h0m2 0h0m2 4h0m1-3h0m3 1h0m0 3h0m3-5h0m1 1h0m1 3h0m3-3h0m0 4h0m1-1h0m5-3h0m0 4h0m2 0h0m5-3h0m152 2h0m2-2h0m1 0h0m1-1h0m3 1h0m3-1h0m5-1h0m22 8h0m-6 2h0m-30-4h0m-2 0h0m0 2h0m-1 1h0m-1-3h0m-1 2h0m-3-1h0m0 2h0m-1 0h0m0 2h0m-3 0h0m-142-3h0m0-2h0m-5 0h0m-4 3h0m-3-3h0m-1 5h0m-8-5h0m-1 2h0m-4-1h0m-2 0h0m-6-1h0m-7 0h0m-1 4h0m-2-2h0m-6 2h0m-3 0h0m-4-1h0m-2 0h0m-10-3h0m-2 1h0m0-1h0m-7 0h0m-5 1h0m-5 3h0m-5-2h0m-1-2h0m-117 5h0m-8-2h0m-2-1h0m-4-1h0m-5 1h0m-2-1h0m-17 1h0m-1-1h0m-9 2h0m-10 2h0m-6-4h0m-12 0h0m0 3h0m-8 1h0m-8 0h0m-3-3h0m6 8h0m0 1h0m16-2h0m3-3h0m6 2h0m5-1h0m15-1h0m2 0h0m32 5h0m11-3h0m2-1h0m0 2h0m115-2h0m1 0h0m3-1h0m2 0h0m3 0h0m5 0h0m5 2h0m2 0h0m2-1h0m12 4h0m7 0h0m3 0h0m8 0h0m4-4h0m2 3h0m1-1h0m5-3h0m0 3h0m2-1h0m0 2h0m1-1h0m3 0h0m1 0h0m1 2h0m1-1h0m2 0h0m1 1h0m0-1h0m3-3h0m1 0h0m3-1h0m142 4h0m0 1h0m3-1h0m2 0h0m2-3h0m0 1h0m3-1h0m0 1h0m32 4h0m-7 4h0m-36-2h0m-2-2h0m-1 2h0m-2 0h0m0 2h0m-1 0h0m-1 1h0m-1 0h0m-2 0h0m-1-3h0m-144-2h0m-2 2h0m-1 1h0m-1-1h0m-1-2h0m-8 2h0m-2 1h0m-2 0h0m-5-2h0m-2 1h0m-6-2h0m-1 3h0m-1-3h0m-2 2h0m-2-2h0m-2 4h0m-1 1h0m0-3h0m-6 2h0m-2 1h0m-3-5h0m-1 1h0m-6 1h0m-3 0h0m-2-1h0m-2 2h0m-1 1h0m-116-2h0m-4 1h0m-22-3h0m-12 1h0m-3 1h0m-9 0h0m-3 3h0m-5-5h0m-1 5h0m-2 0h0m-4 0h0m-8-3h0m-18-2h0m0 2h0m-86 3h0m-3-5h0m0 2h0m-2 1h0m-1 2h0m-2-1h0m-5 1h0m-279-3h0m3 6h0m1 1h0m268 1h0m3-2h0m3-2h0m0 3h0m1 2h0m2-5h0m8 5h0m9 0h0m98-5h0m34 4h0m6-3h0m9 0h0m19 0h0m4 3h0m119-4h0m2 4h0m0-2h0m0-1h0m5 1h0m0 3h0m5-1h0m7 0h0m2-3h0m1 2h0m3 1h0m1-3h0m2 2h0m8-1h0m1-2h0m0 4h0m1-3h0m4 4h0m3 0h0m1-1h0m1 1h0m0-2h0m5-1h0m6-2h0m141 4h0m0-1h0m1 0h0m2-1h0m1 3h0m2-2h0m1-3h0m1 4h0m2-2h0m3-2h0m23 5h0m6-2h0m5-2h0m-15 8h0m-5 0h0m-26-2h0m-1-1h0m-1 1h0m-1-1h0m0 2h0m-2-1h0m-1 0h0m0 2h0m-2-3h0m0 2h0m-3 2h0m-1 0h0m-151-1h0m-1 0h0m-4 0h0m0 2h0m-1-4h0m-5 4h0m0-3h0m-5 0h0m-2 0h0m-1 1h0m-4-3h0m-1 4h0m-1-4h0m0 4h0m-2-1h0m-1-1h0m0 1h0m-3-1h0m-2 2h0m-2-2h0m-117-2h0m-5 0h0m-3 1h0m-9 1h0m-12 3h0m-3 0h0m-18-5h0m-16 0h0m-15 5h0m-2-4h0m-89-1h0m-4 2h0m-2 1h0m-1 2h0m0-5h0m-8 5h0m-1-2h0m-5-1h0m0 2h0m-6-4h0m-1 1h0m-18 8h0m1-2h0m2 1h0m8 2h0m4-2h0m1 1h0m5 1h0m0-1h0m4 1h0m2-3h0m4-1h0m0 2h0m2 1h0m4-3h0m2 3h0m10-2h0m93 1h0m5 0h0m1 0h0m9 3h0m24 0h0m3-2h0m5-1h0m4-2h0m150 2h0m5-2h0m2 0h0m1 4h0m0-4h0m4 3h0m155 0h0m0 2h0m6-1h0m0-1h0m1 0h0m0-1h0m1-1h0m0 2h0m3-3h0m0 2h0m27 3h0m9-4h0m-15 7h0m-31-2h0m0 2h0m-2-2h0m-2 3h0m-1-1h0m-1 2h0m-2 1h0m-1 0h0m-145-5h0m-4 0h0m-2 0h0m-7 4h0m-4 0h0m-169-4h0m-7 1h0m-9 3h0m-2-1h0m-4 0h0m-2-2h0m-85 3h0m-14-4h0m-2 1h0m-2 3h0m-6-3h0m-3 1h0m-4-2h0m-1 4h0m0-3h0m-4 4h0m-5-4h0m-1 0h0m-2-1h0m-1 2h0m-2 2h0m-5 1h0m-3-5h0m0 4h0m-4-1h0m-1-2h0m-5 4h0m-1-5h0m-4 5h0m-232-3h0m4 8h0m226-3h0m5 1h0m6 3h0m2-1h0m1 0h0m7-4h0m1 2h0m14-2h0m0 2h0m13 0h0m4 1h0m1 2h0m4-4h0m0 3h0m14-1h0m95-3h0m334 4h0m1 0h0m2-1h0m0 2h0m0-1h0m4-2h0m0 1h0m1-2h0m0-1h0m1 0h0m1 1h0m0-1h0m1 0h0m28 2h0m6-1h0m-19 9h0m-26-3h0m-2 1h0m-1-2h0m0 2h0m-1 3h0m-1-5h0m0 3h0m-2 2h0m-1-1h0m-1 0h0m-415-1h0m-6-1h0m-5 3h0m-1-1h0m-5 0h0m-6-3h0m-2 4h0m-8-1h0m-17-1h0m-7 1h0m-1-2h0m-1 1h0m0-2h0m-2-1h0m-1 5h0m-1-4h0m-2-1h0m0 3h0m-4 2h0m-3-2h0m-1-1h0m8 6h0m16 3h0m3-2h0m6-3h0m4 4h0m1-1h0m4 0h0m6-1h0m9 0h0m0 2h0m1-3h0m14 0h0m1 3h0m4 0h0m1-1h0m3 0h0m397 2h0m2 0h0m1-2h0m3 0h0m2-2h0m2-1h0m0 1h0m21 4h0m5-3h0m1 0h0m4 0h0m-17 8h0m-2-1h0m-20-3h0m-4 1h0m-1 0h0m-1 0h0m-1-1h0m-1 1h0m-2 2h0m-381 2h0m-4-1h0m-6 1h0m-2 0h0m-5-4h0m-6 4h0m-2 0h0m-3-2h0m-5-2h0m-6-1h0m-1 0h0m-2 1h0m-3 4h0m-8 0h0m-8-1h0m-3-4h0m-4 2h0m0 2h0m-3 0h0m-8-1h0m-229 4h0m230-1h0m0 2h0m2 2h0m5 0h0m7-4h0m3 4h0m1 0h0m3-4h0m4 3h0m1-2h0m7 0h0m1 1h0m1 3h0m5-1h0m4-1h0m2-3h0m1 0h0m0 4h0m8-3h0m1 0h0m6-1h0m2 5h0m17-1h0m367 1h0m0-1h0m2-2h0m0 1h0m4-1h0m1 0h0m1-2h0m27 1h0m-17 10h0m-19-5h0m0 1h0m-1 1h0m-1 0h0m-2 0h0m0 1h0m-1-1h0m0-1h0m-1 0h0m0 3h0m0-1h0m-2 2h0m0-3h0m-3 3h0m-1 0h0m-349 0h0m-2-3h0m-8 3h0m-7-1h0m-5-4h0m0 3h0m-1 1h0m-17 0h0m-7-2h0m-9-2h0m-2 4h0m-1 0h0m-1 0h0m-1 0h0m-4-2h0m-1 1h0m-6 0h0m-3 1h0m0 1h0m-7-4h0m0 2h0m4 4h0m9 3h0m0-1h0m1-1h0m10 2h0m5-2h0m4-2h0m1 4h0m6-4h0m0 5h0m4-5h0m1 5h0m3 0h0m6-1h0m2-3h0m4 3h0m2-1h0m1-2h0m6 2h0m4-2h0m6 3h0m8-1h0m336 0h0m0 2h0m1 0h0m1-2h0m1 1h0m3-1h0m3-3h0m20 2h0m1 0h0m7-2h0m-25 10h0m-12-4h0m-2 1h0m-1 0h0m-1 0h0m-1 2h0m-1-2h0m-2 2h0m-1 0h0m-1 1h0m-2 1h0m-318-3h0m-1-1h0m-2 1h0m-15 0h0m-2 3h0m-10-1h0m-2 0h0m-6-4h0m-1 0h0m-1 3h0m-4-2h0m-2 2h0m-2-2h0m0 3h0m-14-4h0m-3 3h0m-3 2h0m-6-2h0m0-3h0m-14 0h0m6 8h0m13 0h0m4-1h0m5 4h0m5-3h0m3 0h0m0 1h0m3-1h0m6 0h0m0 3h0m2-5h0m1 5h0m21-1h0m5-3h0m6 0h0m1 0h0m2 1h0m3-2h0m313 5h0m2 0h0m1-4h0m2 0h0m0 2h0m1-2h0m0 2h0m2-2h0m2 0h0m-11 8h0m-1-3h0m-2 1h0m-1 0h0m0 3h0m-1-3h0m-1 1h0m0 1h0m0 2h0m-2-3h0m-2 3h0m0-2h0m-1 2h0m-289-3h0m0-1h0m-4 4h0m-3-4h0m-2 3h0m-1 1h0m-7-4h0m-4-1h0m-4 1h0m-3 0h0m-3-1h0m-16 3h0m-7 1h0m-1-2h0m-17-2h0m0 1h0m0 4h0m-1-2h0m-10 0h0m-6-3h0m-409 4h0m186 7h0m225-3h0m1-1h0m4 1h0m2-1h0m5 0h0m1 4h0m6-2h0m4-1h0m1 3h0m1-1h0m2-3h0m2 4h0m1-5h0m1 5h0m3-1h0m1-1h0m13 0h0m0-1h0m1 1h0m11-3h0m0 4h0m5-4h0m1 0h0m6 4h0m2 1h0m4-2h0m1-3h0m4 0h0m3 2h0m4 1h0m2 1h0m1-4h0m272 4h0m3-1h0m0 2h0m1-2h0m2 2h0m2-4h0m0 1h0m1-1h0m0 1h0m1-2h0m15 3h0m5-2h0m3-1h0m-22 11h0m-9-5h0m-3 1h0m-1 1h0m-3 2h0m-2 1h0m-261-4h0m-7 0h0m-3-1h0m-3 1h0m-1 1h0m-4-2h0m-1 4h0m0-1h0m-1 1h0m-2-1h0m-3-3h0m-4 0h0m-8 4h0m0-1h0m0 2h0m-1-4h0m0-1h0m-2 4h0m-1-2h0m-4-1h0m-3 3h0m-9-3h0m-3 1h0m0 2h0m-2-4h0m-1 4h0m-3 1h0m-6-5h0m-7 2h0m-5 3h0m-1 0h0m-2-1h0m-3-3h0m7 8h0m1 1h0m6-2h0m4 2h0m4-1h0m7-3h0m20 3h0m1 2h0m5-3h0m0 3h0m2-5h0m2 4h0m7-1h0m4 2h0m5-1h0m2-1h0m3-2h0m9 4h0m3 0h0m1-5h0m0 4h0m2-2h0m1 1h0m244 0h0m2 1h0m1 1h0m1-1h0m0-2h0m1 1h0m0 1h0m1-4h0m0 2h0m2-2h0m7 4h0m5 1h0m2-2h0m-21 4h0m-1-1h0m-1 0h0m-1 1h0m-2 3h0m-2-2h0m-2 1h0m0 2h0m-3 0h0m-2 0h0m-227-4h0m-3 3h0m-2-2h0m-2 1h0m-4-2h0m-2 3h0m-1-3h0m-3 4h0m-2-4h0m-3 2h0m-1-3h0m-2 2h0m-2 2h0m-1-1h0m-3-1h0m-4-2h0m-1 0h0m-2 4h0m-1-3h0m-9 1h0m-6-2h0m-8 4h0m-11-1h0m-7-3h0m-1 4h0m0-1h0m-5-2h0m-420 9h0m416-3h0m0 1h0m4 1h0m1 1h0m8-4h0m10 5h0m3-5h0m12 3h0m6 0h0m1-2h0m3 0h0m1 1h0m0 2h0m1-2h0m5 1h0m0 2h0m1-2h0m1 2h0m1 0h0m10-5h0m4 4h0m1-3h0m3-1h0m1 5h0m4 0h0m3-5h0m225 5h0m1-1h0m1 1h0m2-2h0m3-2h0m0 4h0m1-4h0m0 2h0m1-2h0m0-1h0m1 1h0m2-1h0m4 2h0m-3 4h0m-6 3h0m-7-2h0m-2 3h0m-1 1h0m-1-5h0m-1 2h0m-1 1h0m-1 2h0m0-1h0m-3 1h0m-3-1h0m-223-4h0m-1 1h0m-1 2h0m-11 1h0m-2-2h0m-1-2h0m0 3h0m-5-2h0m-9 2h0m-3-1h0m-5-1h0m-2 3h0m-2 0h0m-1 0h0m-8-1h0m-3 0h0m-9-3h0m-1 9h0m1 0h0m3 1h0m11-3h0m2 1h0m4-2h0m4 2h0m2 2h0m4-2h0m1 2h0m2-4h0m2 0h0m5 5h0m4-3h0m1 2h0m3 1h0m7-5h0m222 4h0m1 1h0m1-1h0m1 1h0m1 0h0m2 0h0m1-4h0m3-1h0m1 0h0m3 1h0m6 2h0m1-1h0m5-1h0m-12 7h0m-4 0h0m-7-2h0m-1 3h0m-3-3h0m0 3h0m-1-2h0m-1 2h0m-1 1h0m-1 1h0m0-3h0m-1 2h0m-2 1h0m0-1h0m-1 1h0m-222-5h0m-5 3h0m-2 1h0m-6 1h0m-4-1h0m-21-3h0m-1 4h0m-2-4h0m-234 4h0m235 4h0m2-3h0m0 2h0m9 1h0m8-3h0m1 0h0m0 1h0m0 1h0m2 2h0m5-1h0m229 2h0m1 0h0m1-1h0m1-1h0m1 0h0m1-3h0m0 2h0m4 0h0m4-1h0m0 3h0m-8 3h0m-7-1h0m-1 1h0m0-1h0m-2 1h0m-1-1h0m0 2h0m-1 3h0m-2-3h0m-1 1h0m-3 1h0m-1 0h0m-1 1h0m-220-5h0m-2 0h0m-2 1h0m-7 1h0m-7 0h0m0-1h0m-2-1h0m-226 6h0m1 5h0m228-5h0m3 4h0m3-1h0m2-3h0m3 1h0m216 4h0m1 0h0m2 0h0m1 0h0m2-2h0m0 1h0m2-1h0m0 1h0m1-4h0m0 2h0m0-1h0m1-1h0m4 5h0m3-2h0m4-3h0m-15 7h0m-4 0h0m-2 0h0m-1 0h0m-2 4h0m-1-2h0m0 2h0m-644-1h0m629 7h0m2-1h0m0 1h0m3-4h0m0 4h0m0-1h0m1 0h0m1-3h0m1 4h0m2-2h0m1-2h0m0-1h0m3 1h0m1 1h0m-13 7h0m-1-2h0m-1 1h0m-2 2h0m-1-4h0m-1 4h0m-1 0h0m-2 0h0m-1-1h0m-418 1h0m-202-3h0m28 10h0m580-2h0m4-1h0m0 2h0m1-2h0m1 0h0m0 1h0m2-1h0m2-2h0m1 2h0m-9 4h0m-2 1h0m-1 0h0m-1 2h0m-2 0h0m0-1h0m0-1h0m-7 4h0m-570-1h0m566 5h0m0 1h0m1-1h0m2-1h0m3-2h0m0 2h0m4 0h0m-16 6h0m0-1h0m-1-1h0m0 2h0m0 1h0m-1 1h0m-1-2h0m-2 0h0m-365 3h0m-1-2h0m4 6h0m350 1h0m1 1h0m2-4h0m1 3h0m1-1h0m0-2h0m1 0h0m3-1h0m2 1h0m0 1h0m0-2h0m-11 7h0m-1 1h0m0-1h0m0 2h0m-1-2h0m-3 1h0m0 1h0m-1-2h0m-3 3h0m-2 0h0m-3 1h0m-333 0h0m-186 1h0m514 4h0m1-1h0m1-1h0m1 1h0m3-3h0m1 0h0m-9 6h0m-2 2h0m0-1h0m-2 1h0m-1 1h0m-16 7h0m2 0h0m3-1h0m2 1h0m2-3h0m0 1h0m1 0h0m1-2h0m-10 7h0m-2 1h0m0-1h0m-1-1h0m-1 2h0m0 1h0m-1 1h0m-3-2h0m-1 3h0m-474-2h0m461 8h0m1-1h0m4-2h0m0 3h0m1-2h0m1-3h0m1 3h0m1-3h0m5 1h0m2-1h0m-11 7h0m-1-1h0m-2 1h0m0-1h0m-1 1h0m-3 0h0m0 3h0m-1-1h0m-1 1h0m-2 1h0m-445 3h0m431 2h0m2-2h0m4 3h0m1-3h0m0 2h0m0 1h0m3-4h0m1 0h0m1 0h0m-8 6h0m-2 2h0m-2-3h0m-1 2h0m-1 2h0m-1-2h0m-1 2h0m-1 0h0m-2 0h0m-6 2h0m0 2h0m1-1h0m2-1h0m1 0h0m1 0h0m-214 21h0m-2-3h0m7 13h0m-199 0h0m204 8h0m-9 13h0m0 5h0m-27 16h0m-65 45h0m-61 1h0"/><path stroke="#606060" stroke-width="2" stroke-linecap="square" d="M1276 423h0m2 1h0m11-3h0m1-1h0m3 8h0m-17 3h0m-6-3h0m-17 2h0m-29 7h0m2 0h0m5-1h0m3-1h0m7-2h0m6-1h0m2 0h0m42 3h0m-30 8h0m-47 1h0m12 2h0m5-1h0m21 2h0m32 2h0m-10 5h0m-6-2h0m-2-1h0m-48 3h0m-5-3h0m3 6h0m51 4h0m28-2h0m4 6h0m-29 2h0m-50 0h0m-3-2h0m1 3h0m2 3h0m53 0h0m25 6h0m-19 1h0m-52-4h0m-9 5h0m5 4h0m11-1h0m16 3h0m28-1h0m6 1h0m15-1h0m0-2h0m-6 4h0m-22 0h0m-2 1h0m-9 0h0m-5-1h0m-12 3h0m-7 1h0m-7-1h0m-4 0h0m216 116h0m23 0h0m-14 1h0m-6 0h0m-1 0h0m-7 1h0m-9 0h0m-8 0h0m0 4h0m-10-2h0m0-1h0m-3 2h0m-6 1h0m-3-1h0m0 1h0m-1-1h0m-3-2h0m-10 3h0m-12 0h0m-8 1h0m0 4h0m8-1h0m1 1h0m3-2h0m19 2h0m9-1h0m3 1h0m1-2h0m6-2h0m1 1h0m2 1h0m3 0h0m11 2h0m9-3h0m7 4h0m5-5h0m9 1h0m4 4h0m0-3h0m1 2h0m1 4h0m-1 2h0m0-1h0m-4-1h0m-5 1h0m-15 0h0m-7-1h0m-7 2h0m-1-3h0m-1 2h0m-13 0h0m-1 0h0m-2-1h0m-12 3h0m-1-1h0m-10-1h0m-15-1h0m-4 3h0m12 3h0m5 1h0m3 2h0m6 0h0m6-2h0m7 2h0m4-1h0m12-3h0m7 2h0m5 2h0m14-5h0m8 0h0m6 4h0m4-4h0m-5 7h0m-1 0h0m-7 0h0m-4-1h0m-17 2h0m-3-2h0m-11 1h0m-2-1h0m-7 0h0m-2 1h0m-7 2h0m-19-1h0m-6-1h0m-2 2h0m-141 134h0m3 2h0m669 1h0m2 0h0m5 8h0m-5-2h0m-785 4h0m789 0h0m1 0h0m3 3h0m1 0h0m5 7h0m-2 1h0m-3-1h0m-664 0h0m-123 1h0m127 2h0m309-1h0m4 5h0m351-5h0m1 3h0m0-2h0m1 2h0m0 3h0m-1 0h0m-661 1h0m-119 1h0m125 6h0m659-1h0m1-1h0m1 4h0m1-3h0m1 4h0m6 6h0m-1-2h0m-5-1h0m-353-1h0m-416 8h0m9-2h0m7 3h0m103 0h0m304-4h0m350 0h0m0 4h0m4 1h0m4 4h0m-1 1h0m-752 0h0m401 2h0m4 4h0m348-3h0m5 9h0m-2 0h0m-352-1h0m-411 2h0m-1-2h0m35 5h0m83 1h0m296-2h0m3 2h0m352 1h0m4 6h0m-1 0h0m-1-3h0m0 3h0m-718-1h0m-6-3h0m375 6h0m2 1h0m349 3h0m2-3h0m3 7h0m-1-2h0m-2 0h0m-346 4h0m-4-3h0m-354 2h0m13 6h0m346-3h0m0 4h0m3 0h0m-292 6h0m-45 0h0m-3 0h0m-56-2h0m-1-2h0m111 11h0m295 1h0m-325 5h0m-66-2h0m393 3h0m1 2h0m-283 9h0m-25-4h0m-254 7h0m187 0h0m70-2h0m31 11h0m-2-5h0m-9 3h0m-272 0h0m-3-2h0m5 8h0m0-2h0m1 4h0m7 8h0m1 4h0m285-3h0m-260 8h0m-9-3h0m-1 1h0m-12 0h0m-1 1h0m-2 0h0m-12 0h0m-8 0h0m-17-1h0m-2 0h0m-1 0h0m1 9h0m14-5h0m4 4h0m7-2h0m15-1h0m3-1h0m8 1h0m3 4h0m1000 5h0m-977-2h0m-77 0h0m0 2h0m3 4h0m30 0h0m14 3h0m3-3h0m0-2h0m2 4h0m985-1h0m5-2h0m-17 6h0m-10 3h0m-952 1h0m-9-4h0m-2-1h0m-35 2h0m-12-1h0m41 7h0m12 1h0m2 1h0m9-2h0m923 3h0m2 0h0m15-4h0m0-1h0m-913 8h0m-1-2h0m-5 4h0m-4 0h0m-1 1h0m-22-4h0m-2 1h0m-2-1h0m-36-1h0m-1 3h0m-8 2h0m-5-1h0m-2-4h0m8 7h0m23 2h0m9-2h0m20 4h0m33-5h0m4 3h0m93-1h0m0 3h0m4 0h0m756 0h0m1-3h0m11 0h0m3-2h0m-34 10h0m-828 0h0m-21 1h0m-21-2h0m-1-2h0m-1 2h0m-10 1h0m-14 1h0m-14-5h0m-17 5h0m1 4h0m24-1h0m15 1h0m17 0h0m6-2h0m10-1h0m17 2h0m5 0h0m10 1h0m0-1h0m86-1h0m3 1h0m2 3h0m711-1h0m1-1h0m8-1h0m2-1h0m6 0h0m-31 7h0m-3 2h0m-3 0h0m-774 0h0m-5-2h0m-6 0h0m-10-1h0m-4 1h0m-15-1h0m-12-1h0m-38 3h0m-17 2h0m2 4h0m2-1h0m6 2h0m31 1h0m44 0h0m4-3h0m1 2h0m2 0h0m14-2h0m7 2h0m744 1h0m3 0h0m6-1h0m-10 2h0m-6 4h0m-2 0h0m-4 0h0m-645 0h0m-88-1h0m-2 0h0m-3-2h0m-39 4h0m-3-2h0m-14-2h0m-8 3h0m-38-2h0m-1 3h0m-4-4h0m4 7h0m0 2h0m5-4h0m22 2h0m38-1h0m35 1h0m2-1h0m2-1h0m95 5h0m632-4h0m-627 10h0m-4-4h0m-105 1h0m-13 0h0m-15-2h0m-5 0h0m0 2h0m-9-1h0m-15 4h0m-6-1h0m-16-2h0m39 5h0m16-1h0m1 5h0m2-5h0m21 0h0m112 5h0m-124 5h0m-51-4h0m0 4h0m-2-4h0m-16 2h0m6 6h0m200 9h0m-139-5h0m-5 4h0m-4 1h0m-8-4h0m-20 0h0m-4 2h0m0-1h0m-4 0h0m-2-1h0m12 7h0m23-2h0m152 3h0m-155 7h0m-2 0h0m-5-2h0m-2 0h0m-4-2h0m174 6h0m1 5h0m4 5h0m3 4h0m5 13h0m7 7h0m-24 2h0m-18 7h0m-1 0h0m-6 2h0m65 14h0m0 3h0m54 3h0m212 0h0m292 1h0m-3 2h0m-4 3h0m-1 0h0m-49-1h0m0-1h0m-1 1h0m-1 1h0m-1 0h0m-218 0h0m0-5h0m0 2h0m-19 3h0m-198 0h0m-1-2h0m-3-2h0m-7 1h0m-3 0h0m-2 1h0m0-1h0m-2 0h0m-38 3h0m20 4h0m5-2h0m30 2h0m2 0h0m1 0h0m177 2h0m8-1h0m1-1h0m3-3h0m15 5h0m4-4h0m1-1h0m2 4h0m5-4h0m1 0h0m2 5h0m210-1h0m0-1h0m1-3h0m0 2h0m1 0h0m6-2h0m-10 6h0m-3 1h0m-5 1h0m0 1h0m-1-3h0m0 2h0m-1 2h0m-2 0h0m-193-2h0m-1 2h0m-1-4h0m0 3h0m-7-2h0m-9 4h0m-1-1h0m-5 0h0m-6-4h0m-2 0h0m-2 3h0m-15-2h0m-167 3h0m-16-2h0m-7 1h0m-4-1h0m-19-2h0m-1 0h0m-5 1h0m-5 1h0m-1-2h0m0 4h0m-6 1h0m-8 5h0m1 0h0m1-2h0m20 3h0m1-4h0m6 1h0m2 3h0m6-4h0m16-1h0m166 3h0m14-3h0m10 1h0m3 0h0m0 4h0m1-2h0m0-1h0m2 3h0m17-5h0m4 4h0m3-2h0m3 2h0m9-1h0m3-2h0m181 3h0m3-2h0m1 1h0m3 1h0m3-4h0m4 0h0m38 3h0m4-3h0m-12 7h0m-1 0h0m-6 2h0m-36-3h0m-6 2h0m-1 0h0m0 2h0m-2 0h0m-1 0h0m-165 0h0m-5 0h0m-5-2h0m0 2h0m-2-4h0m-1 4h0m-2-1h0m-19 2h0m-4-4h0m-4-1h0m-3 5h0m-16-1h0m-22 0h0m-4 1h0m0-5h0m-9 2h0m-133 3h0m-78-5h0m-3 2h0m0 7h0m53 0h0m42-1h0m3 2h0m119 1h0m14 0h0m14-5h0m20 5h0m3-5h0m1 0h0m5 2h0m4 1h0m3-1h0m7-2h0m6 2h0m6 3h0m3-2h0m5 0h0m2-2h0m153 3h0m0 1h0m5-4h0m1 0h0m1 0h0m1 0h0m2 1h0m3-2h0m31 5h0m1-1h0m3 1h0m1-2h0m3-3h0m1 2h0m-12 5h0m-38-1h0m-4 1h0m-1 2h0m-2-3h0m-1 3h0m-144 1h0m-6-4h0m-4 3h0m-1 0h0m-6 1h0m-2 0h0m-1 1h0m-9 0h0m-2-1h0m-11-1h0m-4-3h0m-1 4h0m-7-3h0m-8 1h0m-3-1h0m0 4h0m-11-2h0m-16-3h0m-3 3h0m-115-1h0m-5-1h0m-33 2h0m-56-1h0m1 5h0m25-1h0m45 2h0m13 3h0m128 0h0m3-1h0m3-4h0m7 2h0m14 0h0m8-1h0m3 0h0m4 3h0m16-4h0m6 3h0m11 0h0m4 1h0m6-4h0m4 0h0m132 4h0m0 1h0m3-1h0m1-1h0m2 1h0m2 0h0m0-3h0m2-1h0m1 0h0m36 2h0m-8 5h0m-5 3h0m-3 1h0m-30-5h0m-5 3h0m-2 0h0m-145-3h0m-4 2h0m0-1h0m-12 3h0m-6 0h0m-8-4h0m-1 1h0m-3 3h0m-5-3h0m-8 3h0m-3-1h0m-3 1h0m-8-2h0m-10 0h0m-109 3h0m-4-5h0m-48 1h0m-5-1h0m-22 5h0m-11-1h0m-4 0h0m1 3h0m4 2h0m1-2h0m0-1h0m19 2h0m55-1h0m13 1h0m1 2h0m113-3h0m1 0h0m27 0h0m14 4h0m4-4h0m7 2h0m149 1h0m1-2h0m1 1h0m1 0h0m1 0h0m4-1h0m39-2h0m-18 9h0m-37-2h0m-5 4h0m-148-3h0m-8-2h0m0 4h0m-2-2h0m-3 3h0m-1-4h0m-2-1h0m-6 0h0m-6 5h0m-2-3h0m-3 1h0m-126-3h0m-2 1h0m-4 0h0m-3 0h0m-1 2h0m-15-2h0m-1 2h0m-16 2h0m-16-2h0m-25-3h0m11 10h0m4-1h0m0-2h0m15 4h0m13-1h0m1 0h0m5 0h0m5-2h0m155 2h0m7-3h0m2-1h0m5 3h0m8 0h0m150 1h0m2 1h0m1-1h0m4 1h0m5-5h0m28 2h0m1 0h0m-8 4h0m-7 5h0m-30-3h0m-2 1h0m-1 2h0m-155-4h0m-2 2h0m-2-1h0m-6 3h0m-171-5h0m-2 3h0m-6-2h0m-1 3h0m-3-3h0m-4 4h0m-7-3h0m3 5h0m341 3h0m2-2h0m3 2h0m1-1h0m1-1h0m8-2h0m29 2h0m-10 6h0m-7 3h0m-26-5h0m-1 2h0m-2 0h0m-17 8h0m2 1h0m3-2h0m0 1h0m1-1h0m0-1h0m2 1h0m1-3h0m1 1h0m1-1h0m17 9h0m-29-2h0m-3 2h0m-6 1h0m-12 7h0m6-2h0m2-1h0m1-2h0m2 1h0m0 2h0m30-3h0m1 0h0m-17 8h0m-2 2h0m-20-2h0m-2-1h0m-7 4h0m-10 6h0m1-3h0m3-1h0m1 0h0m1 3h0m5-4h0m2 0h0m8 5h0m10-4h0m-13 7h0m-5 1h0m-15-3h0m-7 5h0m-3 0h0m-8 6h0m7-4h0m2-1h0m2 0h0m11 5h0m2-1h0m2-2h0m-7 6h0m-22-1h0m-5 3h0m-2 1h0m-11 5h0m3-1h0m1-1h0m1 0h0m0 1h0m2-1h0m15 3h0m5-4h0m-9 7h0m-12 3h0m-6-5h0m-2 0h0m-2 4h0m-1 0h0m-2-2h0m-1 0h0m-1 1h0m-2 0h0m-9 8h0m9-4h0m10 4h0m12-5h0m-23 9h0m-5 1h0m-3-4h0m-2 0h0m-2 3h0m-2 0h0m-1 1h0m-1 1h0m0-1h0m-2 1h0m-11 5h0m2-2h0m1 2h0m2 0h0m5-4h0m10 3h0m3-3h0m-12 8h0m-14-1h0m0-1h0m-2 3h0m-2 1h0m-2 0h0m-5 5h0m2 0h0m3-2h0m1-1h0m10 0h0m3 0h0m-10 6h0m-4 1h0m-4 2h0m-6 2h0m-5-4h0m-1 1h0m-7 3h0m-8 6h0m1-1h0m8-2h0m9-1h0m-4 5h0m-7 2h0m-5 2h0m-3-3h0m-3 1h0m-3-1h0m-1 4h0m-12 6h0m7 0h0m1-2h0m3-3h0m2 0h0m0 3h0m-11 7h0m-2 0h0m-1-2h0m-4 0h0m0-1h0m-2 2h0m0 1h0m-1 1h0m-1-1h0m-11 6h0m3-1h0m2-2h0m2-1h0m1 2h0m1 2h0m1-2h0m-11 5h0m-2 1h0m-1-1h0m-2 4h0m-1-1h0m-3 1h0m-1 0h0m-6 2h0m3 0h0m1 3h0m1-1h0m0-2h0m3 0h0m1 0h0m-12 6h0m-3 1h0m-3 3h0m0-2h0m-1 2h0m-13 6h0m2-2h0m1 1h0m2-1h0m2-1h0m3-2h0m-8 6h0m-1 0h0m-3 1h0m-3 2h0m-1 1h0m-3-1h0m-3 2h0m-2 3h0m2-2h0m2 1h0m-6 6h0m-7 0h0m-3-1h0m-2 3h0m-2 1h0m-11 6h0m1-1h0m9-2h0m2-1h0m-10 6h0m-3 0h0m0 3h0m-1-2h0m-1-1h0m-3 4h0m0-2h0m-3 2h0m-2 1h0m-5 4h0m2 1h0m1-3h0m1 3h0m2-3h0m1 2h0m-11 3h0m-1 0h0m-3 5h0m-5-1h0m-12 7h0m4 0h0m2-1h0m4-3h0m-12 8h0m-1-2h0m0-1h0m-1 2h0m0 3h0m-4 0h0m-7 5h0m3-2h0m1-2h0m2 2h0m-8 4h0m-4 1h0m-3 1h0m-3 1h0m-1 2h0m-4 5h0m3-2h0m1-2h0"/><path d="M1433.5 1165.6 A37 37 0 0 1 1498 1134.5" fill="none" stroke="#6e6e6e" stroke-width="2"/></g><path d="M1490.3 1147.4 L1563.7 1105.2" stroke="#ff0000" stroke-width="5"/><circle cx="1469.8" cy="1158.3" r="23.5" fill="#000" stroke="#d0102a" stroke-width="1.3"/><circle cx="1469.8" cy="1158.3" r="8" fill="#fff"/><circle cx="1584.2" cy="1093.2" r="23.5" fill="#000" stroke="#d0102a" stroke-width="1.3"/><circle cx="1584.2" cy="1093.2" r="8" fill="#fff"/><rect x="1527" y="1127.5" width="111" height="20.5" fill="#f1e9df"/><rect x="1413" y="1192.5" width="111" height="20.5" fill="#f1e9df"/></svg><div id="lb2" class="t" style="transform:scaleX(0.9195);left:1532.6px;top:1132px;font-size:13.5px;color:#000">Job 2060137- yc02</div><div id="lb1" class="t" style="transform:scaleX(0.9195);left:1418.5px;top:1197px;font-size:13.5px;color:#000">Job 2060137- yc01</div></body></html>
